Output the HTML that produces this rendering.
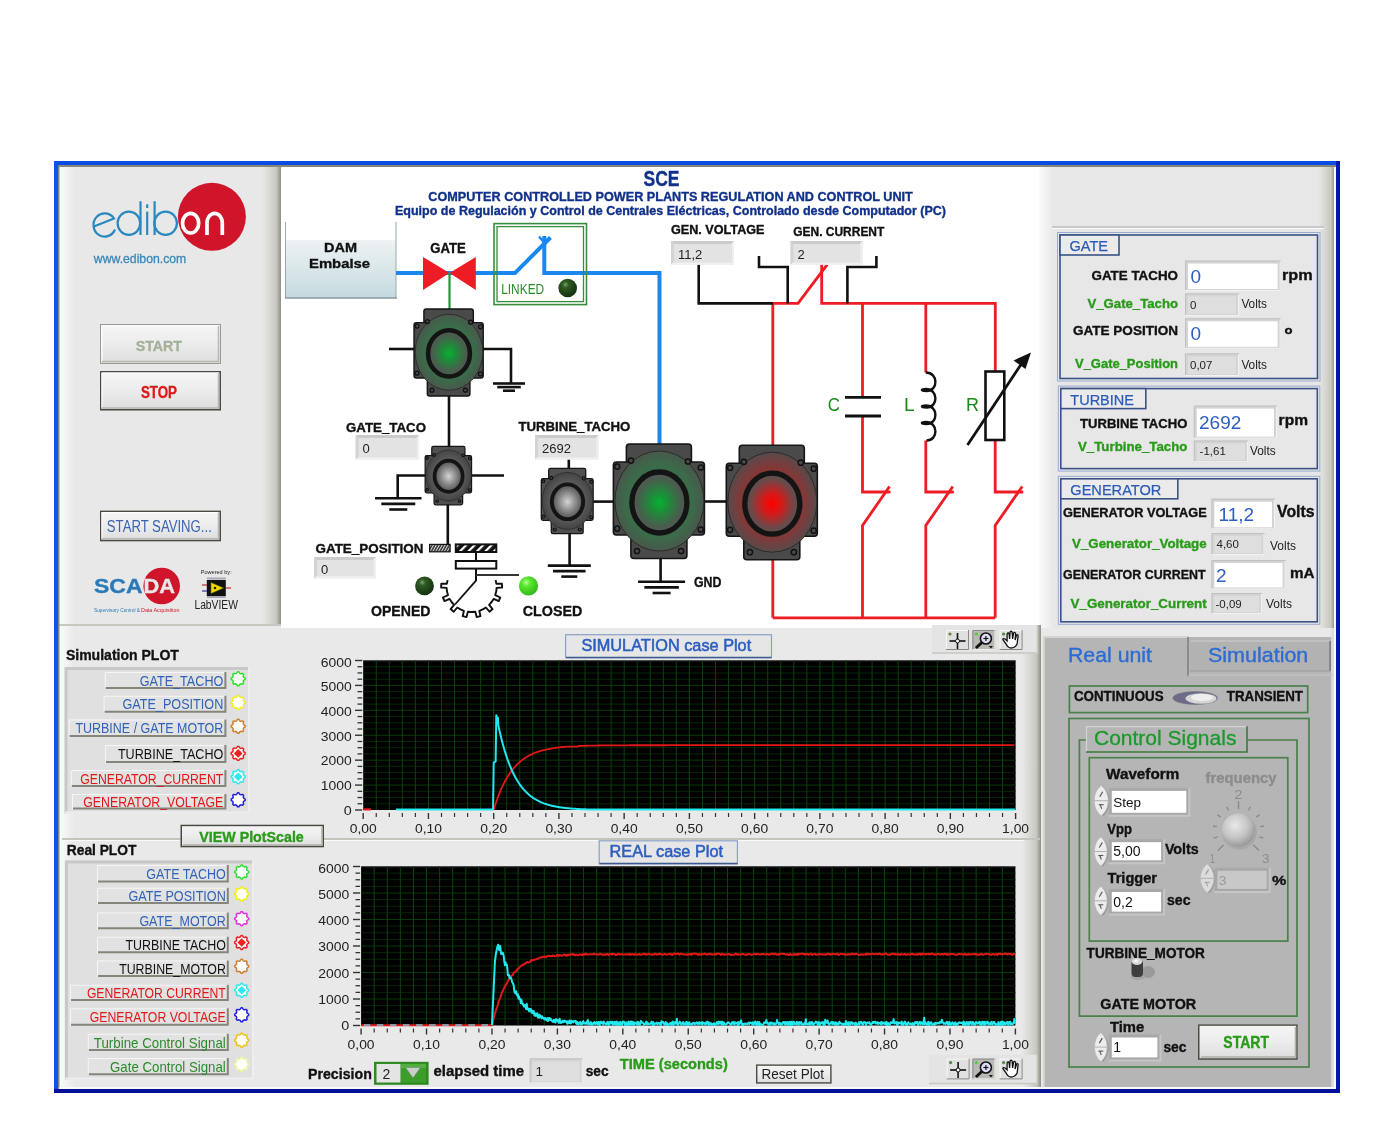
<!DOCTYPE html>
<html><head><meta charset="utf-8"><title>SCE</title>
<style>html,body{margin:0;padding:0;background:#fff;width:1393px;height:1125px;overflow:hidden}
svg{display:block;font-family:"Liberation Sans", sans-serif;will-change:transform}</style></head>
<body><svg width="1393" height="1125" viewBox="0 0 1393 1125">
<defs>
<linearGradient id="gLeftEdge" x1="0" x2="1" y1="0" y2="0"><stop offset="0" stop-color="#fbfbfb"/><stop offset="1" stop-color="#e8e8e8"/></linearGradient>
<linearGradient id="gRightEdge" x1="0" x2="1" y1="0" y2="0"><stop offset="0" stop-color="#e8e8e8"/><stop offset="0.75" stop-color="#c9c9c2"/><stop offset="1" stop-color="#8e8e84"/></linearGradient>
<linearGradient id="gBtn" x1="0" x2="0" y1="0" y2="1"><stop offset="0" stop-color="#f6f6f6"/><stop offset="0.5" stop-color="#ececec"/><stop offset="1" stop-color="#dcdcdc"/></linearGradient>
<linearGradient id="gWater" x1="0" x2="0" y1="0" y2="1"><stop offset="0" stop-color="#edf2f3"/><stop offset="0.45" stop-color="#dce8ea"/><stop offset="1" stop-color="#c4d9de"/></linearGradient>
<radialGradient id="gGreenCore" cx="0.5" cy="0.5" r="0.5"><stop offset="0" stop-color="#08b030"/><stop offset="0.35" stop-color="#1f8a3a"/><stop offset="0.8" stop-color="#4a5c4e"/><stop offset="1" stop-color="#555a55"/></radialGradient>
<radialGradient id="gGreenBody" cx="0.5" cy="0.5" r="0.5"><stop offset="0" stop-color="#2f7a45"/><stop offset="0.75" stop-color="#3c6a4a"/><stop offset="1" stop-color="#48584b"/></radialGradient>
<radialGradient id="gRedCore" cx="0.5" cy="0.5" r="0.5"><stop offset="0" stop-color="#ff0000"/><stop offset="0.35" stop-color="#d41a1a"/><stop offset="0.8" stop-color="#6a4a4a"/><stop offset="1" stop-color="#5a5050"/></radialGradient>
<radialGradient id="gRedBody" cx="0.5" cy="0.5" r="0.5"><stop offset="0" stop-color="#a82222"/><stop offset="0.75" stop-color="#7e3a3a"/><stop offset="1" stop-color="#584a4a"/></radialGradient>
<radialGradient id="gGrayCore" cx="0.5" cy="0.5" r="0.5"><stop offset="0" stop-color="#d4d4d4"/><stop offset="0.5" stop-color="#8e8e8e"/><stop offset="1" stop-color="#4e4e4e"/></radialGradient>
<radialGradient id="gGrayBody" cx="0.5" cy="0.5" r="0.5"><stop offset="0" stop-color="#7a7a7a"/><stop offset="0.65" stop-color="#5a5a5a"/><stop offset="1" stop-color="#444444"/></radialGradient>
<radialGradient id="gLedDark" cx="0.38" cy="0.32" r="0.7"><stop offset="0" stop-color="#7aa070"/><stop offset="0.25" stop-color="#2f5a22"/><stop offset="1" stop-color="#123010"/></radialGradient>
<radialGradient id="gLedBright" cx="0.38" cy="0.32" r="0.7"><stop offset="0" stop-color="#b8ff9a"/><stop offset="0.3" stop-color="#5ae830"/><stop offset="1" stop-color="#30b818"/></radialGradient>
<radialGradient id="gKnob" cx="0.4" cy="0.35" r="0.65"><stop offset="0" stop-color="#e8e8e8"/><stop offset="0.6" stop-color="#c4c4c4"/><stop offset="1" stop-color="#9a9a9a"/></radialGradient>
<pattern id="hatch" width="6" height="6" patternUnits="userSpaceOnUse" patternTransform="rotate(45)"><rect width="6" height="6" fill="#111"/><rect x="0" y="0" width="2.2" height="6" fill="#fff"/></pattern>
<pattern id="hatch2" width="2.5" height="4" patternUnits="userSpaceOnUse" patternTransform="rotate(30)"><rect width="2.5" height="4" fill="#333"/><rect x="0" y="0" width="1" height="4" fill="#ddd"/></pattern>
</defs>
<rect x="0" y="0" width="1393" height="1125" fill="#ffffff"/>
<rect x="58" y="165" width="1278" height="924" fill="#e9e9e9"/>
<rect x="59" y="167" width="222" height="459" fill="#e8e8e8"/>
<rect x="59" y="167" width="16" height="459" fill="url(#gLeftEdge)"/>
<rect x="262" y="167" width="19" height="459" fill="url(#gRightEdge)"/>
<rect x="59" y="624" width="222" height="2" fill="#c8c8c0"/>
<rect x="281" y="167" width="758" height="461" fill="#ffffff"/>
<rect x="1039" y="167" width="296" height="461" fill="#e7e7e7"/>
<rect x="1039" y="167" width="14" height="461" fill="url(#gLeftEdge)"/>
<rect x="1318" y="167" width="17" height="461" fill="url(#gRightEdge)"/>
<rect x="1052" y="226" width="272" height="2" fill="#c9c9c9"/>
<rect x="1052" y="228" width="272" height="1" fill="#fafafa"/>
<rect x="1022" y="625" width="19" height="464" fill="url(#gRightEdge)"/>
<rect x="59" y="626" width="16" height="463" fill="url(#gLeftEdge)"/>
<rect x="62" y="838" width="120" height="2" fill="#c4c4bc"/>
<rect x="62" y="840" width="120" height="1" fill="#fafafa"/>
<rect x="324" y="838" width="716" height="2" fill="#c4c4bc"/>
<rect x="324" y="840" width="700" height="1" fill="#fafafa"/>
<rect x="1041" y="628" width="294" height="461" fill="#e9e9e9"/>
<rect x="1043" y="637" width="288.5" height="450" fill="#b5b5b5"/>
<rect x="1331.5" y="628" width="2.5" height="461" fill="#dcdcdc"/>
<rect x="1043" y="637" width="2" height="450" fill="#d2d2d2"/>
<rect x="1043" y="636" width="146" height="2" fill="#d4d4d4"/>
<rect x="54" y="161" width="1286" height="4" fill="#0b4ce4"/>
<rect x="54" y="161" width="4" height="932" fill="#1050ee"/>
<rect x="1336" y="161" width="4" height="932" fill="#0616b0"/>
<rect x="54" y="1089" width="1286" height="4" fill="#020f9a"/>
<rect x="58" y="165" width="1278" height="2" fill="#85857a"/>
<rect x="58" y="165" width="1.5" height="924" fill="#85857a"/>
<rect x="1334" y="167" width="2" height="922" fill="#fafafa"/>
<rect x="59" y="1087" width="1277" height="2" fill="#fafafa"/>
<text x="643.5" y="185.6" font-size="22.5" fill="#10308a" font-weight="bold" text-anchor="start" textLength="36" lengthAdjust="spacingAndGlyphs" stroke="#10308a" stroke-width="0.35">SCE</text>
<text x="428.3" y="200.8" font-size="12.8" fill="#10308a" font-weight="bold" text-anchor="start" textLength="484.5" lengthAdjust="spacingAndGlyphs" stroke="#10308a" stroke-width="0.35">COMPUTER CONTROLLED POWER PLANTS REGULATION AND CONTROL UNIT</text>
<text x="395" y="214.8" font-size="12.6" fill="#10308a" font-weight="bold" text-anchor="start" textLength="551" lengthAdjust="spacingAndGlyphs" stroke="#10308a" stroke-width="0.35">Equipo de Regulación y Control de Centrales Eléctricas, Controlado desde Computador (PC)</text>
<rect x="286" y="240" width="110" height="58" fill="url(#gWater)"/>
<line x1="285.5" y1="222" x2="285.5" y2="298" stroke="#9aa" stroke-width="1"/>
<line x1="396" y1="222" x2="396" y2="298" stroke="#9aa" stroke-width="1"/>
<line x1="285" y1="298" x2="397" y2="298" stroke="#8a9aa0" stroke-width="1.5"/>
<text x="340.5" y="251.5" font-size="13.5" fill="#111" font-weight="bold" text-anchor="middle" textLength="33" lengthAdjust="spacingAndGlyphs" stroke="#111" stroke-width="0.35">DAM</text>
<text x="339.5" y="267.5" font-size="13.5" fill="#111" font-weight="bold" text-anchor="middle" textLength="61" lengthAdjust="spacingAndGlyphs" stroke="#111" stroke-width="0.35">Embalse</text>
<path d="M396 273.1 L514.9 273.1 L550.5 237.5" stroke="#1a88f0" stroke-width="4" fill="none" stroke-linejoin="round"/>
<path d="M544.3 236 L544.3 273.1 L659.5 273.1 L659.5 445" stroke="#1a88f0" stroke-width="4" fill="none"/>
<path d="M539 236.5 L545.5 244" stroke="#1a88f0" stroke-width="2.5" fill="none"/>
<path d="M423 257 L423 290 L449.5 273.1 Z" stroke="none" stroke-width="0" fill="#ee1c24"/>
<path d="M475.8 257 L475.8 290 L449.5 273.1 Z" stroke="none" stroke-width="0" fill="#ee1c24"/>
<line x1="449.5" y1="273" x2="449.5" y2="309" stroke="#1f9a3c" stroke-width="2.2"/>
<text x="448" y="252.6" font-size="13.8" fill="#111" font-weight="bold" text-anchor="middle" textLength="35.6" lengthAdjust="spacingAndGlyphs" stroke="#111" stroke-width="0.35">GATE</text>
<rect x="494" y="223.6" width="92.5" height="81" fill="none" stroke="#3a8c3a" stroke-width="1.6"/>
<rect x="497" y="226.6" width="86.5" height="75" fill="none" stroke="#3a8c3a" stroke-width="1.3"/>
<text x="501.2" y="294" font-size="14.5" fill="#2a8a2a" font-weight="normal" text-anchor="start" textLength="43" lengthAdjust="spacingAndGlyphs">LINKED</text>
<circle cx="567.7" cy="288" r="9.3" fill="url(#gLedDark)"/>
<line x1="389" y1="349" x2="415" y2="349" stroke="#111" stroke-width="2.6"/>
<path d="M482 349 L511 349 L511 384" stroke="#111" stroke-width="2.6" fill="none"/>
<line x1="493.0" y1="383.5" x2="525.0" y2="383.5" stroke="#111" stroke-width="2.6"/>
<line x1="497.25" y1="387.1" x2="520.75" y2="387.1" stroke="#111" stroke-width="2.6"/>
<line x1="503.0" y1="390.7" x2="515.0" y2="390.7" stroke="#111" stroke-width="2.6"/>
<line x1="449" y1="390" x2="449" y2="450" stroke="#111" stroke-width="2.6"/>
<g transform="translate(449,353) scale(0.76)"><rect x="-33" y="-58" width="65" height="45" rx="3" fill="#4a4a4a" stroke="#151515" stroke-width="1.8863914845565073"/><rect x="-46" y="-40" width="91" height="73" rx="3" fill="#4a4a4a" stroke="#151515" stroke-width="1.8863914845565073"/><rect x="-28.5" y="14" width="56" height="42.5" rx="3" fill="#4a4a4a" stroke="#151515" stroke-width="1.8863914845565073"/><ellipse cx="0" cy="-1" rx="44.5" ry="50" fill="url(#gGreenBody)" stroke="#262626" stroke-width="1.032370802417528"/><circle cx="-28.4" cy="-41.4" r="2.6" fill="#4a4a4a" stroke="#111" stroke-width="1.7206180040292134"/><circle cx="28.5" cy="-40.5" r="2.6" fill="#4a4a4a" stroke="#111" stroke-width="1.7206180040292134"/><circle cx="-42.2" cy="-35.4" r="2.6" fill="#4a4a4a" stroke="#111" stroke-width="1.7206180040292134"/><circle cx="41.4" cy="-34.5" r="2.6" fill="#4a4a4a" stroke="#111" stroke-width="1.7206180040292134"/><circle cx="-42.2" cy="26.6" r="2.6" fill="#4a4a4a" stroke="#111" stroke-width="1.7206180040292134"/><circle cx="41.4" cy="27.5" r="2.6" fill="#4a4a4a" stroke="#111" stroke-width="1.7206180040292134"/><circle cx="-22.4" cy="49" r="2.6" fill="#4a4a4a" stroke="#111" stroke-width="1.7206180040292134"/><circle cx="21.6" cy="49" r="2.6" fill="#4a4a4a" stroke="#111" stroke-width="1.7206180040292134"/><ellipse cx="0" cy="0.5" rx="27.5" ry="30.5" fill="url(#gGreenCore)" stroke="#141414" stroke-width="5.996664518838171"/></g>
<path d="M426 475.5 L397.7 475.5 L397.7 498" stroke="#111" stroke-width="2.6" fill="none"/>
<line x1="375.05" y1="498.3" x2="421.55" y2="498.3" stroke="#111" stroke-width="2.6"/>
<line x1="381.3" y1="503.90000000000003" x2="415.3" y2="503.90000000000003" stroke="#111" stroke-width="2.6"/>
<line x1="389.3" y1="509.5" x2="407.3" y2="509.5" stroke="#111" stroke-width="2.6"/>
<line x1="471" y1="475.5" x2="504" y2="475.5" stroke="#111" stroke-width="2.6"/>
<line x1="447.8" y1="500" x2="447.8" y2="545" stroke="#111" stroke-width="2.6"/>
<g transform="translate(448.6,476) scale(0.51)"><rect x="-33" y="-58" width="65" height="45" rx="3" fill="#505050" stroke="#151515" stroke-width="2.3965024482331683"/><rect x="-46" y="-40" width="91" height="73" rx="3" fill="#505050" stroke="#151515" stroke-width="2.3965024482331683"/><rect x="-28.5" y="14" width="56" height="42.5" rx="3" fill="#505050" stroke="#151515" stroke-width="2.3965024482331683"/><ellipse cx="0" cy="-1" rx="44.5" ry="50" fill="url(#gGrayBody)" stroke="#262626" stroke-width="1.260252075625209"/><circle cx="-28.4" cy="-41.4" r="2.6" fill="#4a4a4a" stroke="#111" stroke-width="2.100420126042015"/><circle cx="28.5" cy="-40.5" r="2.6" fill="#4a4a4a" stroke="#111" stroke-width="2.100420126042015"/><circle cx="-42.2" cy="-35.4" r="2.6" fill="#4a4a4a" stroke="#111" stroke-width="2.100420126042015"/><circle cx="41.4" cy="-34.5" r="2.6" fill="#4a4a4a" stroke="#111" stroke-width="2.100420126042015"/><circle cx="-42.2" cy="26.6" r="2.6" fill="#4a4a4a" stroke="#111" stroke-width="2.100420126042015"/><circle cx="41.4" cy="27.5" r="2.6" fill="#4a4a4a" stroke="#111" stroke-width="2.100420126042015"/><circle cx="-22.4" cy="49" r="2.6" fill="#4a4a4a" stroke="#111" stroke-width="2.100420126042015"/><circle cx="21.6" cy="49" r="2.6" fill="#4a4a4a" stroke="#111" stroke-width="2.100420126042015"/><ellipse cx="0" cy="0.5" rx="27.5" ry="30.5" fill="url(#gGrayCore)" stroke="#141414" stroke-width="7.175782891755845"/></g>
<line x1="568.8" y1="457" x2="568.8" y2="470" stroke="#111" stroke-width="2.6"/>
<line x1="593" y1="501.6" x2="615" y2="501.6" stroke="#111" stroke-width="2.6"/>
<line x1="569.6" y1="530" x2="569.6" y2="566" stroke="#111" stroke-width="2.6"/>
<line x1="547.8" y1="565.6" x2="590.8" y2="565.6" stroke="#111" stroke-width="2.6"/>
<line x1="553.05" y1="571.1" x2="585.55" y2="571.1" stroke="#111" stroke-width="2.6"/>
<line x1="561.3" y1="576.6" x2="577.3" y2="576.6" stroke="#111" stroke-width="2.6"/>
<g transform="translate(567.5,501.5) scale(0.57)"><rect x="-33" y="-58" width="65" height="45" rx="3" fill="#505050" stroke="#151515" stroke-width="2.2417907313710455"/><rect x="-46" y="-40" width="91" height="73" rx="3" fill="#505050" stroke="#151515" stroke-width="2.2417907313710455"/><rect x="-28.5" y="14" width="56" height="42.5" rx="3" fill="#505050" stroke="#151515" stroke-width="2.2417907313710455"/><ellipse cx="0" cy="-1" rx="44.5" ry="50" fill="url(#gGrayBody)" stroke="#262626" stroke-width="1.1920791213585396"/><circle cx="-28.4" cy="-41.4" r="2.6" fill="#4a4a4a" stroke="#111" stroke-width="1.986798535597566"/><circle cx="28.5" cy="-40.5" r="2.6" fill="#4a4a4a" stroke="#111" stroke-width="1.986798535597566"/><circle cx="-42.2" cy="-35.4" r="2.6" fill="#4a4a4a" stroke="#111" stroke-width="1.986798535597566"/><circle cx="41.4" cy="-34.5" r="2.6" fill="#4a4a4a" stroke="#111" stroke-width="1.986798535597566"/><circle cx="-42.2" cy="26.6" r="2.6" fill="#4a4a4a" stroke="#111" stroke-width="1.986798535597566"/><circle cx="41.4" cy="27.5" r="2.6" fill="#4a4a4a" stroke="#111" stroke-width="1.986798535597566"/><circle cx="-22.4" cy="49" r="2.6" fill="#4a4a4a" stroke="#111" stroke-width="1.986798535597566"/><circle cx="21.6" cy="49" r="2.6" fill="#4a4a4a" stroke="#111" stroke-width="1.986798535597566"/><ellipse cx="0" cy="0.5" rx="27.5" ry="30.5" fill="url(#gGrayCore)" stroke="#141414" stroke-width="6.825464065654548"/></g>
<line x1="703" y1="501.5" x2="729" y2="501.5" stroke="#111" stroke-width="2.6"/>
<line x1="660.6" y1="555" x2="660.6" y2="582" stroke="#111" stroke-width="2.6"/>
<line x1="638.1" y1="581.8" x2="685.1" y2="581.8" stroke="#111" stroke-width="2.6"/>
<line x1="644.35" y1="587.4" x2="678.85" y2="587.4" stroke="#111" stroke-width="2.6"/>
<line x1="652.6" y1="593.0" x2="670.6" y2="593.0" stroke="#111" stroke-width="2.6"/>
<g transform="translate(659.4,502) scale(1.0)"><rect x="-33" y="-58" width="65" height="45" rx="3" fill="#4a4a4a" stroke="#151515" stroke-width="1.6"/><rect x="-46" y="-40" width="91" height="73" rx="3" fill="#4a4a4a" stroke="#151515" stroke-width="1.6"/><rect x="-28.5" y="14" width="56" height="42.5" rx="3" fill="#4a4a4a" stroke="#151515" stroke-width="1.6"/><ellipse cx="0" cy="-1" rx="44.5" ry="50" fill="url(#gGreenBody)" stroke="#262626" stroke-width="0.9"/><circle cx="-28.4" cy="-41.4" r="2.6" fill="#4a4a4a" stroke="#111" stroke-width="1.5"/><circle cx="28.5" cy="-40.5" r="2.6" fill="#4a4a4a" stroke="#111" stroke-width="1.5"/><circle cx="-42.2" cy="-35.4" r="2.6" fill="#4a4a4a" stroke="#111" stroke-width="1.5"/><circle cx="41.4" cy="-34.5" r="2.6" fill="#4a4a4a" stroke="#111" stroke-width="1.5"/><circle cx="-42.2" cy="26.6" r="2.6" fill="#4a4a4a" stroke="#111" stroke-width="1.5"/><circle cx="41.4" cy="27.5" r="2.6" fill="#4a4a4a" stroke="#111" stroke-width="1.5"/><circle cx="-22.4" cy="49" r="2.6" fill="#4a4a4a" stroke="#111" stroke-width="1.5"/><circle cx="21.6" cy="49" r="2.6" fill="#4a4a4a" stroke="#111" stroke-width="1.5"/><ellipse cx="0" cy="0.5" rx="27.5" ry="30.5" fill="url(#gGreenCore)" stroke="#141414" stroke-width="5.3"/></g>
<text x="694" y="586.8" font-size="14" fill="#111" font-weight="bold" text-anchor="start" textLength="27.5" lengthAdjust="spacingAndGlyphs" stroke="#111" stroke-width="0.35">GND</text>
<path d="M772.8 617.8 L772.8 303.4 L798 303.4 L827.2 264.7" stroke="#ee1c24" stroke-width="2.8" fill="none"/>
<path d="M821.7 263.4 L821.7 303.4 L995.3 303.4 L995.3 372" stroke="#ee1c24" stroke-width="2.8" fill="none"/>
<line x1="862.5" y1="303.4" x2="862.5" y2="397.5" stroke="#ee1c24" stroke-width="2.8"/>
<line x1="925.8" y1="303.4" x2="925.8" y2="372.5" stroke="#ee1c24" stroke-width="2.8"/>
<g transform="translate(772.3,503.2) scale(1.0)"><rect x="-33" y="-58" width="65" height="45" rx="3" fill="#4a4a4a" stroke="#151515" stroke-width="1.6"/><rect x="-46" y="-40" width="91" height="73" rx="3" fill="#4a4a4a" stroke="#151515" stroke-width="1.6"/><rect x="-28.5" y="14" width="56" height="42.5" rx="3" fill="#4a4a4a" stroke="#151515" stroke-width="1.6"/><ellipse cx="0" cy="-1" rx="44.5" ry="50" fill="url(#gRedBody)" stroke="#262626" stroke-width="0.9"/><circle cx="-28.4" cy="-41.4" r="2.6" fill="#4a4a4a" stroke="#111" stroke-width="1.5"/><circle cx="28.5" cy="-40.5" r="2.6" fill="#4a4a4a" stroke="#111" stroke-width="1.5"/><circle cx="-42.2" cy="-35.4" r="2.6" fill="#4a4a4a" stroke="#111" stroke-width="1.5"/><circle cx="41.4" cy="-34.5" r="2.6" fill="#4a4a4a" stroke="#111" stroke-width="1.5"/><circle cx="-42.2" cy="26.6" r="2.6" fill="#4a4a4a" stroke="#111" stroke-width="1.5"/><circle cx="41.4" cy="27.5" r="2.6" fill="#4a4a4a" stroke="#111" stroke-width="1.5"/><circle cx="-22.4" cy="49" r="2.6" fill="#4a4a4a" stroke="#111" stroke-width="1.5"/><circle cx="21.6" cy="49" r="2.6" fill="#4a4a4a" stroke="#111" stroke-width="1.5"/><ellipse cx="0" cy="0.5" rx="27.5" ry="30.5" fill="url(#gRedCore)" stroke="#141414" stroke-width="5.3"/></g>
<path d="M698.7 263 L698.7 303.4 L773 303.4" stroke="#111" stroke-width="2.6" fill="none"/>
<path d="M759 256 L759 267 L787.7 267 L787.7 303.4" stroke="#111" stroke-width="2.6" fill="none"/>
<path d="M876.4 256 L876.4 267 L847.4 267 L847.4 303.4" stroke="#111" stroke-width="2.6" fill="none"/>
<path d="M862.5 417 L862.5 492 L890.5 492" stroke="#ee1c24" stroke-width="2.8" fill="none"/>
<path d="M889.5 486.5 L862.5 525.5 L862.5 617.8" stroke="#ee1c24" stroke-width="2.8" fill="none"/>
<path d="M925.8 440.5 L925.8 492 L953.8 492" stroke="#ee1c24" stroke-width="2.8" fill="none"/>
<path d="M952.8 486.5 L925.8 525.5 L925.8 617.8" stroke="#ee1c24" stroke-width="2.8" fill="none"/>
<path d="M995.2 440.5 L995.2 492 L1023.2 492" stroke="#ee1c24" stroke-width="2.8" fill="none"/>
<path d="M1022.2 486.5 L995.2 525.5 L995.2 617.8" stroke="#ee1c24" stroke-width="2.8" fill="none"/>
<line x1="772.8" y1="617.8" x2="995.2" y2="617.8" stroke="#ee1c24" stroke-width="2.8"/>
<line x1="845" y1="397.3" x2="881" y2="397.3" stroke="#111" stroke-width="2.8"/>
<line x1="845" y1="416" x2="881" y2="416" stroke="#111" stroke-width="2.8"/>
<text x="827.8" y="410.8" font-size="18.5" fill="#1a8a1a" font-weight="normal" text-anchor="start" textLength="12.2" lengthAdjust="spacingAndGlyphs">C</text>
<path d="M925.8 372.5 C938.5 372.5 938.5 391.0 926.5 391.0 C920.5 391.0 920.5 389.0 925.8 389.0 C938.5 389.0 938.5 407.5 926.5 407.5 C920.5 407.5 920.5 405.5 925.8 405.5 C938.5 405.5 938.5 424.0 926.5 424.0 C920.5 424.0 920.5 422.0 925.8 422.0 C938.5 422.0 938.5 440.5 926.5 440.5" stroke="#111" stroke-width="2.4" fill="none"/>
<text x="904" y="410.8" font-size="18.5" fill="#1a8a1a" font-weight="normal" text-anchor="start" textLength="10.6" lengthAdjust="spacingAndGlyphs">L</text>
<rect x="985.5" y="371.5" width="18.8" height="68.5" fill="#fff" stroke="#111" stroke-width="2.6"/>
<text x="966" y="410.8" font-size="18.5" fill="#1a8a1a" font-weight="normal" text-anchor="start" textLength="13" lengthAdjust="spacingAndGlyphs">R</text>
<line x1="967.5" y1="445" x2="1022" y2="363" stroke="#111" stroke-width="2.8"/>
<path d="M1031 352.5 L1013.5 360.5 L1025.5 369 Z" stroke="none" stroke-width="0" fill="#111"/>
<rect x="355.6" y="435" width="63.5" height="24.5" fill="#e3e3e3"/>
<path d="M355.6 435 L419.1 435 L416.1 438 L358.6 438 Z" fill="#cbcbcb"/>
<path d="M355.6 435 L358.6 438 L358.6 456.5 L355.6 459.5 Z" fill="#d4d4d4"/>
<path d="M419.1 435 L419.1 459.5 L417.1 457.5 L417.1 437 Z" fill="#f0f0f0"/>
<path d="M355.6 459.5 L419.1 459.5 L417.1 457.5 L357.6 457.5 Z" fill="#f2f2f2"/>
<text x="362.6" y="453.13" font-size="13" fill="#222" font-weight="normal" text-anchor="start">0</text>
<text x="346" y="431.5" font-size="13.2" fill="#111" font-weight="bold" text-anchor="start" textLength="80" lengthAdjust="spacingAndGlyphs" stroke="#111" stroke-width="0.35">GATE_TACO</text>
<rect x="535" y="435" width="63.5" height="24.5" fill="#e3e3e3"/>
<path d="M535 435 L598.5 435 L595.5 438 L538 438 Z" fill="#cbcbcb"/>
<path d="M535 435 L538 438 L538 456.5 L535 459.5 Z" fill="#d4d4d4"/>
<path d="M598.5 435 L598.5 459.5 L596.5 457.5 L596.5 437 Z" fill="#f0f0f0"/>
<path d="M535 459.5 L598.5 459.5 L596.5 457.5 L537 457.5 Z" fill="#f2f2f2"/>
<text x="542" y="453.13" font-size="13" fill="#222" font-weight="normal" text-anchor="start">2692</text>
<text x="518.4" y="431" font-size="13.2" fill="#111" font-weight="bold" text-anchor="start" textLength="112" lengthAdjust="spacingAndGlyphs" stroke="#111" stroke-width="0.35">TURBINE_TACHO</text>
<text x="671" y="234.3" font-size="12.8" fill="#111" font-weight="bold" text-anchor="start" textLength="93.5" lengthAdjust="spacingAndGlyphs" stroke="#111" stroke-width="0.35">GEN. VOLTAGE</text>
<rect x="671" y="241" width="63" height="23.7" fill="#e3e3e3"/>
<path d="M671 241 L734 241 L731 244 L674 244 Z" fill="#cbcbcb"/>
<path d="M671 241 L674 244 L674 261.7 L671 264.7 Z" fill="#d4d4d4"/>
<path d="M734 241 L734 264.7 L732 262.7 L732 243 Z" fill="#f0f0f0"/>
<path d="M671 264.7 L734 264.7 L732 262.7 L673 262.7 Z" fill="#f2f2f2"/>
<text x="678" y="258.72999999999996" font-size="13" fill="#222" font-weight="normal" text-anchor="start">11,2</text>
<text x="793.3" y="236" font-size="12.6" fill="#111" font-weight="bold" text-anchor="start" textLength="91" lengthAdjust="spacingAndGlyphs" stroke="#111" stroke-width="0.35">GEN. CURRENT</text>
<rect x="790.5" y="241" width="72" height="23.7" fill="#e3e3e3"/>
<path d="M790.5 241 L862.5 241 L859.5 244 L793.5 244 Z" fill="#cbcbcb"/>
<path d="M790.5 241 L793.5 244 L793.5 261.7 L790.5 264.7 Z" fill="#d4d4d4"/>
<path d="M862.5 241 L862.5 264.7 L860.5 262.7 L860.5 243 Z" fill="#f0f0f0"/>
<path d="M790.5 264.7 L862.5 264.7 L860.5 262.7 L792.5 262.7 Z" fill="#f2f2f2"/>
<text x="797.5" y="258.72999999999996" font-size="13" fill="#222" font-weight="normal" text-anchor="start">2</text>
<rect x="314" y="557" width="62" height="21.5" fill="#e3e3e3"/>
<path d="M314 557 L376 557 L373 560 L317 560 Z" fill="#cbcbcb"/>
<path d="M314 557 L317 560 L317 575.5 L314 578.5 Z" fill="#d4d4d4"/>
<path d="M376 557 L376 578.5 L374 576.5 L374 559 Z" fill="#f0f0f0"/>
<path d="M314 578.5 L376 578.5 L374 576.5 L316 576.5 Z" fill="#f2f2f2"/>
<text x="321" y="573.63" font-size="13" fill="#222" font-weight="normal" text-anchor="start">0</text>
<text x="315.5" y="553" font-size="13.2" fill="#111" font-weight="bold" text-anchor="start" textLength="108" lengthAdjust="spacingAndGlyphs" stroke="#111" stroke-width="0.35">GATE_POSITION</text>
<rect x="429.6" y="544.4" width="20.5" height="7.4" fill="url(#hatch2)" stroke="#111" stroke-width="1.2"/>
<rect x="455.8" y="544.4" width="40.5" height="7.6" fill="url(#hatch)" stroke="#111" stroke-width="2"/>
<line x1="476" y1="552" x2="476" y2="561" stroke="#111" stroke-width="2"/>
<rect x="455.8" y="561" width="40.5" height="7.6" fill="#fff" stroke="#111" stroke-width="2"/>
<line x1="476" y1="568.6" x2="476" y2="581" stroke="#111" stroke-width="2"/>
<line x1="476" y1="575" x2="519" y2="575" stroke="#333" stroke-width="2"/>
<line x1="476" y1="580.7" x2="455" y2="604.5" stroke="#111" stroke-width="1.8"/>
<path d="M447.6 580.1 L446.8 583.7 L441.3 583.6 L441.1 587.5 L446.6 587.9 L447.0 591.6 L447.0 591.6 L448.0 595.1 L442.9 597.5 L444.5 601.1 L449.6 598.9 L451.6 602.0 L451.6 602.0 L454.1 604.8 L450.6 609.1 L453.7 611.7 L457.3 607.5 L460.4 609.4 L460.4 609.4 L463.9 610.8 L462.7 616.2 L466.5 617.1 L467.9 611.7 L471.6 612.0 L471.6 612.0 L475.3 611.7 L476.7 617.1 L480.5 616.2 L479.3 610.8 L482.8 609.4 L482.8 609.4 L485.9 607.5 L489.5 611.7 L492.6 609.1 L489.1 604.8 L491.6 602.0 L491.6 602.0 L493.6 598.9 L498.7 601.1 L500.3 597.5 L495.2 595.1 L496.2 591.6 L496.2 591.6 L496.6 587.9 L502.1 587.5 L501.9 583.6 L496.4 583.7 L495.6 580.1" stroke="#111" stroke-width="1.9" fill="none" stroke-linejoin="round"/>
<circle cx="424.5" cy="585.9" r="9.4" fill="url(#gLedDark)"/>
<circle cx="528.5" cy="585.9" r="9.6" fill="url(#gLedBright)"/>
<text x="371" y="616.2" font-size="15.5" fill="#111" font-weight="bold" text-anchor="start" textLength="59.5" lengthAdjust="spacingAndGlyphs" stroke="#111" stroke-width="0.35">OPENED</text>
<text x="522.8" y="616.2" font-size="15.5" fill="#111" font-weight="bold" text-anchor="start" textLength="59.5" lengthAdjust="spacingAndGlyphs" stroke="#111" stroke-width="0.35">CLOSED</text>
<circle cx="211.9" cy="216.8" r="34" fill="#d0142a"/>
<path d="M93.8 226.5 L114 218.5 A11.2 11.6 0 1 0 115 229.5" stroke="#2a88c0" stroke-width="2.2" fill="none"/>
<ellipse cx="128.9" cy="223.2" rx="11.3" ry="11.6" fill="none" stroke="#2a88c0" stroke-width="2.2"/>
<line x1="140.5" y1="201.2" x2="140.5" y2="235" stroke="#2a88c0" stroke-width="2.2"/>
<line x1="147.2" y1="211.6" x2="147.2" y2="235" stroke="#2a88c0" stroke-width="2.2"/>
<line x1="147.2" y1="204.3" x2="147.2" y2="208" stroke="#2a88c0" stroke-width="2.2"/>
<line x1="154.6" y1="201.2" x2="154.6" y2="235" stroke="#2a88c0" stroke-width="2.2"/>
<ellipse cx="165.6" cy="223.2" rx="11.3" ry="11.6" fill="none" stroke="#2a88c0" stroke-width="2.2"/>
<ellipse cx="190.6" cy="223.2" rx="8.1" ry="9.8" fill="none" stroke="#fff" stroke-width="3.7"/>
<path d="M207 235 L207 223 A7.65 9.6 0 0 1 222.3 223 L222.3 235" stroke="#fff" stroke-width="3.7" fill="none"/>
<text x="93.8" y="262.9" font-size="12.6" fill="#3a88b8" font-weight="normal" text-anchor="start" textLength="92.5" lengthAdjust="spacingAndGlyphs" stroke="#3a88b8" stroke-width="0.3">www.edibon.com</text>
<rect x="100" y="324" width="121" height="40" fill="url(#gBtn)"/>
<rect x="100.5" y="324.5" width="120" height="39" fill="none" stroke="#9a9a92" stroke-width="1"/>
<path d="M102 362 L102 326 L219 326" stroke="#ffffff" stroke-width="1.2" fill="none"/>
<path d="M102 361.5 L218.5 361.5 L218.5 326" stroke="#b8b8b0" stroke-width="1.5" fill="none"/>
<text x="135.7" y="351" font-size="15.3" fill="#a3b09a" font-weight="bold" text-anchor="start" textLength="46.3" lengthAdjust="spacingAndGlyphs" stroke="#a3b09a" stroke-width="0.35">START</text>
<rect x="100" y="371" width="121" height="39.5" fill="url(#gBtn)"/>
<rect x="100.75" y="371.75" width="119.5" height="38.0" fill="none" stroke="#4a4a44" stroke-width="1.5"/>
<path d="M102 408.5 L102 373 L219 373" stroke="#ffffff" stroke-width="1.2" fill="none"/>
<path d="M102 408.0 L218.5 408.0 L218.5 373" stroke="#b8b8b0" stroke-width="1.5" fill="none"/>
<text x="140.9" y="397.8" font-size="15.6" fill="#e01818" font-weight="bold" text-anchor="start" textLength="36.1" lengthAdjust="spacingAndGlyphs" stroke="#e01818" stroke-width="0.35">STOP</text>
<rect x="100" y="510.6" width="121" height="30.7" fill="url(#gBtn)"/>
<rect x="100.75" y="511.35" width="119.5" height="29.2" fill="none" stroke="#4a4a44" stroke-width="1.5"/>
<path d="M102 539.3000000000001 L102 512.6 L219 512.6" stroke="#ffffff" stroke-width="1.2" fill="none"/>
<path d="M102 538.8000000000001 L218.5 538.8000000000001 L218.5 512.6" stroke="#b8b8b0" stroke-width="1.5" fill="none"/>
<text x="106.8" y="532.3" font-size="15.6" fill="#3a64b4" font-weight="normal" text-anchor="start" textLength="105" lengthAdjust="spacingAndGlyphs">START SAVING...</text>
<circle cx="161.7" cy="586" r="18.3" fill="#d0142a"/>
<text x="94" y="592.8" font-size="19.8" fill="#2a7ab8" font-weight="bold" text-anchor="start" textLength="48.5" lengthAdjust="spacingAndGlyphs" stroke="#2a7ab8" stroke-width="0.35">SCA</text>
<text x="143.4" y="592.8" font-size="19.8" fill="#e8e8e8" font-weight="bold" text-anchor="start" textLength="31.5" lengthAdjust="spacingAndGlyphs" stroke="#e8e8e8" stroke-width="0.35">DA</text>
<text x="94" y="611.5" font-size="5.3" fill="#2a7ab8" font-weight="normal" text-anchor="start" textLength="46" lengthAdjust="spacingAndGlyphs">Supervisory Control &amp; </text>
<text x="141" y="611.5" font-size="5.3" fill="#d0142a" font-weight="normal" text-anchor="start" textLength="38.5" lengthAdjust="spacingAndGlyphs">Data Acquisition</text>
<text x="200.7" y="573.6" font-size="6.2" fill="#222" font-weight="normal" text-anchor="start" textLength="31" lengthAdjust="spacingAndGlyphs">Powered by:</text>
<rect x="206.8" y="577.5" width="19" height="2" fill="#a8a8b8"/>
<rect x="206.8" y="596" width="19" height="2" fill="#a8a8b8"/>
<rect x="206.8" y="580" width="19" height="16" fill="#111"/>
<line x1="202" y1="585" x2="207" y2="585" stroke="#c22" stroke-width="1.2"/>
<line x1="226" y1="588" x2="231" y2="588" stroke="#c22" stroke-width="1.2"/>
<line x1="202" y1="591" x2="207" y2="591" stroke="#33a" stroke-width="1.2"/>
<path d="M211 582.5 L211 593.5 L223.5 588 Z" stroke="#6a6a10" stroke-width="0.6" fill="#f0dc00"/>
<circle cx="215" cy="588" r="1.3" fill="#222"/>
<text x="194.4" y="609" font-size="12.4" fill="#222" font-weight="normal" text-anchor="start" textLength="43.6" lengthAdjust="spacingAndGlyphs">LabVIEW</text>
<rect x="1057.5" y="232.5" width="262.5" height="148.5" fill="none" stroke="#98acd0" stroke-width="1"/>
<rect x="1060" y="235" width="257.5" height="143.5" fill="none" stroke="#3a5286" stroke-width="1.6"/>
<rect x="1060" y="235" width="59" height="20" fill="#ebebeb" stroke="#3a5286" stroke-width="1.6"/>
<text x="1069.5" y="251.2" font-size="15.2" fill="#2a5ab8" font-weight="normal" text-anchor="start" textLength="38.5" lengthAdjust="spacingAndGlyphs" stroke="#2a5ab8" stroke-width="0.25">GATE</text>
<text x="1178" y="280" font-size="13.4" fill="#111" font-weight="bold" text-anchor="end" textLength="86.5" lengthAdjust="spacingAndGlyphs" stroke="#111" stroke-width="0.35">GATE TACHO</text>
<rect x="1185" y="260.6" width="95.6" height="30.4" fill="#d4d4d4"/>
<rect x="1188" y="263.6" width="89.6" height="25.4" fill="#ffffff"/>
<path d="M1185.5 291.0 L1185.5 261.1 L1280.6 261.1" stroke="#c0c0c0" stroke-width="1" fill="none"/>
<path d="M1280.1 261.6 L1280.1 290.5 L1185 290.5" stroke="#f2f2f2" stroke-width="1" fill="none"/>
<text x="1190.5" y="282.64" font-size="19" fill="#2c5ec0" font-weight="normal" text-anchor="start">0</text>
<text x="1282" y="280.3" font-size="15" fill="#111" font-weight="bold" text-anchor="start" textLength="30.7" lengthAdjust="spacingAndGlyphs" stroke="#111" stroke-width="0.35">rpm</text>
<text x="1178" y="307.8" font-size="13" fill="#2a9a1a" font-weight="bold" text-anchor="end" textLength="90.5" lengthAdjust="spacingAndGlyphs" stroke="#2a9a1a" stroke-width="0.35">V_Gate_Tacho</text>
<rect x="1185" y="293.4" width="54" height="22.6" fill="#d4d4d4"/>
<rect x="1188" y="296.4" width="48" height="17.6" fill="#dedede"/>
<path d="M1185.5 316.0 L1185.5 293.9 L1239 293.9" stroke="#c0c0c0" stroke-width="1" fill="none"/>
<path d="M1238.5 294.4 L1238.5 315.5 L1185 315.5" stroke="#f2f2f2" stroke-width="1" fill="none"/>
<text x="1190" y="308.84" font-size="11.5" fill="#222" font-weight="normal" text-anchor="start">0</text>
<text x="1241.4" y="308.2" font-size="12.5" fill="#222" font-weight="normal" text-anchor="start" textLength="25.6" lengthAdjust="spacingAndGlyphs">Volts</text>
<text x="1178" y="334.6" font-size="13.4" fill="#111" font-weight="bold" text-anchor="end" textLength="105" lengthAdjust="spacingAndGlyphs" stroke="#111" stroke-width="0.35">GATE POSITION</text>
<rect x="1185" y="318.3" width="95.6" height="30.5" fill="#d4d4d4"/>
<rect x="1188" y="321.3" width="89.6" height="25.5" fill="#ffffff"/>
<path d="M1185.5 348.8 L1185.5 318.8 L1280.6 318.8" stroke="#c0c0c0" stroke-width="1" fill="none"/>
<path d="M1280.1 319.3 L1280.1 348.3 L1185 348.3" stroke="#f2f2f2" stroke-width="1" fill="none"/>
<text x="1190.5" y="340.39" font-size="19" fill="#2c5ec0" font-weight="normal" text-anchor="start">0</text>
<text x="1284.5" y="333.5" font-size="10" fill="#111" font-weight="bold" text-anchor="start" textLength="8" lengthAdjust="spacingAndGlyphs" stroke="#111" stroke-width="0.35">o</text>
<text x="1178" y="368" font-size="13" fill="#2a9a1a" font-weight="bold" text-anchor="end" textLength="103" lengthAdjust="spacingAndGlyphs" stroke="#2a9a1a" stroke-width="0.35">V_Gate_Position</text>
<rect x="1185" y="353.4" width="54" height="22.6" fill="#d4d4d4"/>
<rect x="1188" y="356.4" width="48" height="17.6" fill="#dedede"/>
<path d="M1185.5 376.0 L1185.5 353.9 L1239 353.9" stroke="#c0c0c0" stroke-width="1" fill="none"/>
<path d="M1238.5 354.4 L1238.5 375.5 L1185 375.5" stroke="#f2f2f2" stroke-width="1" fill="none"/>
<text x="1190" y="368.84" font-size="11.5" fill="#222" font-weight="normal" text-anchor="start">0,07</text>
<text x="1241.4" y="368.6" font-size="12.5" fill="#222" font-weight="normal" text-anchor="start" textLength="25.6" lengthAdjust="spacingAndGlyphs">Volts</text>
<rect x="1058.3" y="386.1" width="261.5" height="85" fill="none" stroke="#98acd0" stroke-width="1"/>
<rect x="1060.8" y="388.6" width="256.5" height="80" fill="none" stroke="#3a5286" stroke-width="1.6"/>
<rect x="1060.8" y="388.6" width="85" height="20" fill="#ebebeb" stroke="#3a5286" stroke-width="1.6"/>
<text x="1070.3" y="404.8" font-size="15.2" fill="#2a5ab8" font-weight="normal" text-anchor="start" textLength="63.7" lengthAdjust="spacingAndGlyphs" stroke="#2a5ab8" stroke-width="0.25">TURBINE</text>
<text x="1187.4" y="427.8" font-size="13.4" fill="#111" font-weight="bold" text-anchor="end" textLength="107.4" lengthAdjust="spacingAndGlyphs" stroke="#111" stroke-width="0.35">TURBINE TACHO</text>
<rect x="1193.8" y="405.6" width="83.2" height="33" fill="#d4d4d4"/>
<rect x="1196.8" y="408.6" width="77.2" height="28" fill="#ffffff"/>
<path d="M1194.3 438.6 L1194.3 406.1 L1277.0 406.1" stroke="#c0c0c0" stroke-width="1" fill="none"/>
<path d="M1276.5 406.6 L1276.5 438.1 L1193.8 438.1" stroke="#f2f2f2" stroke-width="1" fill="none"/>
<text x="1199" y="428.94" font-size="19" fill="#2c5ec0" font-weight="normal" text-anchor="start">2692</text>
<text x="1278.6" y="424.8" font-size="15" fill="#111" font-weight="bold" text-anchor="start" textLength="29.4" lengthAdjust="spacingAndGlyphs" stroke="#111" stroke-width="0.35">rpm</text>
<text x="1187.4" y="450.7" font-size="13" fill="#2a9a1a" font-weight="bold" text-anchor="end" textLength="109.4" lengthAdjust="spacingAndGlyphs" stroke="#2a9a1a" stroke-width="0.35">V_Turbine_Tacho</text>
<rect x="1193.8" y="440.5" width="54.2" height="21.7" fill="#d4d4d4"/>
<rect x="1196.8" y="443.5" width="48.2" height="16.7" fill="#dedede"/>
<path d="M1194.3 462.2 L1194.3 441.0 L1248.0 441.0" stroke="#c0c0c0" stroke-width="1" fill="none"/>
<path d="M1247.5 441.5 L1247.5 461.7 L1193.8 461.7" stroke="#f2f2f2" stroke-width="1" fill="none"/>
<text x="1199.6" y="455.49" font-size="11.5" fill="#222" font-weight="normal" text-anchor="start">-1,61</text>
<text x="1250" y="454.6" font-size="12.5" fill="#222" font-weight="normal" text-anchor="start" textLength="25.7" lengthAdjust="spacingAndGlyphs">Volts</text>
<rect x="1058.3" y="476.3" width="261.5" height="148" fill="none" stroke="#98acd0" stroke-width="1"/>
<rect x="1060.8" y="478.8" width="256.5" height="143" fill="none" stroke="#3a5286" stroke-width="1.6"/>
<rect x="1060.8" y="478.8" width="117" height="20" fill="#ebebeb" stroke="#3a5286" stroke-width="1.6"/>
<text x="1070.3" y="495.0" font-size="15.2" fill="#2a5ab8" font-weight="normal" text-anchor="start" textLength="91" lengthAdjust="spacingAndGlyphs" stroke="#2a5ab8" stroke-width="0.25">GENERATOR</text>
<text x="1206.7" y="517.4" font-size="13.4" fill="#111" font-weight="bold" text-anchor="end" textLength="143.7" lengthAdjust="spacingAndGlyphs" stroke="#111" stroke-width="0.35">GENERATOR VOLTAGE</text>
<rect x="1211.4" y="498.7" width="63.6" height="30.6" fill="#d4d4d4"/>
<rect x="1214.4" y="501.7" width="57.6" height="25.6" fill="#ffffff"/>
<path d="M1211.9 529.3 L1211.9 499.2 L1275.0 499.2" stroke="#c0c0c0" stroke-width="1" fill="none"/>
<path d="M1274.5 499.7 L1274.5 528.8 L1211.4 528.8" stroke="#f2f2f2" stroke-width="1" fill="none"/>
<text x="1218.5" y="520.84" font-size="19" fill="#2c5ec0" font-weight="normal" text-anchor="start">11,2</text>
<text x="1277" y="517.4" font-size="16.5" fill="#111" font-weight="bold" text-anchor="start" textLength="37.6" lengthAdjust="spacingAndGlyphs" stroke="#111" stroke-width="0.35">Volts</text>
<text x="1206.7" y="547.8" font-size="13" fill="#2a9a1a" font-weight="bold" text-anchor="end" textLength="134.7" lengthAdjust="spacingAndGlyphs" stroke="#2a9a1a" stroke-width="0.35">V_Generator_Voltage</text>
<rect x="1211.4" y="533" width="53.1" height="22" fill="#d4d4d4"/>
<rect x="1214.4" y="536" width="47.1" height="17" fill="#dedede"/>
<path d="M1211.9 555 L1211.9 533.5 L1264.5 533.5" stroke="#c0c0c0" stroke-width="1" fill="none"/>
<path d="M1264.0 534 L1264.0 554.5 L1211.4 554.5" stroke="#f2f2f2" stroke-width="1" fill="none"/>
<text x="1216.5" y="548.14" font-size="11.5" fill="#222" font-weight="normal" text-anchor="start">4,60</text>
<text x="1270" y="549.6" font-size="12.5" fill="#222" font-weight="normal" text-anchor="start" textLength="26" lengthAdjust="spacingAndGlyphs">Volts</text>
<text x="1205.5" y="578.6" font-size="13.4" fill="#111" font-weight="bold" text-anchor="end" textLength="142.5" lengthAdjust="spacingAndGlyphs" stroke="#111" stroke-width="0.35">GENERATOR CURRENT</text>
<rect x="1211.4" y="560" width="74.2" height="29.4" fill="#d4d4d4"/>
<rect x="1214.4" y="563" width="68.2" height="24.4" fill="#ffffff"/>
<path d="M1211.9 589.4 L1211.9 560.5 L1285.6000000000001 560.5" stroke="#c0c0c0" stroke-width="1" fill="none"/>
<path d="M1285.1000000000001 561 L1285.1000000000001 588.9 L1211.4 588.9" stroke="#f2f2f2" stroke-width="1" fill="none"/>
<text x="1216" y="581.5400000000001" font-size="19" fill="#2c5ec0" font-weight="normal" text-anchor="start">2</text>
<text x="1290" y="578.4" font-size="15.5" fill="#111" font-weight="bold" text-anchor="start" textLength="24.6" lengthAdjust="spacingAndGlyphs" stroke="#111" stroke-width="0.35">mA</text>
<text x="1206.7" y="608" font-size="13" fill="#2a9a1a" font-weight="bold" text-anchor="end" textLength="136.2" lengthAdjust="spacingAndGlyphs" stroke="#2a9a1a" stroke-width="0.35">V_Generator_Current</text>
<rect x="1211.4" y="593" width="50.6" height="21" fill="#d4d4d4"/>
<rect x="1214.4" y="596" width="44.6" height="16" fill="#dedede"/>
<path d="M1211.9 614 L1211.9 593.5 L1262.0 593.5" stroke="#c0c0c0" stroke-width="1" fill="none"/>
<path d="M1261.5 594 L1261.5 613.5 L1211.4 613.5" stroke="#f2f2f2" stroke-width="1" fill="none"/>
<text x="1215.5" y="607.64" font-size="11.5" fill="#222" font-weight="normal" text-anchor="start">-0,09</text>
<text x="1266" y="608.3" font-size="12.5" fill="#222" font-weight="normal" text-anchor="start" textLength="26" lengthAdjust="spacingAndGlyphs">Volts</text>
<text x="65.9" y="660.3" font-size="15.5" fill="#111" font-weight="bold" text-anchor="start" textLength="113" lengthAdjust="spacingAndGlyphs" stroke="#111" stroke-width="0.35">Simulation PLOT</text>
<rect x="65" y="667" width="185" height="146.39999999999998" fill="#e0e0e0"/>
<path d="M66 813.4 L66 668.5 L250 668.5" stroke="#c8c8c8" stroke-width="3" fill="none"/>
<path d="M65 812.4 L249 812.4 L249 667" stroke="#eeeeee" stroke-width="2" fill="none"/>
<rect x="104.7" y="672" width="121.7" height="17" fill="#e2e2e2"/>
<path d="M105.2 689 L105.2 672.5 L226.4 672.5" stroke="#f6f6f6" stroke-width="1" fill="none"/>
<path d="M105.7 688 L225.4 688 L225.4 672" stroke="#85857c" stroke-width="2" fill="none"/>
<text x="139.7" y="685.7" font-size="14.8" fill="#3062b8" font-weight="normal" text-anchor="start" textLength="83.60000000000002" lengthAdjust="spacingAndGlyphs">GATE_TACHO</text>
<polygon points="245.17,678.11 245.17,679.49 243.65,680.45 243.23,681.49 243.61,683.24 242.64,684.21 240.89,683.83 239.85,684.25 238.89,685.77 237.51,685.77 236.55,684.25 235.51,683.83 233.76,684.21 232.79,683.24 233.17,681.49 232.75,680.45 231.23,679.49 231.23,678.11 232.75,677.15 233.17,676.11 232.79,674.36 233.76,673.39 235.51,673.77 236.55,673.35 237.51,671.83 238.89,671.83 239.85,673.35 240.89,673.77 242.64,673.39 243.61,674.36 243.23,676.11 243.65,677.15" fill="#ffffff" stroke="#30e030" stroke-width="1.5" stroke-linejoin="round"/>
<rect x="103.6" y="695.8" width="122.80000000000001" height="16.90000000000009" fill="#e2e2e2"/>
<path d="M104.1 712.7 L104.1 696.3 L226.4 696.3" stroke="#f6f6f6" stroke-width="1" fill="none"/>
<path d="M104.6 711.7 L225.4 711.7 L225.4 695.8" stroke="#85857c" stroke-width="2" fill="none"/>
<text x="122.4" y="709.45" font-size="14.8" fill="#3062b8" font-weight="normal" text-anchor="start" textLength="100.9" lengthAdjust="spacingAndGlyphs">GATE_POSITION</text>
<polygon points="245.17,701.81 245.17,703.19 243.65,704.15 243.23,705.19 243.61,706.94 242.64,707.91 240.89,707.53 239.85,707.95 238.89,709.47 237.51,709.47 236.55,707.95 235.51,707.53 233.76,707.91 232.79,706.94 233.17,705.19 232.75,704.15 231.23,703.19 231.23,701.81 232.75,700.85 233.17,699.81 232.79,698.06 233.76,697.09 235.51,697.47 236.55,697.05 237.51,695.53 238.89,695.53 239.85,697.05 240.89,697.47 242.64,697.09 243.61,698.06 243.23,699.81 243.65,700.85" fill="#ffffff" stroke="#f0f020" stroke-width="1.5" stroke-linejoin="round"/>
<rect x="68.6" y="719.5" width="157.8" height="17.5" fill="#e2e2e2"/>
<path d="M69.1 737 L69.1 720.0 L226.4 720.0" stroke="#f6f6f6" stroke-width="1" fill="none"/>
<path d="M69.6 736 L225.4 736 L225.4 719.5" stroke="#85857c" stroke-width="2" fill="none"/>
<text x="75.4" y="733.45" font-size="14.8" fill="#3062b8" font-weight="normal" text-anchor="start" textLength="147.9" lengthAdjust="spacingAndGlyphs">TURBINE / GATE MOTOR</text>
<polygon points="245.17,725.61 245.17,726.99 243.65,727.95 243.23,728.99 243.61,730.74 242.64,731.71 240.89,731.33 239.85,731.75 238.89,733.27 237.51,733.27 236.55,731.75 235.51,731.33 233.76,731.71 232.79,730.74 233.17,728.99 232.75,727.95 231.23,726.99 231.23,725.61 232.75,724.65 233.17,723.61 232.79,721.86 233.76,720.89 235.51,721.27 236.55,720.85 237.51,719.33 238.89,719.33 239.85,720.85 240.89,721.27 242.64,720.89 243.61,721.86 243.23,723.61 243.65,724.65" fill="#ffffff" stroke="#d08030" stroke-width="1.5" stroke-linejoin="round"/>
<rect x="105" y="745" width="121.4" height="18" fill="#e2e2e2"/>
<path d="M105.5 763 L105.5 745.5 L226.4 745.5" stroke="#f6f6f6" stroke-width="1" fill="none"/>
<path d="M106 762 L225.4 762 L225.4 745" stroke="#85857c" stroke-width="2" fill="none"/>
<text x="117.9" y="759.2" font-size="14.8" fill="#111" font-weight="normal" text-anchor="start" textLength="105.4" lengthAdjust="spacingAndGlyphs">TURBINE_TACHO</text>
<polygon points="245.17,752.71 245.17,754.09 243.65,755.05 243.23,756.09 243.61,757.84 242.64,758.81 240.89,758.43 239.85,758.85 238.89,760.37 237.51,760.37 236.55,758.85 235.51,758.43 233.76,758.81 232.79,757.84 233.17,756.09 232.75,755.05 231.23,754.09 231.23,752.71 232.75,751.75 233.17,750.71 232.79,748.96 233.76,747.99 235.51,748.37 236.55,747.95 237.51,746.43 238.89,746.43 239.85,747.95 240.89,748.37 242.64,747.99 243.61,748.96 243.23,750.71 243.65,751.75" fill="#ffffff" stroke="#ee2020" stroke-width="1.5" stroke-linejoin="round"/>
<polygon points="233.89999999999998,753.4 238.2,749.1 242.5,753.4 238.2,757.6999999999999" fill="#ee2020"/>
<rect x="70.8" y="770" width="155.60000000000002" height="17" fill="#e2e2e2"/>
<path d="M71.3 787 L71.3 770.5 L226.4 770.5" stroke="#f6f6f6" stroke-width="1" fill="none"/>
<path d="M71.8 786 L225.4 786 L225.4 770" stroke="#85857c" stroke-width="2" fill="none"/>
<text x="80.3" y="783.7" font-size="14.8" fill="#e01818" font-weight="normal" text-anchor="start" textLength="143.0" lengthAdjust="spacingAndGlyphs">GENERATOR_CURRENT</text>
<polygon points="245.17,776.01 245.17,777.39 243.65,778.35 243.23,779.39 243.61,781.14 242.64,782.11 240.89,781.73 239.85,782.15 238.89,783.67 237.51,783.67 236.55,782.15 235.51,781.73 233.76,782.11 232.79,781.14 233.17,779.39 232.75,778.35 231.23,777.39 231.23,776.01 232.75,775.05 233.17,774.01 232.79,772.26 233.76,771.29 235.51,771.67 236.55,771.25 237.51,769.73 238.89,769.73 239.85,771.25 240.89,771.67 242.64,771.29 243.61,772.26 243.23,774.01 243.65,775.05" fill="#ffffff" stroke="#30e8f0" stroke-width="1.5" stroke-linejoin="round"/>
<polygon points="233.89999999999998,776.7 238.2,772.4000000000001 242.5,776.7 238.2,781.0" fill="#30e8f0"/>
<rect x="72" y="794" width="154.4" height="15.5" fill="#e2e2e2"/>
<path d="M72.5 809.5 L72.5 794.5 L226.4 794.5" stroke="#f6f6f6" stroke-width="1" fill="none"/>
<path d="M73 808.5 L225.4 808.5 L225.4 794" stroke="#85857c" stroke-width="2" fill="none"/>
<text x="83.3" y="806.95" font-size="14.8" fill="#e01818" font-weight="normal" text-anchor="start" textLength="140.0" lengthAdjust="spacingAndGlyphs">GENERATOR_VOLTAGE</text>
<polygon points="245.17,799.11 245.17,800.49 243.65,801.45 243.23,802.49 243.61,804.24 242.64,805.21 240.89,804.83 239.85,805.25 238.89,806.77 237.51,806.77 236.55,805.25 235.51,804.83 233.76,805.21 232.79,804.24 233.17,802.49 232.75,801.45 231.23,800.49 231.23,799.11 232.75,798.15 233.17,797.11 232.79,795.36 233.76,794.39 235.51,794.77 236.55,794.35 237.51,792.83 238.89,792.83 239.85,794.35 240.89,794.77 242.64,794.39 243.61,795.36 243.23,797.11 243.65,798.15" fill="#ffffff" stroke="#2020e0" stroke-width="1.5" stroke-linejoin="round"/>
<rect x="363.2" y="660.5" width="652.4000000000001" height="149.5" fill="#000"/>
<line x1="363.2" y1="666.7291666666666" x2="1015.6" y2="666.7291666666666" stroke="#082608" stroke-width="1"/>
<line x1="363.2" y1="672.9583333333334" x2="1015.6" y2="672.9583333333334" stroke="#082608" stroke-width="1"/>
<line x1="363.2" y1="679.1875" x2="1015.6" y2="679.1875" stroke="#082608" stroke-width="1"/>
<line x1="363.2" y1="685.4166666666666" x2="1015.6" y2="685.4166666666666" stroke="#0a3a0a" stroke-width="1"/>
<line x1="363.2" y1="691.6458333333334" x2="1015.6" y2="691.6458333333334" stroke="#082608" stroke-width="1"/>
<line x1="363.2" y1="697.875" x2="1015.6" y2="697.875" stroke="#082608" stroke-width="1"/>
<line x1="363.2" y1="704.1041666666666" x2="1015.6" y2="704.1041666666666" stroke="#082608" stroke-width="1"/>
<line x1="363.2" y1="710.3333333333334" x2="1015.6" y2="710.3333333333334" stroke="#0a3a0a" stroke-width="1"/>
<line x1="363.2" y1="716.5625" x2="1015.6" y2="716.5625" stroke="#082608" stroke-width="1"/>
<line x1="363.2" y1="722.7916666666666" x2="1015.6" y2="722.7916666666666" stroke="#082608" stroke-width="1"/>
<line x1="363.2" y1="729.0208333333334" x2="1015.6" y2="729.0208333333334" stroke="#082608" stroke-width="1"/>
<line x1="363.2" y1="735.25" x2="1015.6" y2="735.25" stroke="#0a3a0a" stroke-width="1"/>
<line x1="363.2" y1="741.4791666666666" x2="1015.6" y2="741.4791666666666" stroke="#082608" stroke-width="1"/>
<line x1="363.2" y1="747.7083333333334" x2="1015.6" y2="747.7083333333334" stroke="#082608" stroke-width="1"/>
<line x1="363.2" y1="753.9375" x2="1015.6" y2="753.9375" stroke="#082608" stroke-width="1"/>
<line x1="363.2" y1="760.1666666666666" x2="1015.6" y2="760.1666666666666" stroke="#0a3a0a" stroke-width="1"/>
<line x1="363.2" y1="766.3958333333334" x2="1015.6" y2="766.3958333333334" stroke="#082608" stroke-width="1"/>
<line x1="363.2" y1="772.625" x2="1015.6" y2="772.625" stroke="#082608" stroke-width="1"/>
<line x1="363.2" y1="778.8541666666666" x2="1015.6" y2="778.8541666666666" stroke="#082608" stroke-width="1"/>
<line x1="363.2" y1="785.0833333333334" x2="1015.6" y2="785.0833333333334" stroke="#0a3a0a" stroke-width="1"/>
<line x1="363.2" y1="791.3125" x2="1015.6" y2="791.3125" stroke="#082608" stroke-width="1"/>
<line x1="363.2" y1="797.5416666666666" x2="1015.6" y2="797.5416666666666" stroke="#082608" stroke-width="1"/>
<line x1="363.2" y1="803.7708333333334" x2="1015.6" y2="803.7708333333334" stroke="#082608" stroke-width="1"/>
<line x1="376.248" y1="660.5" x2="376.248" y2="810" stroke="#0b420b" stroke-width="1"/>
<line x1="389.296" y1="660.5" x2="389.296" y2="810" stroke="#0b420b" stroke-width="1"/>
<line x1="402.344" y1="660.5" x2="402.344" y2="810" stroke="#0b420b" stroke-width="1"/>
<line x1="415.392" y1="660.5" x2="415.392" y2="810" stroke="#0b420b" stroke-width="1"/>
<line x1="428.44" y1="660.5" x2="428.44" y2="810" stroke="#0b420b" stroke-width="1"/>
<line x1="441.488" y1="660.5" x2="441.488" y2="810" stroke="#0b420b" stroke-width="1"/>
<line x1="454.536" y1="660.5" x2="454.536" y2="810" stroke="#0b420b" stroke-width="1"/>
<line x1="467.584" y1="660.5" x2="467.584" y2="810" stroke="#0b420b" stroke-width="1"/>
<line x1="480.632" y1="660.5" x2="480.632" y2="810" stroke="#0b420b" stroke-width="1"/>
<line x1="493.68" y1="660.5" x2="493.68" y2="810" stroke="#0b420b" stroke-width="1"/>
<line x1="506.728" y1="660.5" x2="506.728" y2="810" stroke="#0b420b" stroke-width="1"/>
<line x1="519.7760000000001" y1="660.5" x2="519.7760000000001" y2="810" stroke="#0b420b" stroke-width="1"/>
<line x1="532.8240000000001" y1="660.5" x2="532.8240000000001" y2="810" stroke="#0b420b" stroke-width="1"/>
<line x1="545.8720000000001" y1="660.5" x2="545.8720000000001" y2="810" stroke="#0b420b" stroke-width="1"/>
<line x1="558.9200000000001" y1="660.5" x2="558.9200000000001" y2="810" stroke="#0b420b" stroke-width="1"/>
<line x1="571.9680000000001" y1="660.5" x2="571.9680000000001" y2="810" stroke="#0b420b" stroke-width="1"/>
<line x1="585.0160000000001" y1="660.5" x2="585.0160000000001" y2="810" stroke="#0b420b" stroke-width="1"/>
<line x1="598.064" y1="660.5" x2="598.064" y2="810" stroke="#0b420b" stroke-width="1"/>
<line x1="611.1120000000001" y1="660.5" x2="611.1120000000001" y2="810" stroke="#0b420b" stroke-width="1"/>
<line x1="624.1600000000001" y1="660.5" x2="624.1600000000001" y2="810" stroke="#0b420b" stroke-width="1"/>
<line x1="637.2080000000001" y1="660.5" x2="637.2080000000001" y2="810" stroke="#0b420b" stroke-width="1"/>
<line x1="650.2560000000001" y1="660.5" x2="650.2560000000001" y2="810" stroke="#0b420b" stroke-width="1"/>
<line x1="663.3040000000001" y1="660.5" x2="663.3040000000001" y2="810" stroke="#0b420b" stroke-width="1"/>
<line x1="676.3520000000001" y1="660.5" x2="676.3520000000001" y2="810" stroke="#0b420b" stroke-width="1"/>
<line x1="689.4000000000001" y1="660.5" x2="689.4000000000001" y2="810" stroke="#0b420b" stroke-width="1"/>
<line x1="702.4480000000001" y1="660.5" x2="702.4480000000001" y2="810" stroke="#0b420b" stroke-width="1"/>
<line x1="715.4960000000001" y1="660.5" x2="715.4960000000001" y2="810" stroke="#0b420b" stroke-width="1"/>
<line x1="728.5440000000001" y1="660.5" x2="728.5440000000001" y2="810" stroke="#0b420b" stroke-width="1"/>
<line x1="741.5920000000001" y1="660.5" x2="741.5920000000001" y2="810" stroke="#0b420b" stroke-width="1"/>
<line x1="754.6400000000001" y1="660.5" x2="754.6400000000001" y2="810" stroke="#0b420b" stroke-width="1"/>
<line x1="767.6880000000001" y1="660.5" x2="767.6880000000001" y2="810" stroke="#0b420b" stroke-width="1"/>
<line x1="780.7360000000001" y1="660.5" x2="780.7360000000001" y2="810" stroke="#0b420b" stroke-width="1"/>
<line x1="793.7840000000001" y1="660.5" x2="793.7840000000001" y2="810" stroke="#0b420b" stroke-width="1"/>
<line x1="806.8320000000001" y1="660.5" x2="806.8320000000001" y2="810" stroke="#0b420b" stroke-width="1"/>
<line x1="819.8800000000001" y1="660.5" x2="819.8800000000001" y2="810" stroke="#0b420b" stroke-width="1"/>
<line x1="832.928" y1="660.5" x2="832.928" y2="810" stroke="#0b420b" stroke-width="1"/>
<line x1="845.9760000000001" y1="660.5" x2="845.9760000000001" y2="810" stroke="#0b420b" stroke-width="1"/>
<line x1="859.0240000000001" y1="660.5" x2="859.0240000000001" y2="810" stroke="#0b420b" stroke-width="1"/>
<line x1="872.0720000000001" y1="660.5" x2="872.0720000000001" y2="810" stroke="#0b420b" stroke-width="1"/>
<line x1="885.1200000000001" y1="660.5" x2="885.1200000000001" y2="810" stroke="#0b420b" stroke-width="1"/>
<line x1="898.1680000000001" y1="660.5" x2="898.1680000000001" y2="810" stroke="#0b420b" stroke-width="1"/>
<line x1="911.2160000000001" y1="660.5" x2="911.2160000000001" y2="810" stroke="#0b420b" stroke-width="1"/>
<line x1="924.2640000000001" y1="660.5" x2="924.2640000000001" y2="810" stroke="#0b420b" stroke-width="1"/>
<line x1="937.3120000000001" y1="660.5" x2="937.3120000000001" y2="810" stroke="#0b420b" stroke-width="1"/>
<line x1="950.3600000000001" y1="660.5" x2="950.3600000000001" y2="810" stroke="#0b420b" stroke-width="1"/>
<line x1="963.4080000000001" y1="660.5" x2="963.4080000000001" y2="810" stroke="#0b420b" stroke-width="1"/>
<line x1="976.4560000000001" y1="660.5" x2="976.4560000000001" y2="810" stroke="#0b420b" stroke-width="1"/>
<line x1="989.5040000000001" y1="660.5" x2="989.5040000000001" y2="810" stroke="#0b420b" stroke-width="1"/>
<line x1="1002.5520000000001" y1="660.5" x2="1002.5520000000001" y2="810" stroke="#0b420b" stroke-width="1"/>
<text x="351.7" y="666.5" font-size="13.2" fill="#222" font-weight="normal" text-anchor="end" textLength="31" lengthAdjust="spacingAndGlyphs">6000</text>
<line x1="355" y1="660.5" x2="362.2" y2="660.5" stroke="#333" stroke-width="1.4"/>
<text x="351.7" y="691.2166666666666" font-size="13.2" fill="#222" font-weight="normal" text-anchor="end" textLength="31" lengthAdjust="spacingAndGlyphs">5000</text>
<line x1="355" y1="685.4166666666666" x2="362.2" y2="685.4166666666666" stroke="#333" stroke-width="1.4"/>
<text x="351.7" y="715.9333333333333" font-size="13.2" fill="#222" font-weight="normal" text-anchor="end" textLength="31" lengthAdjust="spacingAndGlyphs">4000</text>
<line x1="355" y1="710.3333333333334" x2="362.2" y2="710.3333333333334" stroke="#333" stroke-width="1.4"/>
<text x="351.7" y="740.65" font-size="13.2" fill="#222" font-weight="normal" text-anchor="end" textLength="31" lengthAdjust="spacingAndGlyphs">3000</text>
<line x1="355" y1="735.25" x2="362.2" y2="735.25" stroke="#333" stroke-width="1.4"/>
<text x="351.7" y="765.3666666666666" font-size="13.2" fill="#222" font-weight="normal" text-anchor="end" textLength="31" lengthAdjust="spacingAndGlyphs">2000</text>
<line x1="355" y1="760.1666666666666" x2="362.2" y2="760.1666666666666" stroke="#333" stroke-width="1.4"/>
<text x="351.7" y="790.0833333333334" font-size="13.2" fill="#222" font-weight="normal" text-anchor="end" textLength="31" lengthAdjust="spacingAndGlyphs">1000</text>
<line x1="355" y1="785.0833333333334" x2="362.2" y2="785.0833333333334" stroke="#333" stroke-width="1.4"/>
<text x="351.7" y="814.8" font-size="13.2" fill="#222" font-weight="normal" text-anchor="end" textLength="8" lengthAdjust="spacingAndGlyphs">0</text>
<line x1="355" y1="810.0" x2="362.2" y2="810.0" stroke="#333" stroke-width="1.4"/>
<line x1="357.5" y1="666.7291666666666" x2="362.2" y2="666.7291666666666" stroke="#333" stroke-width="1.3"/>
<line x1="357.5" y1="672.9583333333334" x2="362.2" y2="672.9583333333334" stroke="#333" stroke-width="1.3"/>
<line x1="357.5" y1="679.1875" x2="362.2" y2="679.1875" stroke="#333" stroke-width="1.3"/>
<line x1="357.5" y1="691.6458333333334" x2="362.2" y2="691.6458333333334" stroke="#333" stroke-width="1.3"/>
<line x1="357.5" y1="697.875" x2="362.2" y2="697.875" stroke="#333" stroke-width="1.3"/>
<line x1="357.5" y1="704.1041666666666" x2="362.2" y2="704.1041666666666" stroke="#333" stroke-width="1.3"/>
<line x1="357.5" y1="716.5625" x2="362.2" y2="716.5625" stroke="#333" stroke-width="1.3"/>
<line x1="357.5" y1="722.7916666666666" x2="362.2" y2="722.7916666666666" stroke="#333" stroke-width="1.3"/>
<line x1="357.5" y1="729.0208333333334" x2="362.2" y2="729.0208333333334" stroke="#333" stroke-width="1.3"/>
<line x1="357.5" y1="741.4791666666666" x2="362.2" y2="741.4791666666666" stroke="#333" stroke-width="1.3"/>
<line x1="357.5" y1="747.7083333333334" x2="362.2" y2="747.7083333333334" stroke="#333" stroke-width="1.3"/>
<line x1="357.5" y1="753.9375" x2="362.2" y2="753.9375" stroke="#333" stroke-width="1.3"/>
<line x1="357.5" y1="766.3958333333334" x2="362.2" y2="766.3958333333334" stroke="#333" stroke-width="1.3"/>
<line x1="357.5" y1="772.625" x2="362.2" y2="772.625" stroke="#333" stroke-width="1.3"/>
<line x1="357.5" y1="778.8541666666666" x2="362.2" y2="778.8541666666666" stroke="#333" stroke-width="1.3"/>
<line x1="357.5" y1="791.3125" x2="362.2" y2="791.3125" stroke="#333" stroke-width="1.3"/>
<line x1="357.5" y1="797.5416666666666" x2="362.2" y2="797.5416666666666" stroke="#333" stroke-width="1.3"/>
<line x1="357.5" y1="803.7708333333334" x2="362.2" y2="803.7708333333334" stroke="#333" stroke-width="1.3"/>
<line x1="363.2" y1="813" x2="363.2" y2="819" stroke="#333" stroke-width="1.4"/>
<text x="363.2" y="833.2" font-size="13.2" fill="#222" font-weight="normal" text-anchor="middle" textLength="27" lengthAdjust="spacingAndGlyphs">0,00</text>
<line x1="376.248" y1="813" x2="376.248" y2="817" stroke="#333" stroke-width="1.2"/>
<line x1="389.296" y1="813" x2="389.296" y2="817" stroke="#333" stroke-width="1.2"/>
<line x1="402.344" y1="813" x2="402.344" y2="817" stroke="#333" stroke-width="1.2"/>
<line x1="415.392" y1="813" x2="415.392" y2="817" stroke="#333" stroke-width="1.2"/>
<line x1="428.44" y1="813" x2="428.44" y2="819" stroke="#333" stroke-width="1.4"/>
<text x="428.44" y="833.2" font-size="13.2" fill="#222" font-weight="normal" text-anchor="middle" textLength="27" lengthAdjust="spacingAndGlyphs">0,10</text>
<line x1="441.488" y1="813" x2="441.488" y2="817" stroke="#333" stroke-width="1.2"/>
<line x1="454.536" y1="813" x2="454.536" y2="817" stroke="#333" stroke-width="1.2"/>
<line x1="467.584" y1="813" x2="467.584" y2="817" stroke="#333" stroke-width="1.2"/>
<line x1="480.632" y1="813" x2="480.632" y2="817" stroke="#333" stroke-width="1.2"/>
<line x1="493.68" y1="813" x2="493.68" y2="819" stroke="#333" stroke-width="1.4"/>
<text x="493.68" y="833.2" font-size="13.2" fill="#222" font-weight="normal" text-anchor="middle" textLength="27" lengthAdjust="spacingAndGlyphs">0,20</text>
<line x1="506.728" y1="813" x2="506.728" y2="817" stroke="#333" stroke-width="1.2"/>
<line x1="519.7760000000001" y1="813" x2="519.7760000000001" y2="817" stroke="#333" stroke-width="1.2"/>
<line x1="532.8240000000001" y1="813" x2="532.8240000000001" y2="817" stroke="#333" stroke-width="1.2"/>
<line x1="545.8720000000001" y1="813" x2="545.8720000000001" y2="817" stroke="#333" stroke-width="1.2"/>
<line x1="558.9200000000001" y1="813" x2="558.9200000000001" y2="819" stroke="#333" stroke-width="1.4"/>
<text x="558.9200000000001" y="833.2" font-size="13.2" fill="#222" font-weight="normal" text-anchor="middle" textLength="27" lengthAdjust="spacingAndGlyphs">0,30</text>
<line x1="571.9680000000001" y1="813" x2="571.9680000000001" y2="817" stroke="#333" stroke-width="1.2"/>
<line x1="585.0160000000001" y1="813" x2="585.0160000000001" y2="817" stroke="#333" stroke-width="1.2"/>
<line x1="598.064" y1="813" x2="598.064" y2="817" stroke="#333" stroke-width="1.2"/>
<line x1="611.1120000000001" y1="813" x2="611.1120000000001" y2="817" stroke="#333" stroke-width="1.2"/>
<line x1="624.1600000000001" y1="813" x2="624.1600000000001" y2="819" stroke="#333" stroke-width="1.4"/>
<text x="624.1600000000001" y="833.2" font-size="13.2" fill="#222" font-weight="normal" text-anchor="middle" textLength="27" lengthAdjust="spacingAndGlyphs">0,40</text>
<line x1="637.2080000000001" y1="813" x2="637.2080000000001" y2="817" stroke="#333" stroke-width="1.2"/>
<line x1="650.2560000000001" y1="813" x2="650.2560000000001" y2="817" stroke="#333" stroke-width="1.2"/>
<line x1="663.3040000000001" y1="813" x2="663.3040000000001" y2="817" stroke="#333" stroke-width="1.2"/>
<line x1="676.3520000000001" y1="813" x2="676.3520000000001" y2="817" stroke="#333" stroke-width="1.2"/>
<line x1="689.4000000000001" y1="813" x2="689.4000000000001" y2="819" stroke="#333" stroke-width="1.4"/>
<text x="689.4000000000001" y="833.2" font-size="13.2" fill="#222" font-weight="normal" text-anchor="middle" textLength="27" lengthAdjust="spacingAndGlyphs">0,50</text>
<line x1="702.4480000000001" y1="813" x2="702.4480000000001" y2="817" stroke="#333" stroke-width="1.2"/>
<line x1="715.4960000000001" y1="813" x2="715.4960000000001" y2="817" stroke="#333" stroke-width="1.2"/>
<line x1="728.5440000000001" y1="813" x2="728.5440000000001" y2="817" stroke="#333" stroke-width="1.2"/>
<line x1="741.5920000000001" y1="813" x2="741.5920000000001" y2="817" stroke="#333" stroke-width="1.2"/>
<line x1="754.6400000000001" y1="813" x2="754.6400000000001" y2="819" stroke="#333" stroke-width="1.4"/>
<text x="754.6400000000001" y="833.2" font-size="13.2" fill="#222" font-weight="normal" text-anchor="middle" textLength="27" lengthAdjust="spacingAndGlyphs">0,60</text>
<line x1="767.6880000000001" y1="813" x2="767.6880000000001" y2="817" stroke="#333" stroke-width="1.2"/>
<line x1="780.7360000000001" y1="813" x2="780.7360000000001" y2="817" stroke="#333" stroke-width="1.2"/>
<line x1="793.7840000000001" y1="813" x2="793.7840000000001" y2="817" stroke="#333" stroke-width="1.2"/>
<line x1="806.8320000000001" y1="813" x2="806.8320000000001" y2="817" stroke="#333" stroke-width="1.2"/>
<line x1="819.8800000000001" y1="813" x2="819.8800000000001" y2="819" stroke="#333" stroke-width="1.4"/>
<text x="819.8800000000001" y="833.2" font-size="13.2" fill="#222" font-weight="normal" text-anchor="middle" textLength="27" lengthAdjust="spacingAndGlyphs">0,70</text>
<line x1="832.928" y1="813" x2="832.928" y2="817" stroke="#333" stroke-width="1.2"/>
<line x1="845.9760000000001" y1="813" x2="845.9760000000001" y2="817" stroke="#333" stroke-width="1.2"/>
<line x1="859.0240000000001" y1="813" x2="859.0240000000001" y2="817" stroke="#333" stroke-width="1.2"/>
<line x1="872.0720000000001" y1="813" x2="872.0720000000001" y2="817" stroke="#333" stroke-width="1.2"/>
<line x1="885.1200000000001" y1="813" x2="885.1200000000001" y2="819" stroke="#333" stroke-width="1.4"/>
<text x="885.1200000000001" y="833.2" font-size="13.2" fill="#222" font-weight="normal" text-anchor="middle" textLength="27" lengthAdjust="spacingAndGlyphs">0,80</text>
<line x1="898.1680000000001" y1="813" x2="898.1680000000001" y2="817" stroke="#333" stroke-width="1.2"/>
<line x1="911.2160000000001" y1="813" x2="911.2160000000001" y2="817" stroke="#333" stroke-width="1.2"/>
<line x1="924.2640000000001" y1="813" x2="924.2640000000001" y2="817" stroke="#333" stroke-width="1.2"/>
<line x1="937.3120000000001" y1="813" x2="937.3120000000001" y2="817" stroke="#333" stroke-width="1.2"/>
<line x1="950.3600000000001" y1="813" x2="950.3600000000001" y2="819" stroke="#333" stroke-width="1.4"/>
<text x="950.3600000000001" y="833.2" font-size="13.2" fill="#222" font-weight="normal" text-anchor="middle" textLength="27" lengthAdjust="spacingAndGlyphs">0,90</text>
<line x1="963.4080000000001" y1="813" x2="963.4080000000001" y2="817" stroke="#333" stroke-width="1.2"/>
<line x1="976.4560000000001" y1="813" x2="976.4560000000001" y2="817" stroke="#333" stroke-width="1.2"/>
<line x1="989.5040000000001" y1="813" x2="989.5040000000001" y2="817" stroke="#333" stroke-width="1.2"/>
<line x1="1002.5520000000001" y1="813" x2="1002.5520000000001" y2="817" stroke="#333" stroke-width="1.2"/>
<line x1="1015.6000000000001" y1="813" x2="1015.6000000000001" y2="819" stroke="#333" stroke-width="1.4"/>
<text x="1015.6000000000001" y="833.2" font-size="13.2" fill="#222" font-weight="normal" text-anchor="middle" textLength="27" lengthAdjust="spacingAndGlyphs">1,00</text>
<path d="M363.20 809.38 L371.03 809.38" fill="none" stroke="#e01818" stroke-width="2.2" stroke-linejoin="round"/>
<path d="M493.68 810.00 L493.68 810.00 L494.98 805.77 L496.29 801.81 L497.59 798.11 L498.90 794.66 L500.20 791.43 L501.51 788.41 L502.81 785.59 L504.12 782.95 L505.42 780.48 L506.73 778.18 L508.03 776.03 L509.34 774.01 L510.64 772.13 L511.95 770.37 L513.25 768.73 L514.56 767.19 L515.86 765.76 L517.17 764.42 L518.47 763.16 L519.78 761.99 L521.08 760.89 L522.39 759.87 L523.69 758.91 L525.00 758.02 L526.30 757.18 L527.60 756.40 L528.91 755.67 L530.21 754.99 L531.52 754.35 L532.82 753.75 L534.13 753.19 L535.43 752.67 L536.74 752.18 L538.04 751.73 L539.35 751.30 L540.65 750.91 L541.96 750.53 L543.26 750.19 L544.57 749.86 L545.87 749.56 L547.18 749.28 L548.48 749.01 L549.79 748.76 L551.09 748.53 L552.40 748.31 L553.70 748.11 L555.01 747.92 L556.31 747.75 L557.62 747.58 L558.92 747.43 L560.22 747.28 L561.53 747.15 L562.83 747.02 L564.14 746.90 L565.44 746.79 L566.75 746.71 L568.05 746.71 L569.36 746.71 L570.66 746.71 L571.97 746.71 L573.27 746.71 L574.58 746.71 L575.88 746.71 L577.19 746.71 L578.49 746.02 L579.80 745.97 L581.10 745.92 L582.41 745.87 L583.71 745.83 L585.02 745.79 L586.32 745.75 L587.63 745.72 L588.93 745.68 L590.24 745.65 L591.54 745.62 L592.84 745.60 L594.15 745.57 L595.45 745.55 L596.76 745.53 L598.06 745.51 L599.37 745.49 L600.67 745.47 L601.98 745.45 L603.28 745.44 L604.59 745.42 L605.89 745.41 L607.20 745.40 L608.50 745.39 L609.81 745.38 L611.11 745.36 L612.42 745.36 L613.72 745.35 L615.03 745.34 L616.33 745.33 L617.64 745.32 L618.94 745.32 L620.25 745.31 L621.55 745.30 L622.86 745.30 L624.16 745.29 L625.46 745.29 L626.77 745.28 L628.07 745.28 L629.38 745.27 L630.68 745.27 L631.99 745.27 L633.29 745.26 L634.60 745.26 L635.90 745.26 L637.21 745.26 L638.51 745.25 L639.82 745.25 L641.12 745.25 L642.43 745.25 L643.73 745.24 L645.04 745.24 L646.34 745.24 L647.65 745.24 L648.95 745.24 L650.26 745.24 L651.56 745.23 L652.87 745.23 L654.17 745.23 L655.48 745.23 L656.78 745.23 L658.08 745.23 L659.39 745.23 L660.69 745.23 L662.00 745.23 L663.30 745.23 L664.61 745.23 L665.91 745.23 L667.22 745.22 L668.52 745.22 L669.83 745.22 L671.13 745.22 L672.44 745.22 L673.74 745.22 L675.05 745.22 L676.35 745.22 L677.66 745.22 L678.96 745.22 L680.27 745.22 L681.57 745.22 L682.88 745.22 L684.18 745.22 L685.49 745.22 L686.79 745.22 L688.10 745.22 L689.40 745.22 L690.70 745.22 L692.01 745.22 L693.31 745.22 L694.62 745.22 L695.92 745.22 L697.23 745.22 L698.53 745.22 L699.84 745.22 L701.14 745.22 L702.45 745.22 L703.75 745.22 L705.06 745.22 L706.36 745.22 L707.67 745.22 L708.97 745.22 L710.28 745.22 L711.58 745.22 L712.89 745.22 L714.19 745.22 L715.50 745.22 L716.80 745.22 L718.11 745.22 L719.41 745.22 L720.72 745.22 L722.02 745.22 L723.32 745.22 L724.63 745.22 L725.93 745.22 L727.24 745.22 L728.54 745.22 L729.85 745.22 L731.15 745.22 L732.46 745.22 L733.76 745.22 L735.07 745.22 L736.37 745.22 L737.68 745.22 L738.98 745.22 L740.29 745.22 L741.59 745.22 L742.90 745.22 L744.20 745.22 L745.51 745.22 L746.81 745.22 L748.12 745.22 L749.42 745.22 L750.73 745.22 L752.03 745.22 L753.34 745.22 L754.64 745.22 L755.94 745.22 L757.25 745.22 L758.55 745.22 L759.86 745.22 L761.16 745.22 L762.47 745.22 L763.77 745.22 L765.08 745.22 L766.38 745.22 L767.69 745.22 L768.99 745.22 L770.30 745.22 L771.60 745.22 L772.91 745.22 L774.21 745.22 L775.52 745.22 L776.82 745.22 L778.13 745.22 L779.43 745.22 L780.74 745.22 L782.04 745.22 L783.35 745.22 L784.65 745.22 L785.96 745.22 L787.26 745.22 L788.56 745.22 L789.87 745.22 L791.17 745.22 L792.48 745.22 L793.78 745.22 L795.09 745.22 L796.39 745.22 L797.70 745.22 L799.00 745.22 L800.31 745.22 L801.61 745.22 L802.92 745.22 L804.22 745.22 L805.53 745.22 L806.83 745.22 L808.14 745.22 L809.44 745.22 L810.75 745.22 L812.05 745.22 L813.36 745.22 L814.66 745.22 L815.97 745.22 L817.27 745.22 L818.58 745.22 L819.88 745.22 L821.18 745.22 L822.49 745.22 L823.79 745.22 L825.10 745.22 L826.40 745.22 L827.71 745.22 L829.01 745.22 L830.32 745.22 L831.62 745.22 L832.93 745.22 L834.23 745.22 L835.54 745.22 L836.84 745.22 L838.15 745.22 L839.45 745.22 L840.76 745.22 L842.06 745.22 L843.37 745.22 L844.67 745.22 L845.98 745.22 L847.28 745.22 L848.59 745.22 L849.89 745.22 L851.20 745.22 L852.50 745.22 L853.80 745.22 L855.11 745.22 L856.41 745.22 L857.72 745.22 L859.02 745.22 L860.33 745.22 L861.63 745.22 L862.94 745.22 L864.24 745.22 L865.55 745.22 L866.85 745.22 L868.16 745.22 L869.46 745.22 L870.77 745.22 L872.07 745.22 L873.38 745.22 L874.68 745.22 L875.99 745.22 L877.29 745.22 L878.60 745.22 L879.90 745.22 L881.21 745.22 L882.51 745.22 L883.82 745.22 L885.12 745.22 L886.42 745.22 L887.73 745.22 L889.03 745.22 L890.34 745.22 L891.64 745.22 L892.95 745.22 L894.25 745.22 L895.56 745.22 L896.86 745.22 L898.17 745.22 L899.47 745.22 L900.78 745.22 L902.08 745.22 L903.39 745.22 L904.69 745.22 L906.00 745.22 L907.30 745.22 L908.61 745.22 L909.91 745.22 L911.22 745.22 L912.52 745.22 L913.83 745.22 L915.13 745.22 L916.44 745.22 L917.74 745.22 L919.04 745.22 L920.35 745.22 L921.65 745.22 L922.96 745.22 L924.26 745.22 L925.57 745.22 L926.87 745.22 L928.18 745.22 L929.48 745.22 L930.79 745.22 L932.09 745.22 L933.40 745.22 L934.70 745.22 L936.01 745.22 L937.31 745.22 L938.62 745.22 L939.92 745.22 L941.23 745.22 L942.53 745.22 L943.84 745.22 L945.14 745.22 L946.45 745.22 L947.75 745.22 L949.06 745.22 L950.36 745.22 L951.66 745.22 L952.97 745.22 L954.27 745.22 L955.58 745.22 L956.88 745.22 L958.19 745.22 L959.49 745.22 L960.80 745.22 L962.10 745.22 L963.41 745.22 L964.71 745.22 L966.02 745.22 L967.32 745.22 L968.63 745.22 L969.93 745.22 L971.24 745.22 L972.54 745.22 L973.85 745.22 L975.15 745.22 L976.46 745.22 L977.76 745.22 L979.07 745.22 L980.37 745.22 L981.68 745.22 L982.98 745.22 L984.28 745.22 L985.59 745.22 L986.89 745.22 L988.20 745.22 L989.50 745.22 L990.81 745.22 L992.11 745.22 L993.42 745.22 L994.72 745.22 L996.03 745.22 L997.33 745.22 L998.64 745.22 L999.94 745.22 L1001.25 745.22 L1002.55 745.22 L1003.86 745.22 L1005.16 745.22 L1006.47 745.22 L1007.77 745.22 L1009.08 745.22 L1010.38 745.22 L1011.69 745.22 L1012.99 745.22 L1014.30 745.22" fill="none" stroke="#e01818" stroke-width="1.8" stroke-linejoin="round"/>
<path d="M395.82 809.50 L493.03 809.50 L493.68 762.66 L495.64 761.41 L496.29 715.32 L497.59 720.30 L497.92 717.81 L498.25 725.10 L499.55 731.06 L500.86 736.59 L502.16 741.74 L503.47 746.53 L504.77 750.98 L506.08 755.12 L507.38 758.97 L508.69 762.55 L509.99 765.88 L511.29 768.98 L512.60 771.85 L513.90 774.53 L515.21 777.02 L516.51 779.33 L517.82 781.48 L519.12 783.48 L520.43 785.34 L521.73 787.07 L523.04 788.68 L524.34 790.18 L525.65 791.57 L526.95 792.86 L528.26 794.06 L529.56 795.18 L530.87 796.22 L532.17 797.19 L533.48 798.08 L534.78 798.92 L536.09 799.70 L537.39 800.42 L538.70 801.09 L540.00 801.72 L541.31 802.30 L542.61 802.84 L543.91 803.34 L545.22 803.81 L546.52 804.24 L547.83 804.65 L549.13 805.02 L550.44 805.37 L551.74 805.70 L553.05 806.00 L554.35 806.28 L555.66 806.54 L556.96 806.78 L558.27 807.01 L559.57 807.22 L560.88 807.41 L562.18 807.59 L563.49 807.76 L564.79 807.92 L566.10 808.07 L567.40 808.20 L568.71 808.33 L570.01 808.45 L571.32 808.55 L572.62 808.66 L573.93 808.75 L575.23 808.84 L576.53 808.92 L577.84 808.99 L579.14 809.07 L580.45 809.13 L581.75 809.19 L583.06 809.25 L584.36 809.30 L585.67 809.35 L586.97 809.40 L588.28 809.44 L589.58 809.48 L590.89 809.50 L592.19 809.50 L593.50 809.50 L594.80 809.50 L596.11 809.50 L597.41 809.50 L598.72 809.50 L600.02 809.50 L601.33 809.50 L602.63 809.50 L603.94 809.50 L605.24 809.50 L606.55 809.50 L607.85 809.50 L609.15 809.50 L610.46 809.50 L611.76 809.50 L613.07 809.50 L614.37 809.50 L615.68 809.50 L616.98 809.50 L618.29 809.50 L619.59 809.50 L620.90 809.50 L622.20 809.50 L623.51 809.50 L624.81 809.50 L626.12 809.50 L627.42 809.50 L628.73 809.50 L630.03 809.50 L631.34 809.50 L632.64 809.50 L633.95 809.50 L635.25 809.50 L636.56 809.50 L637.86 809.50 L639.17 809.50 L640.47 809.50 L641.77 809.50 L643.08 809.50 L644.38 809.50 L645.69 809.50 L646.99 809.50 L648.30 809.50 L649.60 809.50 L650.91 809.50 L652.21 809.50 L653.52 809.50 L654.82 809.50 L656.13 809.50 L657.43 809.50 L658.74 809.50 L660.04 809.50 L661.35 809.50 L662.65 809.50 L663.96 809.50 L665.26 809.50 L666.57 809.50 L667.87 809.50 L669.18 809.50 L670.48 809.50 L671.79 809.50 L673.09 809.50 L674.39 809.50 L675.70 809.50 L677.00 809.50 L678.31 809.50 L679.61 809.50 L680.92 809.50 L682.22 809.50 L683.53 809.50 L684.83 809.50 L686.14 809.50 L687.44 809.50 L688.75 809.50 L690.05 809.50 L691.36 809.50 L692.66 809.50 L693.97 809.50 L695.27 809.50 L696.58 809.50 L697.88 809.50 L699.19 809.50 L700.49 809.50 L701.80 809.50 L703.10 809.50 L704.41 809.50 L705.71 809.50 L707.01 809.50 L708.32 809.50 L709.62 809.50 L710.93 809.50 L712.23 809.50 L713.54 809.50 L714.84 809.50 L716.15 809.50 L717.45 809.50 L718.76 809.50 L720.06 809.50 L721.37 809.50 L722.67 809.50 L723.98 809.50 L725.28 809.50 L726.59 809.50 L727.89 809.50 L729.20 809.50 L730.50 809.50 L731.81 809.50 L733.11 809.50 L734.42 809.50 L735.72 809.50 L737.03 809.50 L738.33 809.50 L739.63 809.50 L740.94 809.50 L742.24 809.50 L743.55 809.50 L744.85 809.50 L746.16 809.50 L747.46 809.50 L748.77 809.50 L750.07 809.50 L751.38 809.50 L752.68 809.50 L753.99 809.50 L755.29 809.50 L756.60 809.50 L757.90 809.50 L759.21 809.50 L760.51 809.50 L761.82 809.50 L763.12 809.50 L764.43 809.50 L765.73 809.50 L767.04 809.50 L768.34 809.50 L769.65 809.50 L770.95 809.50 L772.25 809.50 L773.56 809.50 L774.86 809.50 L776.17 809.50 L777.47 809.50 L778.78 809.50 L780.08 809.50 L781.39 809.50 L782.69 809.50 L784.00 809.50 L785.30 809.50 L786.61 809.50 L787.91 809.50 L789.22 809.50 L790.52 809.50 L791.83 809.50 L793.13 809.50 L794.44 809.50 L795.74 809.50 L797.05 809.50 L798.35 809.50 L799.66 809.50 L800.96 809.50 L802.27 809.50 L803.57 809.50 L804.87 809.50 L806.18 809.50 L807.48 809.50 L808.79 809.50 L810.09 809.50 L811.40 809.50 L812.70 809.50 L814.01 809.50 L815.31 809.50 L816.62 809.50 L817.92 809.50 L819.23 809.50 L820.53 809.50 L821.84 809.50 L823.14 809.50 L824.45 809.50 L825.75 809.50 L827.06 809.50 L828.36 809.50 L829.67 809.50 L830.97 809.50 L832.28 809.50 L833.58 809.50 L834.89 809.50 L836.19 809.50 L837.49 809.50 L838.80 809.50 L840.10 809.50 L841.41 809.50 L842.71 809.50 L844.02 809.50 L845.32 809.50 L846.63 809.50 L847.93 809.50 L849.24 809.50 L850.54 809.50 L851.85 809.50 L853.15 809.50 L854.46 809.50 L855.76 809.50 L857.07 809.50 L858.37 809.50 L859.68 809.50 L860.98 809.50 L862.29 809.50 L863.59 809.50 L864.90 809.50 L866.20 809.50 L867.51 809.50 L868.81 809.50 L870.11 809.50 L871.42 809.50 L872.72 809.50 L874.03 809.50 L875.33 809.50 L876.64 809.50 L877.94 809.50 L879.25 809.50 L880.55 809.50 L881.86 809.50 L883.16 809.50 L884.47 809.50 L885.77 809.50 L887.08 809.50 L888.38 809.50 L889.69 809.50 L890.99 809.50 L892.30 809.50 L893.60 809.50 L894.91 809.50 L896.21 809.50 L897.52 809.50 L898.82 809.50 L900.13 809.50 L901.43 809.50 L902.73 809.50 L904.04 809.50 L905.34 809.50 L906.65 809.50 L907.95 809.50 L909.26 809.50 L910.56 809.50 L911.87 809.50 L913.17 809.50 L914.48 809.50 L915.78 809.50 L917.09 809.50 L918.39 809.50 L919.70 809.50 L921.00 809.50 L922.31 809.50 L923.61 809.50 L924.92 809.50 L926.22 809.50 L927.53 809.50 L928.83 809.50 L930.14 809.50 L931.44 809.50 L932.75 809.50 L934.05 809.50 L935.35 809.50 L936.66 809.50 L937.96 809.50 L939.27 809.50 L940.57 809.50 L941.88 809.50 L943.18 809.50 L944.49 809.50 L945.79 809.50 L947.10 809.50 L948.40 809.50 L949.71 809.50 L951.01 809.50 L952.32 809.50 L953.62 809.50 L954.93 809.50 L956.23 809.50 L957.54 809.50 L958.84 809.50 L960.15 809.50 L961.45 809.50 L962.76 809.50 L964.06 809.50 L965.37 809.50 L966.67 809.50 L967.97 809.50 L969.28 809.50 L970.58 809.50 L971.89 809.50 L973.19 809.50 L974.50 809.50 L975.80 809.50 L977.11 809.50 L978.41 809.50 L979.72 809.50 L981.02 809.50 L982.33 809.50 L983.63 809.50 L984.94 809.50 L986.24 809.50 L987.55 809.50 L988.85 809.50 L990.16 809.50 L991.46 809.50 L992.77 809.50 L994.07 809.50 L995.38 809.50 L996.68 809.50 L997.99 809.50 L999.29 809.50 L1000.59 809.50 L1001.90 809.50 L1003.20 809.50 L1004.51 809.50 L1005.81 809.50 L1007.12 809.50 L1008.42 809.50 L1009.73 809.50 L1011.03 809.50 L1012.34 809.50 L1013.64 809.50 L1014.95 809.50" fill="none" stroke="#20e8f0" stroke-width="2.0" stroke-linejoin="round"/>
<line x1="363.2" y1="661.0" x2="1015.6" y2="661.0" stroke="#222" stroke-width="1"/>
<rect x="565.6" y="634.7" width="205.9" height="22.9" fill="#e6e6e6" stroke="#8aa0c8" stroke-width="1.2"/>
<line x1="566" y1="657.5" x2="771.5" y2="657.5" stroke="#3a5a90" stroke-width="1.5"/>
<text x="581.4" y="651.4" font-size="16.4" fill="#2c5ec0" font-weight="normal" text-anchor="start" textLength="169.8" lengthAdjust="spacingAndGlyphs" stroke="#2c5ec0" stroke-width="0.55">SIMULATION case Plot</text>
<rect x="932" y="625" width="106" height="28.5" fill="#e4e4e4"/>
<path d="M932 653.0 L1037.5 653.0 L1037.5 625" stroke="#c8c8c0" stroke-width="1.5" fill="none"/>
<rect x="946" y="630" width="23" height="20" fill="#e0e0e0"/>
<path d="M946.5 650 L946.5 630.5 L969 630.5" stroke="#f8f8f8" stroke-width="1" fill="none"/>
<path d="M946 649.5 L968.5 649.5 L968.5 630" stroke="#8a8a84" stroke-width="1" fill="none"/>
<line x1="949.5" y1="641.0" x2="965.5" y2="641.0" stroke="#111" stroke-width="1.6"/>
<line x1="957.5" y1="633.0" x2="957.5" y2="649.0" stroke="#111" stroke-width="1.6"/>
<circle cx="957.5" cy="641.0" r="2" fill="#fff" stroke="#111" stroke-width="1"/>
<circle cx="950" cy="634" r="1.6" fill="#5a8a3a"/>
<rect x="972.4" y="630" width="23" height="20" fill="#b8b8b4"/>
<path d="M972.9 650 L972.9 630.5 L995.4 630.5" stroke="#888" stroke-width="1" fill="none"/>
<path d="M972.4 649.5 L994.9 649.5 L994.9 630" stroke="#eee" stroke-width="1" fill="none"/>
<circle cx="985.9" cy="638.5" r="5.5" fill="#dcdcf4" stroke="#111" stroke-width="1.6"/>
<line x1="981.9" y1="642.5" x2="975.9" y2="648.0" stroke="#111" stroke-width="3"/>
<line x1="985.9" y1="636.0" x2="985.9" y2="641.0" stroke="#111" stroke-width="1.2"/>
<line x1="983.4" y1="638.5" x2="988.4" y2="638.5" stroke="#111" stroke-width="1.2"/>
<circle cx="976.4" cy="634" r="1.6" fill="#5ac83a"/>
<path d="M988.9 646.0 L992.9 646.0 L990.9 648.5 Z" stroke="none" stroke-width="0" fill="#111"/>
<rect x="999.6" y="630" width="23" height="20" fill="#e0e0e0"/>
<path d="M1000.1 650 L1000.1 630.5 L1022.6 630.5" stroke="#f8f8f8" stroke-width="1" fill="none"/>
<path d="M999.6 649.5 L1022.1 649.5 L1022.1 630" stroke="#8a8a84" stroke-width="1" fill="none"/>
<path d="M1006.1 644.0 L1003.1 640.0 Q1002.1 638.0 1005.1 639.0 L1007.1 641.0 L1007.1 634.0 Q1008.1 632.0 1009.1 634.0 L1009.6 639.0 L1010.1 632.0 Q1011.1 630.5 1012.1 632.0 L1012.6 639.0 L1013.6 633.0 Q1014.6 631.5 1015.6 633.5 L1015.1 640.0 L1016.6 635.0 Q1018.1 634.0 1018.1 636.0 L1017.1 644.0 Q1015.1 648.0 1011.1 648.0 Q1008.1 648.0 1006.1 644.0 Z" stroke="#111" stroke-width="1.3" fill="#fff"/>
<circle cx="1003.6" cy="634" r="1.6" fill="#5a8a3a"/>
<rect x="180.5" y="824.7" width="143.5" height="22.6" fill="url(#gBtn)"/>
<rect x="181.25" y="825.45" width="142" height="21.1" fill="none" stroke="#4a4a44" stroke-width="1.5"/>
<path d="M183 845 L322 845 L322 827" stroke="#b0b0a8" stroke-width="1.5" fill="none"/>
<text x="199.3" y="841.6" font-size="14.8" fill="#2a9a1a" font-weight="bold" text-anchor="start" textLength="104.5" lengthAdjust="spacingAndGlyphs" stroke="#2a9a1a" stroke-width="0.35">VIEW PlotScale</text>
<text x="66.8" y="854.6" font-size="15" fill="#111" font-weight="bold" text-anchor="start" textLength="69.6" lengthAdjust="spacingAndGlyphs" stroke="#111" stroke-width="0.35">Real PLOT</text>
<rect x="65.4" y="860.4" width="188.6" height="219.10000000000002" fill="#e0e0e0"/>
<path d="M66.4 1079.5 L66.4 861.9 L254 861.9" stroke="#c8c8c8" stroke-width="3" fill="none"/>
<path d="M65.4 1078.5 L253 1078.5 L253 860.4" stroke="#eeeeee" stroke-width="2" fill="none"/>
<rect x="97" y="865" width="131.8" height="17.399999999999977" fill="#e2e2e2"/>
<path d="M97.5 882.4 L97.5 865.5 L228.8 865.5" stroke="#f6f6f6" stroke-width="1" fill="none"/>
<path d="M98 881.4 L227.8 881.4 L227.8 865" stroke="#85857c" stroke-width="2" fill="none"/>
<text x="146.3" y="878.9000000000001" font-size="14.8" fill="#3062b8" font-weight="normal" text-anchor="start" textLength="79.5" lengthAdjust="spacingAndGlyphs">GATE TACHO</text>
<polygon points="248.67,871.31 248.67,872.69 247.15,873.65 246.73,874.69 247.11,876.44 246.14,877.41 244.39,877.03 243.35,877.45 242.39,878.97 241.01,878.97 240.05,877.45 239.01,877.03 237.26,877.41 236.29,876.44 236.67,874.69 236.25,873.65 234.73,872.69 234.73,871.31 236.25,870.35 236.67,869.31 236.29,867.56 237.26,866.59 239.01,866.97 240.05,866.55 241.01,865.03 242.39,865.03 243.35,866.55 244.39,866.97 246.14,866.59 247.11,867.56 246.73,869.31 247.15,870.35" fill="#ffffff" stroke="#30e030" stroke-width="1.5" stroke-linejoin="round"/>
<rect x="97" y="887.7" width="131.8" height="16.299999999999955" fill="#e2e2e2"/>
<path d="M97.5 904 L97.5 888.2 L228.8 888.2" stroke="#f6f6f6" stroke-width="1" fill="none"/>
<path d="M98 903 L227.8 903 L227.8 887.7" stroke="#85857c" stroke-width="2" fill="none"/>
<text x="128.5" y="901.0500000000001" font-size="14.8" fill="#3062b8" font-weight="normal" text-anchor="start" textLength="97.30000000000001" lengthAdjust="spacingAndGlyphs">GATE POSITION</text>
<polygon points="248.67,893.31 248.67,894.69 247.15,895.65 246.73,896.69 247.11,898.44 246.14,899.41 244.39,899.03 243.35,899.45 242.39,900.97 241.01,900.97 240.05,899.45 239.01,899.03 237.26,899.41 236.29,898.44 236.67,896.69 236.25,895.65 234.73,894.69 234.73,893.31 236.25,892.35 236.67,891.31 236.29,889.56 237.26,888.59 239.01,888.97 240.05,888.55 241.01,887.03 242.39,887.03 243.35,888.55 244.39,888.97 246.14,888.59 247.11,889.56 246.73,891.31 247.15,892.35" fill="#ffffff" stroke="#f0f020" stroke-width="1.5" stroke-linejoin="round"/>
<rect x="97" y="912.4" width="131.8" height="16.899999999999977" fill="#e2e2e2"/>
<path d="M97.5 929.3 L97.5 912.9 L228.8 912.9" stroke="#f6f6f6" stroke-width="1" fill="none"/>
<path d="M98 928.3 L227.8 928.3 L227.8 912.4" stroke="#85857c" stroke-width="2" fill="none"/>
<text x="139.4" y="926.05" font-size="14.8" fill="#3062b8" font-weight="normal" text-anchor="start" textLength="86.4" lengthAdjust="spacingAndGlyphs">GATE_MOTOR</text>
<polygon points="248.67,918.01 248.67,919.39 247.15,920.35 246.73,921.39 247.11,923.14 246.14,924.11 244.39,923.73 243.35,924.15 242.39,925.67 241.01,925.67 240.05,924.15 239.01,923.73 237.26,924.11 236.29,923.14 236.67,921.39 236.25,920.35 234.73,919.39 234.73,918.01 236.25,917.05 236.67,916.01 236.29,914.26 237.26,913.29 239.01,913.67 240.05,913.25 241.01,911.73 242.39,911.73 243.35,913.25 244.39,913.67 246.14,913.29 247.11,914.26 246.73,916.01 247.15,917.05" fill="#ffffff" stroke="#e030e0" stroke-width="1.5" stroke-linejoin="round"/>
<rect x="97" y="936.7" width="131.8" height="16.59999999999991" fill="#e2e2e2"/>
<path d="M97.5 953.3 L97.5 937.2 L228.8 937.2" stroke="#f6f6f6" stroke-width="1" fill="none"/>
<path d="M98 952.3 L227.8 952.3 L227.8 936.7" stroke="#85857c" stroke-width="2" fill="none"/>
<text x="125.5" y="950.2" font-size="14.8" fill="#111" font-weight="normal" text-anchor="start" textLength="100.30000000000001" lengthAdjust="spacingAndGlyphs">TURBINE TACHO</text>
<polygon points="248.67,941.81 248.67,943.19 247.15,944.15 246.73,945.19 247.11,946.94 246.14,947.91 244.39,947.53 243.35,947.95 242.39,949.47 241.01,949.47 240.05,947.95 239.01,947.53 237.26,947.91 236.29,946.94 236.67,945.19 236.25,944.15 234.73,943.19 234.73,941.81 236.25,940.85 236.67,939.81 236.29,938.06 237.26,937.09 239.01,937.47 240.05,937.05 241.01,935.53 242.39,935.53 243.35,937.05 244.39,937.47 246.14,937.09 247.11,938.06 246.73,939.81 247.15,940.85" fill="#ffffff" stroke="#ee2020" stroke-width="1.5" stroke-linejoin="round"/>
<polygon points="237.39999999999998,942.5 241.7,938.2 246.0,942.5 241.7,946.8" fill="#ee2020"/>
<rect x="97" y="960.5" width="131.8" height="16.5" fill="#e2e2e2"/>
<path d="M97.5 977 L97.5 961.0 L228.8 961.0" stroke="#f6f6f6" stroke-width="1" fill="none"/>
<path d="M98 976 L227.8 976 L227.8 960.5" stroke="#85857c" stroke-width="2" fill="none"/>
<text x="119.2" y="973.95" font-size="14.8" fill="#111" font-weight="normal" text-anchor="start" textLength="106.60000000000001" lengthAdjust="spacingAndGlyphs">TURBINE_MOTOR</text>
<polygon points="248.67,965.61 248.67,966.99 247.15,967.95 246.73,968.99 247.11,970.74 246.14,971.71 244.39,971.33 243.35,971.75 242.39,973.27 241.01,973.27 240.05,971.75 239.01,971.33 237.26,971.71 236.29,970.74 236.67,968.99 236.25,967.95 234.73,966.99 234.73,965.61 236.25,964.65 236.67,963.61 236.29,961.86 237.26,960.89 239.01,961.27 240.05,960.85 241.01,959.33 242.39,959.33 243.35,960.85 244.39,961.27 246.14,960.89 247.11,961.86 246.73,963.61 247.15,964.65" fill="#ffffff" stroke="#d08030" stroke-width="1.5" stroke-linejoin="round"/>
<rect x="70" y="984.8" width="158.8" height="16.200000000000045" fill="#e2e2e2"/>
<path d="M70.5 1001 L70.5 985.3 L228.8 985.3" stroke="#f6f6f6" stroke-width="1" fill="none"/>
<path d="M71 1000 L227.8 1000 L227.8 984.8" stroke="#85857c" stroke-width="2" fill="none"/>
<text x="86.9" y="998.1" font-size="14.8" fill="#e01818" font-weight="normal" text-anchor="start" textLength="138.9" lengthAdjust="spacingAndGlyphs">GENERATOR CURRENT</text>
<polygon points="248.67,989.61 248.67,990.99 247.15,991.95 246.73,992.99 247.11,994.74 246.14,995.71 244.39,995.33 243.35,995.75 242.39,997.27 241.01,997.27 240.05,995.75 239.01,995.33 237.26,995.71 236.29,994.74 236.67,992.99 236.25,991.95 234.73,990.99 234.73,989.61 236.25,988.65 236.67,987.61 236.29,985.86 237.26,984.89 239.01,985.27 240.05,984.85 241.01,983.33 242.39,983.33 243.35,984.85 244.39,985.27 246.14,984.89 247.11,985.86 246.73,987.61 247.15,988.65" fill="#ffffff" stroke="#30e8f0" stroke-width="1.5" stroke-linejoin="round"/>
<polygon points="237.39999999999998,990.3 241.7,986.0 246.0,990.3 241.7,994.5999999999999" fill="#30e8f0"/>
<rect x="70" y="1008.3" width="158.8" height="17.40000000000009" fill="#e2e2e2"/>
<path d="M70.5 1025.7 L70.5 1008.8 L228.8 1008.8" stroke="#f6f6f6" stroke-width="1" fill="none"/>
<path d="M71 1024.7 L227.8 1024.7 L227.8 1008.3" stroke="#85857c" stroke-width="2" fill="none"/>
<text x="89.7" y="1022.2" font-size="14.8" fill="#e01818" font-weight="normal" text-anchor="start" textLength="136.10000000000002" lengthAdjust="spacingAndGlyphs">GENERATOR VOLTAGE</text>
<polygon points="248.67,1014.11 248.67,1015.49 247.15,1016.45 246.73,1017.49 247.11,1019.24 246.14,1020.21 244.39,1019.83 243.35,1020.25 242.39,1021.77 241.01,1021.77 240.05,1020.25 239.01,1019.83 237.26,1020.21 236.29,1019.24 236.67,1017.49 236.25,1016.45 234.73,1015.49 234.73,1014.11 236.25,1013.15 236.67,1012.11 236.29,1010.36 237.26,1009.39 239.01,1009.77 240.05,1009.35 241.01,1007.83 242.39,1007.83 243.35,1009.35 244.39,1009.77 246.14,1009.39 247.11,1010.36 246.73,1012.11 247.15,1013.15" fill="#ffffff" stroke="#2020e0" stroke-width="1.5" stroke-linejoin="round"/>
<rect x="87.8" y="1033.7" width="141.0" height="17.299999999999955" fill="#e2e2e2"/>
<path d="M88.3 1051 L88.3 1034.2 L228.8 1034.2" stroke="#f6f6f6" stroke-width="1" fill="none"/>
<path d="M88.8 1050 L227.8 1050 L227.8 1033.7" stroke="#85857c" stroke-width="2" fill="none"/>
<text x="93.8" y="1047.55" font-size="14.8" fill="#2a8a2a" font-weight="normal" text-anchor="start" textLength="132.0" lengthAdjust="spacingAndGlyphs">Turbine Control Signal</text>
<polygon points="248.67,1039.51 248.67,1040.89 247.15,1041.85 246.73,1042.89 247.11,1044.64 246.14,1045.61 244.39,1045.23 243.35,1045.65 242.39,1047.17 241.01,1047.17 240.05,1045.65 239.01,1045.23 237.26,1045.61 236.29,1044.64 236.67,1042.89 236.25,1041.85 234.73,1040.89 234.73,1039.51 236.25,1038.55 236.67,1037.51 236.29,1035.76 237.26,1034.79 239.01,1035.17 240.05,1034.75 241.01,1033.23 242.39,1033.23 243.35,1034.75 244.39,1035.17 246.14,1034.79 247.11,1035.76 246.73,1037.51 247.15,1038.55" fill="#ffffff" stroke="#f0c020" stroke-width="1.5" stroke-linejoin="round"/>
<rect x="87.8" y="1058" width="141.0" height="17.299999999999955" fill="#e2e2e2"/>
<path d="M88.3 1075.3 L88.3 1058.5 L228.8 1058.5" stroke="#f6f6f6" stroke-width="1" fill="none"/>
<path d="M88.8 1074.3 L227.8 1074.3 L227.8 1058" stroke="#85857c" stroke-width="2" fill="none"/>
<text x="110" y="1071.8500000000001" font-size="14.8" fill="#2a8a2a" font-weight="normal" text-anchor="start" textLength="115.80000000000001" lengthAdjust="spacingAndGlyphs">Gate Control Signal</text>
<polygon points="248.67,1063.61 248.67,1064.99 247.15,1065.95 246.73,1066.99 247.11,1068.74 246.14,1069.71 244.39,1069.33 243.35,1069.75 242.39,1071.27 241.01,1071.27 240.05,1069.75 239.01,1069.33 237.26,1069.71 236.29,1068.74 236.67,1066.99 236.25,1065.95 234.73,1064.99 234.73,1063.61 236.25,1062.65 236.67,1061.61 236.29,1059.86 237.26,1058.89 239.01,1059.27 240.05,1058.85 241.01,1057.33 242.39,1057.33 243.35,1058.85 244.39,1059.27 246.14,1058.89 247.11,1059.86 246.73,1061.61 247.15,1062.65" fill="#ffffff" stroke="#e8f8a0" stroke-width="1.5" stroke-linejoin="round"/>
<rect x="361.1" y="866.5" width="654.3" height="159.0" fill="#000"/>
<line x1="361.1" y1="873.125" x2="1015.4" y2="873.125" stroke="#082608" stroke-width="1"/>
<line x1="361.1" y1="879.75" x2="1015.4" y2="879.75" stroke="#082608" stroke-width="1"/>
<line x1="361.1" y1="886.375" x2="1015.4" y2="886.375" stroke="#082608" stroke-width="1"/>
<line x1="361.1" y1="893.0" x2="1015.4" y2="893.0" stroke="#0a3a0a" stroke-width="1"/>
<line x1="361.1" y1="899.625" x2="1015.4" y2="899.625" stroke="#082608" stroke-width="1"/>
<line x1="361.1" y1="906.25" x2="1015.4" y2="906.25" stroke="#082608" stroke-width="1"/>
<line x1="361.1" y1="912.875" x2="1015.4" y2="912.875" stroke="#082608" stroke-width="1"/>
<line x1="361.1" y1="919.5" x2="1015.4" y2="919.5" stroke="#0a3a0a" stroke-width="1"/>
<line x1="361.1" y1="926.125" x2="1015.4" y2="926.125" stroke="#082608" stroke-width="1"/>
<line x1="361.1" y1="932.75" x2="1015.4" y2="932.75" stroke="#082608" stroke-width="1"/>
<line x1="361.1" y1="939.375" x2="1015.4" y2="939.375" stroke="#082608" stroke-width="1"/>
<line x1="361.1" y1="946.0" x2="1015.4" y2="946.0" stroke="#0a3a0a" stroke-width="1"/>
<line x1="361.1" y1="952.625" x2="1015.4" y2="952.625" stroke="#082608" stroke-width="1"/>
<line x1="361.1" y1="959.25" x2="1015.4" y2="959.25" stroke="#082608" stroke-width="1"/>
<line x1="361.1" y1="965.875" x2="1015.4" y2="965.875" stroke="#082608" stroke-width="1"/>
<line x1="361.1" y1="972.5" x2="1015.4" y2="972.5" stroke="#0a3a0a" stroke-width="1"/>
<line x1="361.1" y1="979.125" x2="1015.4" y2="979.125" stroke="#082608" stroke-width="1"/>
<line x1="361.1" y1="985.75" x2="1015.4" y2="985.75" stroke="#082608" stroke-width="1"/>
<line x1="361.1" y1="992.375" x2="1015.4" y2="992.375" stroke="#082608" stroke-width="1"/>
<line x1="361.1" y1="999.0" x2="1015.4" y2="999.0" stroke="#0a3a0a" stroke-width="1"/>
<line x1="361.1" y1="1005.625" x2="1015.4" y2="1005.625" stroke="#082608" stroke-width="1"/>
<line x1="361.1" y1="1012.25" x2="1015.4" y2="1012.25" stroke="#082608" stroke-width="1"/>
<line x1="361.1" y1="1018.875" x2="1015.4" y2="1018.875" stroke="#082608" stroke-width="1"/>
<line x1="374.18600000000004" y1="866.5" x2="374.18600000000004" y2="1025.5" stroke="#0b420b" stroke-width="1"/>
<line x1="387.27200000000005" y1="866.5" x2="387.27200000000005" y2="1025.5" stroke="#0b420b" stroke-width="1"/>
<line x1="400.358" y1="866.5" x2="400.358" y2="1025.5" stroke="#0b420b" stroke-width="1"/>
<line x1="413.444" y1="866.5" x2="413.444" y2="1025.5" stroke="#0b420b" stroke-width="1"/>
<line x1="426.53000000000003" y1="866.5" x2="426.53000000000003" y2="1025.5" stroke="#0b420b" stroke-width="1"/>
<line x1="439.616" y1="866.5" x2="439.616" y2="1025.5" stroke="#0b420b" stroke-width="1"/>
<line x1="452.702" y1="866.5" x2="452.702" y2="1025.5" stroke="#0b420b" stroke-width="1"/>
<line x1="465.788" y1="866.5" x2="465.788" y2="1025.5" stroke="#0b420b" stroke-width="1"/>
<line x1="478.874" y1="866.5" x2="478.874" y2="1025.5" stroke="#0b420b" stroke-width="1"/>
<line x1="491.96000000000004" y1="866.5" x2="491.96000000000004" y2="1025.5" stroke="#0b420b" stroke-width="1"/>
<line x1="505.04600000000005" y1="866.5" x2="505.04600000000005" y2="1025.5" stroke="#0b420b" stroke-width="1"/>
<line x1="518.1320000000001" y1="866.5" x2="518.1320000000001" y2="1025.5" stroke="#0b420b" stroke-width="1"/>
<line x1="531.2180000000001" y1="866.5" x2="531.2180000000001" y2="1025.5" stroke="#0b420b" stroke-width="1"/>
<line x1="544.304" y1="866.5" x2="544.304" y2="1025.5" stroke="#0b420b" stroke-width="1"/>
<line x1="557.39" y1="866.5" x2="557.39" y2="1025.5" stroke="#0b420b" stroke-width="1"/>
<line x1="570.476" y1="866.5" x2="570.476" y2="1025.5" stroke="#0b420b" stroke-width="1"/>
<line x1="583.562" y1="866.5" x2="583.562" y2="1025.5" stroke="#0b420b" stroke-width="1"/>
<line x1="596.648" y1="866.5" x2="596.648" y2="1025.5" stroke="#0b420b" stroke-width="1"/>
<line x1="609.734" y1="866.5" x2="609.734" y2="1025.5" stroke="#0b420b" stroke-width="1"/>
<line x1="622.82" y1="866.5" x2="622.82" y2="1025.5" stroke="#0b420b" stroke-width="1"/>
<line x1="635.906" y1="866.5" x2="635.906" y2="1025.5" stroke="#0b420b" stroke-width="1"/>
<line x1="648.992" y1="866.5" x2="648.992" y2="1025.5" stroke="#0b420b" stroke-width="1"/>
<line x1="662.078" y1="866.5" x2="662.078" y2="1025.5" stroke="#0b420b" stroke-width="1"/>
<line x1="675.164" y1="866.5" x2="675.164" y2="1025.5" stroke="#0b420b" stroke-width="1"/>
<line x1="688.25" y1="866.5" x2="688.25" y2="1025.5" stroke="#0b420b" stroke-width="1"/>
<line x1="701.336" y1="866.5" x2="701.336" y2="1025.5" stroke="#0b420b" stroke-width="1"/>
<line x1="714.422" y1="866.5" x2="714.422" y2="1025.5" stroke="#0b420b" stroke-width="1"/>
<line x1="727.508" y1="866.5" x2="727.508" y2="1025.5" stroke="#0b420b" stroke-width="1"/>
<line x1="740.5939999999999" y1="866.5" x2="740.5939999999999" y2="1025.5" stroke="#0b420b" stroke-width="1"/>
<line x1="753.6800000000001" y1="866.5" x2="753.6800000000001" y2="1025.5" stroke="#0b420b" stroke-width="1"/>
<line x1="766.7660000000001" y1="866.5" x2="766.7660000000001" y2="1025.5" stroke="#0b420b" stroke-width="1"/>
<line x1="779.852" y1="866.5" x2="779.852" y2="1025.5" stroke="#0b420b" stroke-width="1"/>
<line x1="792.938" y1="866.5" x2="792.938" y2="1025.5" stroke="#0b420b" stroke-width="1"/>
<line x1="806.0239999999999" y1="866.5" x2="806.0239999999999" y2="1025.5" stroke="#0b420b" stroke-width="1"/>
<line x1="819.11" y1="866.5" x2="819.11" y2="1025.5" stroke="#0b420b" stroke-width="1"/>
<line x1="832.196" y1="866.5" x2="832.196" y2="1025.5" stroke="#0b420b" stroke-width="1"/>
<line x1="845.2819999999999" y1="866.5" x2="845.2819999999999" y2="1025.5" stroke="#0b420b" stroke-width="1"/>
<line x1="858.3679999999999" y1="866.5" x2="858.3679999999999" y2="1025.5" stroke="#0b420b" stroke-width="1"/>
<line x1="871.454" y1="866.5" x2="871.454" y2="1025.5" stroke="#0b420b" stroke-width="1"/>
<line x1="884.5400000000001" y1="866.5" x2="884.5400000000001" y2="1025.5" stroke="#0b420b" stroke-width="1"/>
<line x1="897.626" y1="866.5" x2="897.626" y2="1025.5" stroke="#0b420b" stroke-width="1"/>
<line x1="910.712" y1="866.5" x2="910.712" y2="1025.5" stroke="#0b420b" stroke-width="1"/>
<line x1="923.798" y1="866.5" x2="923.798" y2="1025.5" stroke="#0b420b" stroke-width="1"/>
<line x1="936.884" y1="866.5" x2="936.884" y2="1025.5" stroke="#0b420b" stroke-width="1"/>
<line x1="949.9699999999999" y1="866.5" x2="949.9699999999999" y2="1025.5" stroke="#0b420b" stroke-width="1"/>
<line x1="963.056" y1="866.5" x2="963.056" y2="1025.5" stroke="#0b420b" stroke-width="1"/>
<line x1="976.1419999999999" y1="866.5" x2="976.1419999999999" y2="1025.5" stroke="#0b420b" stroke-width="1"/>
<line x1="989.228" y1="866.5" x2="989.228" y2="1025.5" stroke="#0b420b" stroke-width="1"/>
<line x1="1002.314" y1="866.5" x2="1002.314" y2="1025.5" stroke="#0b420b" stroke-width="1"/>
<text x="349.2" y="872.5" font-size="13.2" fill="#222" font-weight="normal" text-anchor="end" textLength="31" lengthAdjust="spacingAndGlyphs">6000</text>
<line x1="353" y1="866.5" x2="360.1" y2="866.5" stroke="#333" stroke-width="1.4"/>
<text x="349.2" y="898.8" font-size="13.2" fill="#222" font-weight="normal" text-anchor="end" textLength="31" lengthAdjust="spacingAndGlyphs">5000</text>
<line x1="353" y1="893.0" x2="360.1" y2="893.0" stroke="#333" stroke-width="1.4"/>
<text x="349.2" y="925.0999999999999" font-size="13.2" fill="#222" font-weight="normal" text-anchor="end" textLength="31" lengthAdjust="spacingAndGlyphs">4000</text>
<line x1="353" y1="919.5" x2="360.1" y2="919.5" stroke="#333" stroke-width="1.4"/>
<text x="349.2" y="951.4" font-size="13.2" fill="#222" font-weight="normal" text-anchor="end" textLength="31" lengthAdjust="spacingAndGlyphs">3000</text>
<line x1="353" y1="946.0" x2="360.1" y2="946.0" stroke="#333" stroke-width="1.4"/>
<text x="349.2" y="977.6999999999999" font-size="13.2" fill="#222" font-weight="normal" text-anchor="end" textLength="31" lengthAdjust="spacingAndGlyphs">2000</text>
<line x1="353" y1="972.5" x2="360.1" y2="972.5" stroke="#333" stroke-width="1.4"/>
<text x="349.2" y="1004.0" font-size="13.2" fill="#222" font-weight="normal" text-anchor="end" textLength="31" lengthAdjust="spacingAndGlyphs">1000</text>
<line x1="353" y1="999.0" x2="360.1" y2="999.0" stroke="#333" stroke-width="1.4"/>
<text x="349.2" y="1030.3" font-size="13.2" fill="#222" font-weight="normal" text-anchor="end" textLength="8" lengthAdjust="spacingAndGlyphs">0</text>
<line x1="353" y1="1025.5" x2="360.1" y2="1025.5" stroke="#333" stroke-width="1.4"/>
<line x1="355.5" y1="873.125" x2="360.1" y2="873.125" stroke="#333" stroke-width="1.3"/>
<line x1="355.5" y1="879.75" x2="360.1" y2="879.75" stroke="#333" stroke-width="1.3"/>
<line x1="355.5" y1="886.375" x2="360.1" y2="886.375" stroke="#333" stroke-width="1.3"/>
<line x1="355.5" y1="899.625" x2="360.1" y2="899.625" stroke="#333" stroke-width="1.3"/>
<line x1="355.5" y1="906.25" x2="360.1" y2="906.25" stroke="#333" stroke-width="1.3"/>
<line x1="355.5" y1="912.875" x2="360.1" y2="912.875" stroke="#333" stroke-width="1.3"/>
<line x1="355.5" y1="926.125" x2="360.1" y2="926.125" stroke="#333" stroke-width="1.3"/>
<line x1="355.5" y1="932.75" x2="360.1" y2="932.75" stroke="#333" stroke-width="1.3"/>
<line x1="355.5" y1="939.375" x2="360.1" y2="939.375" stroke="#333" stroke-width="1.3"/>
<line x1="355.5" y1="952.625" x2="360.1" y2="952.625" stroke="#333" stroke-width="1.3"/>
<line x1="355.5" y1="959.25" x2="360.1" y2="959.25" stroke="#333" stroke-width="1.3"/>
<line x1="355.5" y1="965.875" x2="360.1" y2="965.875" stroke="#333" stroke-width="1.3"/>
<line x1="355.5" y1="979.125" x2="360.1" y2="979.125" stroke="#333" stroke-width="1.3"/>
<line x1="355.5" y1="985.75" x2="360.1" y2="985.75" stroke="#333" stroke-width="1.3"/>
<line x1="355.5" y1="992.375" x2="360.1" y2="992.375" stroke="#333" stroke-width="1.3"/>
<line x1="355.5" y1="1005.625" x2="360.1" y2="1005.625" stroke="#333" stroke-width="1.3"/>
<line x1="355.5" y1="1012.25" x2="360.1" y2="1012.25" stroke="#333" stroke-width="1.3"/>
<line x1="355.5" y1="1018.875" x2="360.1" y2="1018.875" stroke="#333" stroke-width="1.3"/>
<line x1="361.1" y1="1028.5" x2="361.1" y2="1034.5" stroke="#333" stroke-width="1.4"/>
<text x="361.1" y="1048.7" font-size="13.2" fill="#222" font-weight="normal" text-anchor="middle" textLength="27" lengthAdjust="spacingAndGlyphs">0,00</text>
<line x1="374.18600000000004" y1="1028.5" x2="374.18600000000004" y2="1032.5" stroke="#333" stroke-width="1.2"/>
<line x1="387.27200000000005" y1="1028.5" x2="387.27200000000005" y2="1032.5" stroke="#333" stroke-width="1.2"/>
<line x1="400.358" y1="1028.5" x2="400.358" y2="1032.5" stroke="#333" stroke-width="1.2"/>
<line x1="413.444" y1="1028.5" x2="413.444" y2="1032.5" stroke="#333" stroke-width="1.2"/>
<line x1="426.53000000000003" y1="1028.5" x2="426.53000000000003" y2="1034.5" stroke="#333" stroke-width="1.4"/>
<text x="426.53000000000003" y="1048.7" font-size="13.2" fill="#222" font-weight="normal" text-anchor="middle" textLength="27" lengthAdjust="spacingAndGlyphs">0,10</text>
<line x1="439.616" y1="1028.5" x2="439.616" y2="1032.5" stroke="#333" stroke-width="1.2"/>
<line x1="452.702" y1="1028.5" x2="452.702" y2="1032.5" stroke="#333" stroke-width="1.2"/>
<line x1="465.788" y1="1028.5" x2="465.788" y2="1032.5" stroke="#333" stroke-width="1.2"/>
<line x1="478.874" y1="1028.5" x2="478.874" y2="1032.5" stroke="#333" stroke-width="1.2"/>
<line x1="491.96000000000004" y1="1028.5" x2="491.96000000000004" y2="1034.5" stroke="#333" stroke-width="1.4"/>
<text x="491.96000000000004" y="1048.7" font-size="13.2" fill="#222" font-weight="normal" text-anchor="middle" textLength="27" lengthAdjust="spacingAndGlyphs">0,20</text>
<line x1="505.04600000000005" y1="1028.5" x2="505.04600000000005" y2="1032.5" stroke="#333" stroke-width="1.2"/>
<line x1="518.1320000000001" y1="1028.5" x2="518.1320000000001" y2="1032.5" stroke="#333" stroke-width="1.2"/>
<line x1="531.2180000000001" y1="1028.5" x2="531.2180000000001" y2="1032.5" stroke="#333" stroke-width="1.2"/>
<line x1="544.304" y1="1028.5" x2="544.304" y2="1032.5" stroke="#333" stroke-width="1.2"/>
<line x1="557.39" y1="1028.5" x2="557.39" y2="1034.5" stroke="#333" stroke-width="1.4"/>
<text x="557.39" y="1048.7" font-size="13.2" fill="#222" font-weight="normal" text-anchor="middle" textLength="27" lengthAdjust="spacingAndGlyphs">0,30</text>
<line x1="570.476" y1="1028.5" x2="570.476" y2="1032.5" stroke="#333" stroke-width="1.2"/>
<line x1="583.562" y1="1028.5" x2="583.562" y2="1032.5" stroke="#333" stroke-width="1.2"/>
<line x1="596.648" y1="1028.5" x2="596.648" y2="1032.5" stroke="#333" stroke-width="1.2"/>
<line x1="609.734" y1="1028.5" x2="609.734" y2="1032.5" stroke="#333" stroke-width="1.2"/>
<line x1="622.82" y1="1028.5" x2="622.82" y2="1034.5" stroke="#333" stroke-width="1.4"/>
<text x="622.82" y="1048.7" font-size="13.2" fill="#222" font-weight="normal" text-anchor="middle" textLength="27" lengthAdjust="spacingAndGlyphs">0,40</text>
<line x1="635.906" y1="1028.5" x2="635.906" y2="1032.5" stroke="#333" stroke-width="1.2"/>
<line x1="648.992" y1="1028.5" x2="648.992" y2="1032.5" stroke="#333" stroke-width="1.2"/>
<line x1="662.078" y1="1028.5" x2="662.078" y2="1032.5" stroke="#333" stroke-width="1.2"/>
<line x1="675.164" y1="1028.5" x2="675.164" y2="1032.5" stroke="#333" stroke-width="1.2"/>
<line x1="688.25" y1="1028.5" x2="688.25" y2="1034.5" stroke="#333" stroke-width="1.4"/>
<text x="688.25" y="1048.7" font-size="13.2" fill="#222" font-weight="normal" text-anchor="middle" textLength="27" lengthAdjust="spacingAndGlyphs">0,50</text>
<line x1="701.336" y1="1028.5" x2="701.336" y2="1032.5" stroke="#333" stroke-width="1.2"/>
<line x1="714.422" y1="1028.5" x2="714.422" y2="1032.5" stroke="#333" stroke-width="1.2"/>
<line x1="727.508" y1="1028.5" x2="727.508" y2="1032.5" stroke="#333" stroke-width="1.2"/>
<line x1="740.5939999999999" y1="1028.5" x2="740.5939999999999" y2="1032.5" stroke="#333" stroke-width="1.2"/>
<line x1="753.6800000000001" y1="1028.5" x2="753.6800000000001" y2="1034.5" stroke="#333" stroke-width="1.4"/>
<text x="753.6800000000001" y="1048.7" font-size="13.2" fill="#222" font-weight="normal" text-anchor="middle" textLength="27" lengthAdjust="spacingAndGlyphs">0,60</text>
<line x1="766.7660000000001" y1="1028.5" x2="766.7660000000001" y2="1032.5" stroke="#333" stroke-width="1.2"/>
<line x1="779.852" y1="1028.5" x2="779.852" y2="1032.5" stroke="#333" stroke-width="1.2"/>
<line x1="792.938" y1="1028.5" x2="792.938" y2="1032.5" stroke="#333" stroke-width="1.2"/>
<line x1="806.0239999999999" y1="1028.5" x2="806.0239999999999" y2="1032.5" stroke="#333" stroke-width="1.2"/>
<line x1="819.11" y1="1028.5" x2="819.11" y2="1034.5" stroke="#333" stroke-width="1.4"/>
<text x="819.11" y="1048.7" font-size="13.2" fill="#222" font-weight="normal" text-anchor="middle" textLength="27" lengthAdjust="spacingAndGlyphs">0,70</text>
<line x1="832.196" y1="1028.5" x2="832.196" y2="1032.5" stroke="#333" stroke-width="1.2"/>
<line x1="845.2819999999999" y1="1028.5" x2="845.2819999999999" y2="1032.5" stroke="#333" stroke-width="1.2"/>
<line x1="858.3679999999999" y1="1028.5" x2="858.3679999999999" y2="1032.5" stroke="#333" stroke-width="1.2"/>
<line x1="871.454" y1="1028.5" x2="871.454" y2="1032.5" stroke="#333" stroke-width="1.2"/>
<line x1="884.5400000000001" y1="1028.5" x2="884.5400000000001" y2="1034.5" stroke="#333" stroke-width="1.4"/>
<text x="884.5400000000001" y="1048.7" font-size="13.2" fill="#222" font-weight="normal" text-anchor="middle" textLength="27" lengthAdjust="spacingAndGlyphs">0,80</text>
<line x1="897.626" y1="1028.5" x2="897.626" y2="1032.5" stroke="#333" stroke-width="1.2"/>
<line x1="910.712" y1="1028.5" x2="910.712" y2="1032.5" stroke="#333" stroke-width="1.2"/>
<line x1="923.798" y1="1028.5" x2="923.798" y2="1032.5" stroke="#333" stroke-width="1.2"/>
<line x1="936.884" y1="1028.5" x2="936.884" y2="1032.5" stroke="#333" stroke-width="1.2"/>
<line x1="949.9699999999999" y1="1028.5" x2="949.9699999999999" y2="1034.5" stroke="#333" stroke-width="1.4"/>
<text x="949.9699999999999" y="1048.7" font-size="13.2" fill="#222" font-weight="normal" text-anchor="middle" textLength="27" lengthAdjust="spacingAndGlyphs">0,90</text>
<line x1="963.056" y1="1028.5" x2="963.056" y2="1032.5" stroke="#333" stroke-width="1.2"/>
<line x1="976.1419999999999" y1="1028.5" x2="976.1419999999999" y2="1032.5" stroke="#333" stroke-width="1.2"/>
<line x1="989.228" y1="1028.5" x2="989.228" y2="1032.5" stroke="#333" stroke-width="1.2"/>
<line x1="1002.314" y1="1028.5" x2="1002.314" y2="1032.5" stroke="#333" stroke-width="1.2"/>
<line x1="1015.4" y1="1028.5" x2="1015.4" y2="1034.5" stroke="#333" stroke-width="1.4"/>
<text x="1015.4" y="1048.7" font-size="13.2" fill="#222" font-weight="normal" text-anchor="middle" textLength="27" lengthAdjust="spacingAndGlyphs">1,00</text>
<path d="M361.10 1025.29 L491.96 1025.29 L491.96 1025.29 L492.94 1021.32 L493.92 1017.69 L494.90 1013.69 L495.89 1010.21 L496.87 1007.79 L497.85 1004.81 L498.83 1000.71 L499.81 998.85 L500.79 996.33 L501.77 992.79 L502.76 991.30 L503.74 988.61 L504.72 987.13 L505.70 984.99 L506.68 983.92 L507.66 981.52 L508.64 979.58 L509.63 978.60 L510.61 976.86 L511.59 975.64 L512.57 975.29 L513.55 973.08 L514.53 972.21 L515.51 971.59 L516.50 971.01 L517.48 968.84 L518.46 968.55 L519.44 967.35 L520.42 966.34 L521.40 965.85 L522.38 964.85 L523.37 964.98 L524.35 963.77 L525.33 963.72 L526.31 962.44 L527.29 962.02 L528.27 962.69 L529.26 962.18 L530.24 961.63 L531.22 960.12 L532.20 960.52 L533.18 959.88 L534.16 960.02 L535.14 959.40 L536.13 959.28 L537.11 959.05 L538.09 958.43 L539.07 958.18 L540.05 957.47 L541.03 957.58 L542.01 957.00 L543.00 956.91 L543.98 956.53 L544.96 956.83 L545.94 957.41 L546.92 956.22 L547.90 955.92 L548.88 955.87 L549.87 956.24 L550.85 955.90 L551.83 956.53 L552.81 955.50 L553.79 955.78 L554.77 956.11 L555.75 956.35 L556.74 955.09 L557.72 954.81 L558.70 956.07 L559.68 954.94 L560.66 955.45 L561.64 955.77 L562.62 955.50 L563.61 954.74 L564.59 954.53 L565.57 955.71 L566.55 954.82 L567.53 955.62 L568.51 954.58 L569.49 955.11 L570.48 954.26 L571.46 954.08 L572.44 954.75 L573.42 953.98 L574.40 954.98 L575.38 955.30 L576.36 954.49 L577.35 955.31 L578.33 955.04 L579.31 954.71 L580.29 954.39 L581.27 955.04 L582.25 955.19 L583.23 953.95 L584.22 954.76 L585.20 953.78 L586.18 953.86 L587.16 954.62 L588.14 954.48 L589.12 954.38 L590.11 954.19 L591.09 954.25 L592.07 954.29 L593.05 954.19 L594.03 953.71 L595.01 954.34 L595.99 954.45 L596.98 954.01 L597.96 954.72 L598.94 954.62 L599.92 953.61 L600.90 954.28 L601.88 954.23 L602.86 955.03 L603.85 954.42 L604.83 954.17 L605.81 955.00 L606.79 954.11 L607.77 954.08 L608.75 954.93 L609.73 954.08 L610.72 954.32 L611.70 954.00 L612.68 954.48 L613.66 953.95 L614.64 953.90 L615.62 954.96 L616.60 954.90 L617.59 953.99 L618.57 953.56 L619.55 954.62 L620.53 954.31 L621.51 954.11 L622.49 954.51 L623.47 954.44 L624.46 954.52 L625.44 954.43 L626.42 954.09 L627.40 954.53 L628.38 954.42 L629.36 953.83 L630.34 954.93 L631.33 954.13 L632.31 953.88 L633.29 954.51 L634.27 954.64 L635.25 953.78 L636.23 954.61 L637.21 954.69 L638.20 954.32 L639.18 953.93 L640.16 954.81 L641.14 954.49 L642.12 954.47 L643.10 953.73 L644.08 954.31 L645.07 953.69 L646.05 954.71 L647.03 954.46 L648.01 954.00 L648.99 953.65 L649.97 954.29 L650.95 954.63 L651.94 954.78 L652.92 954.18 L653.90 954.68 L654.88 953.76 L655.86 953.72 L656.84 954.69 L657.83 954.55 L658.81 953.76 L659.79 954.01 L660.77 953.76 L661.75 954.45 L662.73 954.77 L663.71 954.53 L664.70 953.78 L665.68 954.56 L666.66 954.44 L667.64 954.34 L668.62 954.34 L669.60 954.35 L670.58 953.59 L671.57 954.73 L672.55 954.95 L673.53 953.56 L674.51 953.65 L675.49 953.49 L676.47 954.31 L677.45 953.55 L678.44 953.58 L679.42 954.63 L680.40 953.85 L681.38 953.72 L682.36 953.97 L683.34 954.19 L684.32 954.53 L685.31 954.45 L686.29 954.62 L687.27 954.86 L688.25 954.08 L689.23 954.53 L690.21 953.76 L691.19 954.89 L692.18 953.62 L693.16 953.93 L694.14 953.59 L695.12 953.63 L696.10 953.62 L697.08 954.10 L698.06 954.94 L699.05 953.85 L700.03 954.70 L701.01 954.51 L701.99 953.97 L702.97 954.18 L703.95 954.34 L704.93 953.56 L705.92 954.05 L706.90 954.45 L707.88 954.58 L708.86 953.68 L709.84 954.25 L710.82 953.80 L711.80 954.43 L712.79 954.66 L713.77 954.16 L714.75 953.74 L715.73 954.70 L716.71 953.78 L717.69 953.59 L718.67 953.76 L719.66 953.73 L720.64 954.95 L721.62 954.02 L722.60 953.68 L723.58 954.88 L724.56 954.55 L725.55 954.56 L726.53 954.17 L727.51 954.33 L728.49 954.26 L729.47 953.80 L730.45 954.95 L731.43 954.88 L732.42 954.77 L733.40 954.77 L734.38 954.86 L735.36 953.51 L736.34 953.69 L737.32 954.83 L738.30 954.21 L739.29 954.49 L740.27 954.49 L741.25 954.44 L742.23 954.00 L743.21 954.09 L744.19 954.42 L745.17 954.67 L746.16 954.47 L747.14 954.77 L748.12 954.13 L749.10 953.89 L750.08 954.39 L751.06 954.84 L752.04 954.69 L753.03 954.40 L754.01 954.06 L754.99 953.80 L755.97 954.39 L756.95 953.77 L757.93 954.03 L758.91 954.32 L759.90 954.40 L760.88 954.22 L761.86 953.91 L762.84 954.33 L763.82 953.93 L764.80 954.27 L765.78 954.59 L766.77 954.16 L767.75 953.93 L768.73 954.85 L769.71 954.33 L770.69 954.33 L771.67 953.65 L772.65 953.57 L773.64 954.40 L774.62 953.62 L775.60 953.78 L776.58 954.57 L777.56 954.27 L778.54 954.77 L779.52 953.75 L780.51 953.97 L781.49 953.64 L782.47 953.78 L783.45 953.97 L784.43 953.87 L785.41 954.12 L786.39 954.80 L787.38 954.08 L788.36 954.95 L789.34 954.74 L790.32 953.81 L791.30 954.89 L792.28 954.82 L793.27 954.81 L794.25 953.65 L795.23 954.69 L796.21 954.92 L797.19 953.71 L798.17 954.78 L799.15 953.70 L800.14 953.96 L801.12 953.72 L802.10 953.54 L803.08 954.10 L804.06 953.77 L805.04 954.90 L806.02 953.82 L807.01 954.20 L807.99 953.90 L808.97 954.80 L809.95 953.85 L810.93 953.57 L811.91 954.87 L812.89 954.48 L813.88 954.12 L814.86 953.73 L815.84 954.60 L816.82 954.69 L817.80 954.59 L818.78 954.04 L819.76 953.84 L820.75 954.37 L821.73 954.41 L822.71 954.37 L823.69 954.44 L824.67 954.34 L825.65 954.83 L826.63 954.21 L827.62 953.51 L828.60 954.34 L829.58 953.85 L830.56 954.72 L831.54 953.93 L832.52 953.83 L833.50 953.96 L834.49 954.19 L835.47 954.24 L836.45 954.00 L837.43 953.63 L838.41 954.74 L839.39 954.81 L840.37 953.85 L841.36 953.60 L842.34 954.19 L843.32 954.30 L844.30 953.89 L845.28 954.68 L846.26 954.56 L847.24 954.66 L848.23 954.09 L849.21 954.49 L850.19 954.61 L851.17 953.93 L852.15 953.54 L853.13 954.52 L854.12 953.91 L855.10 954.34 L856.08 953.69 L857.06 954.09 L858.04 954.56 L859.02 954.63 L860.00 954.92 L860.99 954.25 L861.97 954.39 L862.95 954.70 L863.93 954.42 L864.91 954.48 L865.89 953.81 L866.87 954.74 L867.86 953.49 L868.84 954.25 L869.82 954.07 L870.80 954.26 L871.78 953.72 L872.76 953.74 L873.74 954.13 L874.73 954.24 L875.71 953.89 L876.69 953.69 L877.67 954.36 L878.65 953.87 L879.63 953.53 L880.61 954.26 L881.60 954.62 L882.58 954.61 L883.56 953.89 L884.54 953.95 L885.52 953.53 L886.50 953.69 L887.48 954.60 L888.47 954.68 L889.45 954.57 L890.43 954.68 L891.41 953.91 L892.39 953.68 L893.37 953.62 L894.35 954.58 L895.34 953.67 L896.32 954.49 L897.30 954.33 L898.28 953.88 L899.26 954.83 L900.24 954.82 L901.22 953.72 L902.21 954.52 L903.19 954.43 L904.17 954.10 L905.15 953.95 L906.13 954.95 L907.11 954.46 L908.09 954.31 L909.08 954.24 L910.06 954.65 L911.04 954.09 L912.02 953.54 L913.00 954.38 L913.98 954.15 L914.96 954.78 L915.95 954.55 L916.93 953.97 L917.91 954.79 L918.89 953.64 L919.87 953.61 L920.85 954.81 L921.84 953.56 L922.82 954.40 L923.80 953.81 L924.78 953.83 L925.76 954.52 L926.74 953.95 L927.72 953.99 L928.71 953.76 L929.69 954.56 L930.67 953.84 L931.65 953.53 L932.63 953.96 L933.61 954.16 L934.59 954.79 L935.58 954.22 L936.56 954.43 L937.54 953.89 L938.52 953.95 L939.50 954.12 L940.48 954.69 L941.46 954.00 L942.45 954.02 L943.43 954.69 L944.41 953.64 L945.39 953.98 L946.37 954.77 L947.35 953.57 L948.33 954.75 L949.32 954.47 L950.30 953.89 L951.28 954.07 L952.26 954.13 L953.24 954.00 L954.22 954.28 L955.20 954.49 L956.19 954.70 L957.17 954.86 L958.15 953.89 L959.13 953.84 L960.11 954.15 L961.09 953.86 L962.07 954.42 L963.06 954.56 L964.04 954.39 L965.02 953.66 L966.00 954.89 L966.98 954.21 L967.96 954.59 L968.94 953.82 L969.93 954.43 L970.91 954.46 L971.89 954.36 L972.87 954.15 L973.85 953.81 L974.83 954.43 L975.81 953.70 L976.80 954.79 L977.78 954.56 L978.76 954.81 L979.74 954.79 L980.72 953.80 L981.70 953.88 L982.68 954.68 L983.67 954.68 L984.65 954.34 L985.63 953.85 L986.61 953.75 L987.59 953.85 L988.57 954.08 L989.56 954.74 L990.54 954.37 L991.52 954.67 L992.50 954.17 L993.48 954.11 L994.46 954.66 L995.44 954.59 L996.43 953.80 L997.41 954.91 L998.39 953.77 L999.37 953.63 L1000.35 953.55 L1001.33 954.39 L1002.31 954.14 L1003.30 954.09 L1004.28 954.02 L1005.26 953.51 L1006.24 953.94 L1007.22 954.51 L1008.20 953.68 L1009.18 954.24 L1010.17 954.06 L1011.15 953.88 L1012.13 954.95 L1013.11 953.81 L1014.09 953.97 L1015.07 954.23" fill="none" stroke="#e01818" stroke-width="2.0" stroke-linejoin="round"/>
<path d="M363.72 1025.02 L370.26 1025.02" fill="none" stroke="#7fb8c8" stroke-width="1.6" stroke-linejoin="round"/>
<path d="M376.80 1025.02 L383.35 1025.02" fill="none" stroke="#7fb8c8" stroke-width="1.6" stroke-linejoin="round"/>
<path d="M389.89 1025.02 L396.43 1025.02" fill="none" stroke="#7fb8c8" stroke-width="1.6" stroke-linejoin="round"/>
<path d="M402.98 1025.02 L409.52 1025.02" fill="none" stroke="#7fb8c8" stroke-width="1.6" stroke-linejoin="round"/>
<path d="M416.06 1025.02 L422.60 1025.02" fill="none" stroke="#7fb8c8" stroke-width="1.6" stroke-linejoin="round"/>
<path d="M429.15 1025.02 L435.69 1025.02" fill="none" stroke="#7fb8c8" stroke-width="1.6" stroke-linejoin="round"/>
<path d="M442.23 1025.02 L448.78 1025.02" fill="none" stroke="#7fb8c8" stroke-width="1.6" stroke-linejoin="round"/>
<path d="M455.32 1025.02 L461.86 1025.02" fill="none" stroke="#7fb8c8" stroke-width="1.6" stroke-linejoin="round"/>
<path d="M468.41 1025.02 L474.95 1025.02" fill="none" stroke="#7fb8c8" stroke-width="1.6" stroke-linejoin="round"/>
<path d="M481.49 1025.02 L488.03 1025.02" fill="none" stroke="#7fb8c8" stroke-width="1.6" stroke-linejoin="round"/>
<path d="M491.96 1025.10 L494.90 961.90 L495.89 953.95 L497.19 947.33 L498.18 944.67 L499.16 949.98 L500.14 946.00 L501.12 953.95 L502.76 952.62 L503.74 956.26 L504.33 961.58 L504.92 965.19 L505.50 962.23 L506.09 965.07 L506.68 964.54 L507.27 967.40 L507.86 975.13 L508.45 975.54 L509.04 975.02 L509.63 978.34 L510.21 977.31 L510.80 977.80 L511.39 978.92 L511.98 981.74 L512.57 982.76 L513.16 983.83 L513.75 985.88 L514.34 991.33 L514.93 992.74 L515.51 993.38 L516.10 991.23 L516.69 994.03 L517.28 995.79 L517.87 994.17 L518.46 998.51 L519.05 996.39 L519.64 999.29 L520.23 998.93 L520.81 1003.04 L521.40 999.63 L521.99 1002.17 L522.58 1004.26 L523.17 1003.97 L523.76 1006.62 L524.35 1006.57 L524.94 1004.99 L525.53 1006.65 L526.11 1009.03 L526.70 1003.77 L527.29 1009.35 L527.88 1008.66 L528.47 1008.49 L529.06 1011.37 L529.65 1009.03 L530.24 1009.23 L530.83 1009.04 L531.41 1012.62 L532.00 1010.48 L532.59 1013.02 L533.18 1011.90 L533.77 1011.02 L534.36 1015.28 L534.95 1015.86 L535.54 1013.50 L536.13 1015.80 L536.71 1014.93 L537.30 1013.35 L537.89 1017.41 L538.48 1015.27 L539.07 1017.73 L539.66 1014.80 L540.25 1016.98 L540.84 1016.02 L541.43 1018.35 L542.01 1016.27 L542.60 1017.24 L543.19 1018.23 L543.78 1018.97 L544.37 1018.15 L544.96 1019.60 L545.55 1018.03 L546.14 1019.08 L546.72 1020.18 L547.31 1020.86 L547.90 1018.10 L548.49 1020.87 L549.08 1018.08 L549.67 1018.08 L550.26 1019.90 L550.85 1018.93 L551.44 1020.47 L552.02 1020.48 L552.61 1021.74 L553.20 1021.83 L553.79 1019.86 L554.38 1022.27 L554.97 1020.09 L555.56 1022.61 L556.15 1019.05 L556.74 1020.69 L557.32 1019.95 L557.91 1020.01 L558.50 1022.37 L559.09 1022.86 L559.68 1018.65 L560.27 1022.55 L560.86 1023.04 L561.45 1022.59 L562.04 1021.18 L562.62 1020.70 L563.21 1022.32 L563.80 1022.01 L564.39 1020.61 L564.98 1020.74 L565.57 1021.82 L566.16 1021.17 L566.75 1022.64 L567.34 1023.71 L567.92 1021.29 L568.51 1021.65 L569.10 1023.31 L569.69 1020.45 L570.28 1022.58 L570.87 1023.41 L571.46 1020.81 L572.05 1021.05 L572.64 1022.06 L573.22 1022.37 L573.81 1020.88 L574.40 1020.91 L574.99 1021.59 L575.58 1020.80 L576.17 1023.41 L576.76 1023.83 L577.35 1021.89 L577.94 1022.66 L578.52 1024.43 L579.11 1023.59 L579.70 1023.36 L580.29 1021.91 L580.88 1024.29 L581.47 1023.18 L582.06 1024.14 L582.65 1022.16 L583.23 1021.16 L583.82 1023.39 L584.41 1023.63 L585.00 1022.86 L585.59 1023.49 L586.18 1023.77 L586.77 1021.59 L587.36 1023.76 L587.95 1019.97 L588.53 1022.93 L589.12 1024.27 L589.71 1024.14 L590.30 1023.20 L590.89 1022.05 L591.48 1024.79 L592.07 1024.88 L592.66 1023.71 L593.25 1022.96 L593.83 1023.82 L594.42 1022.05 L595.01 1024.03 L595.60 1023.42 L596.19 1022.53 L596.78 1022.06 L597.37 1024.51 L597.96 1022.14 L598.55 1022.00 L599.13 1024.01 L599.72 1024.96 L600.31 1021.78 L600.90 1023.34 L601.49 1021.68 L602.08 1022.86 L602.67 1023.17 L603.26 1024.39 L603.85 1021.47 L604.43 1023.59 L605.02 1023.42 L605.61 1023.44 L606.20 1024.52 L606.79 1023.19 L607.38 1022.00 L607.97 1021.72 L608.56 1024.98 L609.15 1023.11 L609.73 1024.09 L610.32 1021.80 L610.91 1022.69 L611.50 1023.25 L612.09 1021.64 L612.68 1024.41 L613.27 1024.46 L613.86 1022.12 L614.44 1024.14 L615.03 1021.71 L615.62 1023.71 L616.21 1024.65 L616.80 1021.58 L617.39 1024.30 L617.98 1024.85 L618.57 1022.45 L619.16 1022.86 L619.74 1025.12 L620.33 1021.66 L620.92 1024.18 L621.51 1024.18 L622.10 1024.98 L622.69 1021.68 L623.28 1021.87 L623.87 1021.56 L624.46 1022.81 L625.04 1024.96 L625.63 1024.52 L626.22 1022.18 L626.81 1024.98 L627.40 1023.22 L627.99 1024.77 L628.58 1021.59 L629.17 1024.69 L629.76 1024.70 L630.34 1021.85 L630.93 1024.47 L631.52 1021.56 L632.11 1024.28 L632.70 1021.73 L633.29 1022.62 L633.88 1025.09 L634.47 1022.46 L635.06 1023.11 L635.64 1023.22 L636.23 1023.24 L636.82 1024.45 L637.41 1021.80 L638.00 1024.52 L638.59 1022.14 L639.18 1024.21 L639.77 1024.98 L640.36 1023.69 L640.94 1020.87 L641.53 1022.30 L642.12 1022.70 L642.71 1022.41 L643.30 1023.22 L643.89 1024.65 L644.48 1024.01 L645.07 1023.83 L645.66 1023.88 L646.24 1021.63 L646.83 1022.06 L647.42 1024.14 L648.01 1024.20 L648.60 1023.37 L649.19 1023.95 L649.78 1024.16 L650.37 1023.54 L650.95 1023.26 L651.54 1021.61 L652.13 1023.58 L652.72 1024.93 L653.31 1022.12 L653.90 1024.97 L654.49 1023.79 L655.08 1023.86 L655.67 1023.20 L656.25 1023.62 L656.84 1022.61 L657.43 1024.10 L658.02 1023.74 L658.61 1022.83 L659.20 1023.07 L659.79 1024.39 L660.38 1022.96 L660.97 1024.89 L661.55 1021.14 L662.14 1021.85 L662.73 1022.52 L663.32 1022.16 L663.91 1023.59 L664.50 1024.75 L665.09 1023.82 L665.68 1021.97 L666.27 1024.50 L666.85 1023.02 L667.44 1025.08 L668.03 1025.16 L668.62 1024.52 L669.21 1023.78 L669.80 1023.62 L670.39 1022.80 L670.98 1024.83 L671.57 1022.69 L672.15 1023.59 L672.74 1021.60 L673.33 1025.15 L673.92 1023.66 L674.51 1022.20 L675.10 1023.67 L675.69 1021.99 L676.28 1023.77 L676.87 1018.80 L677.45 1023.29 L678.04 1024.88 L678.63 1023.49 L679.22 1023.24 L679.81 1021.64 L680.40 1023.28 L680.99 1024.11 L681.58 1024.71 L682.17 1022.95 L682.75 1022.41 L683.34 1022.09 L683.93 1024.45 L684.52 1023.62 L685.11 1024.49 L685.70 1024.41 L686.29 1021.80 L686.88 1021.88 L687.46 1024.42 L688.05 1025.05 L688.64 1023.80 L689.23 1022.18 L689.82 1023.74 L690.41 1024.54 L691.00 1024.23 L691.59 1023.96 L692.18 1024.39 L692.76 1023.15 L693.35 1022.66 L693.94 1022.76 L694.53 1024.55 L695.12 1023.76 L695.71 1023.03 L696.30 1023.59 L696.89 1022.34 L697.48 1023.42 L698.06 1024.22 L698.65 1022.71 L699.24 1022.23 L699.83 1023.94 L700.42 1023.44 L701.01 1022.60 L701.60 1022.54 L702.19 1024.80 L702.78 1022.11 L703.36 1023.24 L703.95 1023.57 L704.54 1023.08 L705.13 1024.45 L705.72 1022.44 L706.31 1024.09 L706.90 1021.99 L707.49 1021.61 L708.08 1022.48 L708.66 1025.15 L709.25 1022.53 L709.84 1023.46 L710.43 1024.28 L711.02 1023.15 L711.61 1024.79 L712.20 1024.03 L712.79 1024.56 L713.38 1024.48 L713.96 1023.10 L714.55 1024.99 L715.14 1024.46 L715.73 1024.58 L716.32 1023.24 L716.91 1022.05 L717.50 1023.75 L718.09 1024.19 L718.67 1021.78 L719.26 1021.76 L719.85 1023.62 L720.44 1021.71 L721.03 1023.12 L721.62 1024.47 L722.21 1021.63 L722.80 1022.54 L723.39 1024.83 L723.97 1022.47 L724.56 1023.54 L725.15 1024.01 L725.74 1024.59 L726.33 1024.21 L726.92 1023.84 L727.51 1022.49 L728.10 1022.70 L728.69 1022.28 L729.27 1023.22 L729.86 1023.78 L730.45 1024.57 L731.04 1024.42 L731.63 1023.36 L732.22 1022.12 L732.81 1023.84 L733.40 1023.18 L733.99 1021.86 L734.57 1024.61 L735.16 1022.51 L735.75 1022.52 L736.34 1023.22 L736.93 1023.00 L737.52 1024.69 L738.11 1021.99 L738.70 1025.16 L739.29 1022.35 L739.87 1023.54 L740.46 1022.98 L741.05 1020.32 L741.64 1022.66 L742.23 1025.07 L742.82 1024.00 L743.41 1024.82 L744.00 1023.78 L744.59 1023.58 L745.17 1024.01 L745.76 1023.55 L746.35 1023.94 L746.94 1023.68 L747.53 1024.05 L748.12 1023.22 L748.71 1022.48 L749.30 1023.96 L749.89 1023.13 L750.47 1022.43 L751.06 1022.79 L751.65 1023.30 L752.24 1024.07 L752.83 1022.32 L753.42 1024.83 L754.01 1023.08 L754.60 1023.60 L755.18 1021.57 L755.77 1023.86 L756.36 1024.75 L756.95 1023.45 L757.54 1021.85 L758.13 1025.15 L758.72 1025.17 L759.31 1022.05 L759.90 1025.01 L760.48 1024.09 L761.07 1024.10 L761.66 1024.71 L762.25 1024.87 L762.84 1025.03 L763.43 1024.49 L764.02 1022.50 L764.61 1022.41 L765.20 1022.91 L765.78 1022.75 L766.37 1019.94 L766.96 1022.74 L767.55 1023.66 L768.14 1023.16 L768.73 1023.51 L769.32 1025.08 L769.91 1022.52 L770.50 1023.48 L771.08 1023.89 L771.67 1022.50 L772.26 1023.46 L772.85 1023.97 L773.44 1024.32 L774.03 1022.98 L774.62 1024.53 L775.21 1024.54 L775.80 1024.26 L776.38 1023.15 L776.97 1020.10 L777.56 1022.47 L778.15 1022.56 L778.74 1024.39 L779.33 1024.48 L779.92 1022.87 L780.51 1024.81 L781.10 1023.46 L781.68 1023.37 L782.27 1024.46 L782.86 1022.85 L783.45 1021.88 L784.04 1021.97 L784.63 1022.61 L785.22 1024.69 L785.81 1021.94 L786.40 1023.04 L786.98 1024.13 L787.57 1021.91 L788.16 1024.66 L788.75 1022.19 L789.34 1024.05 L789.93 1021.83 L790.52 1025.12 L791.11 1024.04 L791.69 1021.66 L792.28 1024.88 L792.87 1024.31 L793.46 1021.80 L794.05 1021.93 L794.64 1024.09 L795.23 1023.23 L795.82 1023.75 L796.41 1024.11 L796.99 1021.81 L797.58 1022.22 L798.17 1024.28 L798.76 1024.63 L799.35 1021.92 L799.94 1023.17 L800.53 1023.64 L801.12 1021.92 L801.71 1024.15 L802.29 1024.46 L802.88 1024.06 L803.47 1024.80 L804.06 1023.75 L804.65 1022.82 L805.24 1024.28 L805.83 1019.21 L806.42 1023.94 L807.01 1024.00 L807.59 1024.04 L808.18 1023.72 L808.77 1024.14 L809.36 1022.37 L809.95 1022.41 L810.54 1024.75 L811.13 1022.12 L811.72 1023.80 L812.31 1022.13 L812.89 1023.88 L813.48 1025.15 L814.07 1023.46 L814.66 1023.55 L815.25 1022.60 L815.84 1021.64 L816.43 1022.06 L817.02 1022.31 L817.61 1024.90 L818.19 1022.15 L818.78 1022.02 L819.37 1025.00 L819.96 1024.80 L820.55 1023.56 L821.14 1022.31 L821.73 1022.74 L822.32 1023.20 L822.90 1021.97 L823.49 1024.88 L824.08 1024.17 L824.67 1025.08 L825.26 1019.66 L825.85 1021.80 L826.44 1022.64 L827.03 1022.95 L827.62 1020.57 L828.20 1023.25 L828.79 1024.40 L829.38 1024.72 L829.97 1023.58 L830.56 1022.77 L831.15 1022.55 L831.74 1022.08 L832.33 1024.34 L832.92 1021.94 L833.50 1023.78 L834.09 1022.66 L834.68 1023.97 L835.27 1022.38 L835.86 1024.92 L836.45 1022.55 L837.04 1023.72 L837.63 1023.63 L838.22 1024.82 L838.80 1023.02 L839.39 1021.76 L839.98 1023.53 L840.57 1023.01 L841.16 1023.40 L841.75 1023.41 L842.34 1024.49 L842.93 1024.11 L843.52 1024.92 L844.10 1023.59 L844.69 1024.46 L845.28 1024.71 L845.87 1021.04 L846.46 1024.47 L847.05 1023.54 L847.64 1024.14 L848.23 1022.25 L848.82 1025.18 L849.40 1023.42 L849.99 1022.33 L850.58 1024.13 L851.17 1023.07 L851.76 1022.08 L852.35 1023.95 L852.94 1023.19 L853.53 1023.25 L854.12 1023.15 L854.70 1024.85 L855.29 1023.09 L855.88 1022.62 L856.47 1024.96 L857.06 1024.36 L857.65 1024.67 L858.24 1024.29 L858.83 1022.23 L859.41 1024.65 L860.00 1022.65 L860.59 1021.86 L861.18 1021.82 L861.77 1022.95 L862.36 1024.22 L862.95 1024.74 L863.54 1022.30 L864.13 1022.50 L864.71 1022.02 L865.30 1022.70 L865.89 1025.03 L866.48 1023.85 L867.07 1022.76 L867.66 1022.51 L868.25 1022.67 L868.84 1023.35 L869.43 1022.24 L870.01 1023.90 L870.60 1024.36 L871.19 1025.18 L871.78 1023.43 L872.37 1023.13 L872.96 1021.71 L873.55 1023.07 L874.14 1021.99 L874.73 1022.20 L875.31 1021.61 L875.90 1023.77 L876.49 1022.83 L877.08 1022.45 L877.67 1022.20 L878.26 1024.09 L878.85 1022.79 L879.44 1023.16 L880.03 1022.86 L880.61 1024.16 L881.20 1021.99 L881.79 1024.18 L882.38 1022.54 L882.97 1022.83 L883.56 1022.58 L884.15 1023.84 L884.74 1023.57 L885.33 1022.47 L885.91 1024.79 L886.50 1021.77 L887.09 1023.09 L887.68 1025.07 L888.27 1022.93 L888.86 1024.06 L889.45 1024.73 L890.04 1024.26 L890.62 1022.28 L891.21 1022.46 L891.80 1023.29 L892.39 1022.09 L892.98 1022.44 L893.57 1019.14 L894.16 1023.42 L894.75 1023.66 L895.34 1022.93 L895.92 1022.24 L896.51 1021.94 L897.10 1024.91 L897.69 1024.93 L898.28 1022.40 L898.87 1023.22 L899.46 1023.05 L900.05 1022.45 L900.64 1023.09 L901.22 1024.02 L901.81 1021.60 L902.40 1025.18 L902.99 1024.37 L903.58 1024.46 L904.17 1022.42 L904.76 1021.65 L905.35 1021.94 L905.94 1024.44 L906.52 1023.69 L907.11 1025.02 L907.70 1023.16 L908.29 1022.18 L908.88 1023.58 L909.47 1023.92 L910.06 1023.38 L910.65 1024.33 L911.24 1024.18 L911.82 1024.97 L912.41 1022.94 L913.00 1023.91 L913.59 1024.57 L914.18 1025.09 L914.77 1022.36 L915.36 1022.09 L915.95 1023.18 L916.54 1022.67 L917.12 1021.82 L917.71 1024.28 L918.30 1024.75 L918.89 1023.10 L919.48 1021.96 L920.07 1021.98 L920.66 1024.22 L921.25 1022.30 L921.84 1022.30 L922.42 1023.01 L923.01 1024.34 L923.60 1022.50 L924.19 1017.67 L924.78 1024.33 L925.37 1022.23 L925.96 1023.49 L926.55 1024.13 L927.13 1024.79 L927.72 1023.05 L928.31 1021.78 L928.90 1024.94 L929.49 1025.09 L930.08 1022.62 L930.67 1022.91 L931.26 1022.22 L931.85 1023.80 L932.43 1024.62 L933.02 1024.45 L933.61 1024.03 L934.20 1023.21 L934.79 1024.63 L935.38 1022.70 L935.97 1022.76 L936.56 1023.78 L937.15 1022.97 L937.73 1023.29 L938.32 1022.72 L938.91 1023.32 L939.50 1023.51 L940.09 1021.90 L940.68 1022.25 L941.27 1022.65 L941.86 1019.75 L942.45 1021.66 L943.03 1022.64 L943.62 1023.75 L944.21 1023.16 L944.80 1023.26 L945.39 1024.09 L945.98 1023.00 L946.57 1022.01 L947.16 1021.69 L947.75 1024.25 L948.33 1024.84 L948.92 1022.16 L949.51 1022.06 L950.10 1024.80 L950.69 1023.40 L951.28 1024.11 L951.87 1023.08 L952.46 1022.34 L953.05 1023.05 L953.63 1025.03 L954.22 1023.31 L954.81 1023.83 L955.40 1022.35 L955.99 1025.17 L956.58 1023.70 L957.17 1024.54 L957.76 1024.55 L958.35 1022.74 L958.93 1022.83 L959.52 1022.32 L960.11 1022.93 L960.70 1022.87 L961.29 1023.07 L961.88 1022.47 L962.47 1022.61 L963.06 1025.06 L963.64 1021.62 L964.23 1022.23 L964.82 1024.94 L965.41 1025.16 L966.00 1024.09 L966.59 1021.94 L967.18 1023.73 L967.77 1022.45 L968.36 1024.92 L968.94 1022.08 L969.53 1024.02 L970.12 1023.19 L970.71 1021.76 L971.30 1023.47 L971.89 1024.31 L972.48 1022.16 L973.07 1021.96 L973.66 1023.84 L974.24 1024.82 L974.83 1023.59 L975.42 1024.55 L976.01 1022.03 L976.60 1023.18 L977.19 1023.31 L977.78 1023.75 L978.37 1022.22 L978.96 1023.15 L979.54 1021.89 L980.13 1024.57 L980.72 1022.18 L981.31 1024.79 L981.90 1024.62 L982.49 1021.62 L983.08 1022.46 L983.67 1022.11 L984.26 1025.15 L984.84 1021.82 L985.43 1023.55 L986.02 1023.99 L986.61 1022.37 L987.20 1021.58 L987.79 1022.08 L988.38 1024.48 L988.97 1023.10 L989.56 1023.14 L990.14 1024.47 L990.73 1023.86 L991.32 1021.66 L991.91 1022.74 L992.50 1024.65 L993.09 1022.17 L993.68 1021.89 L994.27 1021.95 L994.85 1023.58 L995.44 1024.65 L996.03 1023.87 L996.62 1024.41 L997.21 1024.02 L997.80 1024.89 L998.39 1022.10 L998.98 1024.26 L999.57 1024.80 L1000.15 1025.13 L1000.74 1022.08 L1001.33 1024.16 L1001.92 1021.56 L1002.51 1024.87 L1003.10 1024.66 L1003.69 1022.11 L1004.28 1024.20 L1004.87 1022.66 L1005.45 1024.32 L1006.04 1023.36 L1006.63 1022.81 L1007.22 1021.92 L1007.81 1024.39 L1008.40 1024.73 L1008.99 1022.00 L1009.58 1023.59 L1010.17 1021.69 L1010.75 1024.32 L1011.34 1023.36 L1011.93 1023.93 L1012.52 1024.32 L1013.11 1023.01 L1013.70 1023.48 L1014.29 1018.89 L1014.88 1023.52" fill="none" stroke="#22e8f0" stroke-width="2.0" stroke-linejoin="round"/>
<line x1="361.1" y1="867.0" x2="1015.4" y2="867.0" stroke="#222" stroke-width="1"/>
<rect x="599.2" y="840.8" width="138.2" height="23" fill="#e6e6e6" stroke="#8aa0c8" stroke-width="1.2"/>
<line x1="599.5" y1="863.6" x2="737.4" y2="863.6" stroke="#3a5a90" stroke-width="1.5"/>
<text x="609.6" y="857.4" font-size="16.4" fill="#2c5ec0" font-weight="normal" text-anchor="start" textLength="113.4" lengthAdjust="spacingAndGlyphs" stroke="#2c5ec0" stroke-width="0.55">REAL case Plot</text>
<rect x="929" y="1054.8" width="108.70000000000005" height="29.200000000000045" fill="#e4e4e4"/>
<path d="M929 1083.5 L1037.2 1083.5 L1037.2 1054.8" stroke="#c8c8c0" stroke-width="1.5" fill="none"/>
<rect x="946.6" y="1058.6" width="23" height="20.800000000000182" fill="#e0e0e0"/>
<path d="M947.1 1079.4 L947.1 1059.1 L969.6 1059.1" stroke="#f8f8f8" stroke-width="1" fill="none"/>
<path d="M946.6 1078.9 L969.1 1078.9 L969.1 1058.6" stroke="#8a8a84" stroke-width="1" fill="none"/>
<line x1="950.1" y1="1070.0" x2="966.1" y2="1070.0" stroke="#111" stroke-width="1.6"/>
<line x1="958.1" y1="1062.0" x2="958.1" y2="1078.0" stroke="#111" stroke-width="1.6"/>
<circle cx="958.1" cy="1070.0" r="2" fill="#fff" stroke="#111" stroke-width="1"/>
<circle cx="950.6" cy="1062.6" r="1.6" fill="#5a8a3a"/>
<rect x="972.4" y="1058.6" width="23" height="20.800000000000182" fill="#b8b8b4"/>
<path d="M972.9 1079.4 L972.9 1059.1 L995.4 1059.1" stroke="#888" stroke-width="1" fill="none"/>
<path d="M972.4 1078.9 L994.9 1078.9 L994.9 1058.6" stroke="#eee" stroke-width="1" fill="none"/>
<circle cx="985.9" cy="1067.5" r="5.5" fill="#dcdcf4" stroke="#111" stroke-width="1.6"/>
<line x1="981.9" y1="1071.5" x2="975.9" y2="1077.0" stroke="#111" stroke-width="3"/>
<line x1="985.9" y1="1065.0" x2="985.9" y2="1070.0" stroke="#111" stroke-width="1.2"/>
<line x1="983.4" y1="1067.5" x2="988.4" y2="1067.5" stroke="#111" stroke-width="1.2"/>
<circle cx="976.4" cy="1062.6" r="1.6" fill="#5ac83a"/>
<path d="M988.9 1075.0 L992.9 1075.0 L990.9 1077.5 Z" stroke="none" stroke-width="0" fill="#111"/>
<rect x="999.6" y="1058.6" width="23" height="20.800000000000182" fill="#e0e0e0"/>
<path d="M1000.1 1079.4 L1000.1 1059.1 L1022.6 1059.1" stroke="#f8f8f8" stroke-width="1" fill="none"/>
<path d="M999.6 1078.9 L1022.1 1078.9 L1022.1 1058.6" stroke="#8a8a84" stroke-width="1" fill="none"/>
<path d="M1006.1 1073.0 L1003.1 1069.0 Q1002.1 1067.0 1005.1 1068.0 L1007.1 1070.0 L1007.1 1063.0 Q1008.1 1061.0 1009.1 1063.0 L1009.6 1068.0 L1010.1 1061.0 Q1011.1 1059.5 1012.1 1061.0 L1012.6 1068.0 L1013.6 1062.0 Q1014.6 1060.5 1015.6 1062.5 L1015.1 1069.0 L1016.6 1064.0 Q1018.1 1063.0 1018.1 1065.0 L1017.1 1073.0 Q1015.1 1077.0 1011.1 1077.0 Q1008.1 1077.0 1006.1 1073.0 Z" stroke="#111" stroke-width="1.3" fill="#fff"/>
<circle cx="1003.6" cy="1062.6" r="1.6" fill="#5a8a3a"/>
<text x="308" y="1078.8" font-size="14.6" fill="#111" font-weight="bold" text-anchor="start" textLength="63.8" lengthAdjust="spacingAndGlyphs" stroke="#111" stroke-width="0.35">Precision</text>
<rect x="374" y="1061.8" width="54.6" height="23" fill="#2f8a22"/>
<rect x="376.5" y="1064" width="24" height="18.5" fill="#e4e4e4"/>
<rect x="401" y="1064" width="25" height="18.5" fill="#3c9c2c"/>
<rect x="401" y="1064" width="25" height="4" fill="#52b040"/>
<path d="M405.5 1067.5 L420.5 1067.5 L413 1078 Z" stroke="#6a8a6a" stroke-width="0.6" fill="#c8d0c8"/>
<text x="382.5" y="1078.5" font-size="14" fill="#222" font-weight="normal" text-anchor="start">2</text>
<text x="433.5" y="1075.6" font-size="14.6" fill="#111" font-weight="bold" text-anchor="start" textLength="90.5" lengthAdjust="spacingAndGlyphs" stroke="#111" stroke-width="0.35">elapsed time</text>
<rect x="529.7" y="1058.4" width="53.1" height="25" fill="#d4d4d4"/>
<rect x="532.7" y="1061.4" width="47.1" height="20" fill="#dedede"/>
<path d="M530.2 1083.4 L530.2 1058.9 L582.8000000000001 1058.9" stroke="#c0c0c0" stroke-width="1" fill="none"/>
<path d="M582.3000000000001 1059.4 L582.3000000000001 1082.9 L529.7 1082.9" stroke="#f2f2f2" stroke-width="1" fill="none"/>
<text x="535.5" y="1075.76" font-size="13.5" fill="#222" font-weight="normal" text-anchor="start">1</text>
<text x="585.7" y="1075.6" font-size="14.6" fill="#111" font-weight="bold" text-anchor="start" textLength="23" lengthAdjust="spacingAndGlyphs" stroke="#111" stroke-width="0.35">sec</text>
<text x="619.8" y="1069" font-size="14.6" fill="#2a9a1a" font-weight="bold" text-anchor="start" textLength="108" lengthAdjust="spacingAndGlyphs" stroke="#2a9a1a" stroke-width="0.35">TIME (seconds)</text>
<rect x="756" y="1064.4" width="75.6" height="19.2" fill="url(#gBtn)"/>
<rect x="756.7" y="1065.1" width="74.2" height="17.8" fill="none" stroke="#4a4a44" stroke-width="1.4"/>
<text x="761.5" y="1079.2" font-size="14" fill="#222" font-weight="normal" text-anchor="start" textLength="62.5" lengthAdjust="spacingAndGlyphs">Reset Plot</text>
<rect x="1045" y="638" width="143.5" height="39" fill="#b5b5b5"/>
<line x1="1188" y1="637" x2="1188" y2="676" stroke="#808080" stroke-width="1.6"/>
<rect x="1190.8" y="640.6" width="140.2" height="30" fill="#b2b2b2"/>
<line x1="1191" y1="641" x2="1330" y2="641" stroke="#d0d0d0" stroke-width="1.2"/>
<line x1="1330" y1="641" x2="1330" y2="671" stroke="#7a7a7a" stroke-width="1.6"/>
<line x1="1190" y1="671" x2="1331" y2="671" stroke="#9a9a9a" stroke-width="1.2"/>
<line x1="1188.5" y1="675" x2="1334" y2="675" stroke="#c8c8c8" stroke-width="1.2"/>
<text x="1068" y="661.7" font-size="19.3" fill="#2c6cd4" font-weight="normal" text-anchor="start" textLength="84" lengthAdjust="spacingAndGlyphs" stroke="#2c6cd4" stroke-width="0.35">Real unit</text>
<text x="1208" y="661.7" font-size="19.3" fill="#2c6cd4" font-weight="normal" text-anchor="start" textLength="100.3" lengthAdjust="spacingAndGlyphs" stroke="#2c6cd4" stroke-width="0.35">Simulation</text>
<rect x="1069.4" y="686" width="238.3" height="26.6" fill="none" stroke="#4a804a" stroke-width="1.7"/>
<text x="1074" y="701.4" font-size="14" fill="#111" font-weight="bold" text-anchor="start" textLength="89.6" lengthAdjust="spacingAndGlyphs" stroke="#111" stroke-width="0.35">CONTINUOUS</text>
<ellipse cx="1195.2" cy="698" rx="22.3" ry="6.4" fill="#d8d8d8" stroke="#8a8a8a" stroke-width="1"/>
<ellipse cx="1195.2" cy="698" rx="22.3" ry="6.4" fill="#6c6c88"/>
<ellipse cx="1201" cy="698.5" rx="15.5" ry="5.2" fill="#d6d6d6"/>
<ellipse cx="1202" cy="697.5" rx="11" ry="3.4" fill="#eeeeee"/>
<text x="1226.8" y="701.4" font-size="14" fill="#111" font-weight="bold" text-anchor="start" textLength="76.2" lengthAdjust="spacingAndGlyphs" stroke="#111" stroke-width="0.35">TRANSIENT</text>
<rect x="1069" y="718.5" width="240" height="348.5" fill="none" stroke="#4a804a" stroke-width="1.7"/>
<path d="M1086 740 L1079.4 740 L1079.4 1016.2 L1297 1016.2 L1297 740 L1247.5 740" stroke="#4a804a" stroke-width="1.7" fill="none"/>
<rect x="1086" y="726.2" width="161.5" height="26.1" fill="#b5b5b5"/>
<path d="M1086.5 752.3 L1086.5 726.7 L1247 726.7" stroke="#d4d4d4" stroke-width="1.2" fill="none"/>
<path d="M1086 752 L1247 752 L1247 726.2" stroke="#3a7a3a" stroke-width="1.6" fill="none"/>
<text x="1094" y="745" font-size="19.8" fill="#1a9a2a" font-weight="normal" text-anchor="start" textLength="142.4" lengthAdjust="spacingAndGlyphs" stroke="#1a9a2a" stroke-width="0.3">Control Signals</text>
<rect x="1089.3" y="757.7" width="198.5" height="183.4" fill="none" stroke="#4a804a" stroke-width="1.7"/>
<text x="1106.1" y="778.8" font-size="14.2" fill="#111" font-weight="bold" text-anchor="start" textLength="73.1" lengthAdjust="spacingAndGlyphs" stroke="#111" stroke-width="0.35">Waveform</text>
<path d="M1102.6999999999998 786.6 C1112.1 793.5 1112.1 807.9 1102.6999999999998 816.8 Z" fill="#8e8e8e" opacity="0.8"/>
<path d="M1101.1999999999998 785.6 C1091.8 792.71 1091.8 808.6899999999999 1101.1999999999998 815.8 C1110.6 808.6899999999999 1110.6 792.71 1101.1999999999998 785.6 Z" fill="#ececec" stroke="#b8b8b8" stroke-width="0.8"/>
<line x1="1094.3" y1="800.7" x2="1108.1" y2="800.7" stroke="#b0b0b0" stroke-width="1"/>
<line x1="1099.6999999999998" y1="796.7" x2="1102.6999999999998" y2="791.7" stroke="#555" stroke-width="1.2"/>
<line x1="1098.6999999999998" y1="804.7" x2="1103.6999999999998" y2="804.7" stroke="#555" stroke-width="1.1"/>
<line x1="1100.1999999999998" y1="804.7" x2="1101.6999999999998" y2="808.7" stroke="#555" stroke-width="1.1"/>
<rect x="1108.8" y="787.9" width="80.5" height="27.899999999999977" fill="#a8a8a8"/>
<path d="M1108.8 815.8 L1189.3 815.8 L1189.3 787.9" stroke="#c6c6c6" stroke-width="2" fill="none"/>
<rect x="1111.8" y="790.9" width="74.5" height="21.899999999999977" fill="#ffffff"/>
<text x="1113.3" y="806.7099999999999" font-size="13.5" fill="#111" font-weight="normal" text-anchor="start">Step</text>
<text x="1205.6" y="783.4" font-size="13.8" fill="#8c8c8c" font-weight="bold" text-anchor="start" textLength="70.9" lengthAdjust="spacingAndGlyphs" stroke="#8c8c8c" stroke-width="0.35">frequency</text>
<line x1="1223.6507575950825" y1="844.9492424049175" x2="1217.99390334559" y2="850.60609665441" stroke="#8a8a8a" stroke-width="1.4"/>
<line x1="1217.5767566415066" y1="836.8983738762489" x2="1213.772530576326" y2="838.1344418537486" stroke="#8a8a8a" stroke-width="1.4"/>
<line x1="1216.770856506907" y1="826.6584417691149" x2="1212.8201031445265" y2="826.032703908954" stroke="#8a8a8a" stroke-width="1.4"/>
<line x1="1220.701626123751" y1="817.1687244495656" x2="1217.4655581462514" y2="814.8175834403958" stroke="#8a8a8a" stroke-width="1.4"/>
<line x1="1228.51220900573" y1="810.497856467856" x2="1226.6962470067717" y2="806.9338303711024" stroke="#8a8a8a" stroke-width="1.4"/>
<line x1="1238.5" y1="809.1" x2="1238.5" y2="801.1" stroke="#8a8a8a" stroke-width="1.4"/>
<line x1="1248.48779099427" y1="810.497856467856" x2="1250.3037529932283" y2="806.9338303711024" stroke="#8a8a8a" stroke-width="1.4"/>
<line x1="1256.298373876249" y1="817.1687244495656" x2="1259.5344418537486" y2="814.8175834403958" stroke="#8a8a8a" stroke-width="1.4"/>
<line x1="1260.229143493093" y1="826.6584417691149" x2="1264.1798968554735" y2="826.032703908954" stroke="#8a8a8a" stroke-width="1.4"/>
<line x1="1259.4232433584934" y1="836.8983738762489" x2="1263.227469423674" y2="838.1344418537486" stroke="#8a8a8a" stroke-width="1.4"/>
<line x1="1253.3492424049175" y1="844.9492424049175" x2="1259.00609665441" y2="850.6060966544098" stroke="#8a8a8a" stroke-width="1.4"/>
<circle cx="1239.5" cy="832.1" r="17.5" fill="#a8a8a8"/>
<circle cx="1238.5" cy="830.1" r="16.6" fill="url(#gKnob)"/>
<text x="1234.3" y="799.2" font-size="13.5" fill="#8c8c8c" font-weight="normal" text-anchor="start" textLength="8.2" lengthAdjust="spacingAndGlyphs">2</text>
<text x="1210" y="863.3" font-size="13.5" fill="#8c8c8c" font-weight="normal" text-anchor="start" textLength="5" lengthAdjust="spacingAndGlyphs">1</text>
<text x="1262" y="863.3" font-size="13.5" fill="#8c8c8c" font-weight="normal" text-anchor="start" textLength="7.5" lengthAdjust="spacingAndGlyphs">3</text>
<text x="1107.3" y="833.9" font-size="14.2" fill="#111" font-weight="bold" text-anchor="start" textLength="24.7" lengthAdjust="spacingAndGlyphs" stroke="#111" stroke-width="0.35">Vpp</text>
<path d="M1102.3 838 C1110.8 844.0 1110.8 859.0 1102.3 867 Z" fill="#8e8e8e" opacity="0.8"/>
<path d="M1100.8 837 C1092.3 843.3 1092.3 859.7 1100.8 866 C1109.3 859.7 1109.3 843.3 1100.8 837 Z" fill="#ececec" stroke="#b8b8b8" stroke-width="0.8"/>
<line x1="1094.8" y1="851.5" x2="1106.8" y2="851.5" stroke="#b0b0b0" stroke-width="1"/>
<line x1="1099.3" y1="847.5" x2="1102.3" y2="842.5" stroke="#555" stroke-width="1.2"/>
<line x1="1098.3" y1="855.5" x2="1103.3" y2="855.5" stroke="#555" stroke-width="1.1"/>
<line x1="1099.8" y1="855.5" x2="1101.3" y2="859.5" stroke="#555" stroke-width="1.1"/>
<rect x="1108.8" y="839.2" width="55.299999999999955" height="24.09999999999991" fill="#a8a8a8"/>
<path d="M1108.8 863.3 L1164.1 863.3 L1164.1 839.2" stroke="#c6c6c6" stroke-width="2" fill="none"/>
<rect x="1111.8" y="842.2" width="49.299999999999955" height="18.09999999999991" fill="#ffffff"/>
<text x="1113.3" y="856.29" font-size="14" fill="#111" font-weight="normal" text-anchor="start">5,00</text>
<text x="1164.9" y="854.2" font-size="14.2" fill="#111" font-weight="bold" text-anchor="start" textLength="33.9" lengthAdjust="spacingAndGlyphs" stroke="#111" stroke-width="0.35">Volts</text>
<path d="M1208.65 865 C1217.7 871.5500000000001 1217.7 885.15 1208.65 893.7 Z" fill="#8e8e8e" opacity="0.8"/>
<path d="M1207.15 864 C1198.1 870.7950000000001 1198.1 885.905 1207.15 892.7 C1216.2 885.905 1216.2 870.7950000000001 1207.15 864 Z" fill="#dcdcdc" stroke="#b8b8b8" stroke-width="0.8"/>
<line x1="1200.6" y1="878.35" x2="1213.7" y2="878.35" stroke="#b0b0b0" stroke-width="1"/>
<line x1="1205.65" y1="874.35" x2="1208.65" y2="869.35" stroke="#a0a0a0" stroke-width="1.2"/>
<line x1="1204.65" y1="882.35" x2="1209.65" y2="882.35" stroke="#a0a0a0" stroke-width="1.1"/>
<line x1="1206.15" y1="882.35" x2="1207.65" y2="886.35" stroke="#a0a0a0" stroke-width="1.1"/>
<rect x="1214.4" y="867.8" width="55.299999999999955" height="24.100000000000023" fill="#a8a8a8"/>
<path d="M1214.4 891.9 L1269.7 891.9 L1269.7 867.8" stroke="#c6c6c6" stroke-width="2" fill="none"/>
<rect x="1217.4" y="870.8" width="49.299999999999955" height="18.100000000000023" fill="#c8c8c8"/>
<text x="1218.9" y="884.7099999999999" font-size="13.5" fill="#989898" font-weight="normal" text-anchor="start">3</text>
<text x="1272" y="885" font-size="13.5" fill="#111" font-weight="bold" text-anchor="start" textLength="14.3" lengthAdjust="spacingAndGlyphs" stroke="#111" stroke-width="0.35">%</text>
<text x="1107.6" y="882.9" font-size="13.8" fill="#111" font-weight="bold" text-anchor="start" textLength="49.4" lengthAdjust="spacingAndGlyphs" stroke="#111" stroke-width="0.35">Trigger</text>
<path d="M1102.3 887.4 C1110.8 893.4 1110.8 908.2 1102.3 916.2 Z" fill="#8e8e8e" opacity="0.8"/>
<path d="M1100.8 886.4 C1092.3 892.6999999999999 1092.3 908.9000000000001 1100.8 915.2 C1109.3 908.9000000000001 1109.3 892.6999999999999 1100.8 886.4 Z" fill="#ececec" stroke="#b8b8b8" stroke-width="0.8"/>
<line x1="1094.8" y1="900.8" x2="1106.8" y2="900.8" stroke="#b0b0b0" stroke-width="1"/>
<line x1="1099.3" y1="896.8" x2="1102.3" y2="891.8" stroke="#555" stroke-width="1.2"/>
<line x1="1098.3" y1="904.8" x2="1103.3" y2="904.8" stroke="#555" stroke-width="1.1"/>
<line x1="1099.8" y1="904.8" x2="1101.3" y2="908.8" stroke="#555" stroke-width="1.1"/>
<rect x="1108.8" y="889" width="55.299999999999955" height="25.600000000000023" fill="#a8a8a8"/>
<path d="M1108.8 914.6 L1164.1 914.6 L1164.1 889" stroke="#c6c6c6" stroke-width="2" fill="none"/>
<rect x="1111.8" y="892" width="49.299999999999955" height="19.600000000000023" fill="#ffffff"/>
<text x="1113.3" y="906.8399999999999" font-size="14" fill="#111" font-weight="normal" text-anchor="start">0,2</text>
<text x="1167" y="905" font-size="14.2" fill="#111" font-weight="bold" text-anchor="start" textLength="23.5" lengthAdjust="spacingAndGlyphs" stroke="#111" stroke-width="0.35">sec</text>
<text x="1086.6" y="957.6" font-size="14" fill="#111" font-weight="bold" text-anchor="start" textLength="118.3" lengthAdjust="spacingAndGlyphs" stroke="#111" stroke-width="0.35">TURBINE_MOTOR</text>
<ellipse cx="1148" cy="972" rx="7" ry="6" fill="#8e8e8e" opacity="0.7"/>
<ellipse cx="1138" cy="977" rx="7" ry="3" fill="#a0a0a0" opacity="0.8"/>
<rect x="1131.5" y="959.5" width="11.5" height="17.5" rx="4" fill="#3e3e3e"/>
<ellipse cx="1137" cy="961.5" rx="5.2" ry="3.6" fill="#d8d8d8"/>
<ellipse cx="1136" cy="961" rx="2.5" ry="1.6" fill="#f4f4f4"/>
<text x="1100.3" y="1009" font-size="14" fill="#111" font-weight="bold" text-anchor="start" textLength="95.9" lengthAdjust="spacingAndGlyphs" stroke="#111" stroke-width="0.35">GATE  MOTOR</text>
<text x="1109.9" y="1031.8" font-size="14" fill="#111" font-weight="bold" text-anchor="start" textLength="34.3" lengthAdjust="spacingAndGlyphs" stroke="#111" stroke-width="0.35">Time</text>
<path d="M1102.3 1033.7 C1110.8 1039.7 1110.8 1054.5 1102.3 1062.5 Z" fill="#8e8e8e" opacity="0.8"/>
<path d="M1100.8 1032.7 C1092.3 1039.0 1092.3 1055.2 1100.8 1061.5 C1109.3 1055.2 1109.3 1039.0 1100.8 1032.7 Z" fill="#ececec" stroke="#b8b8b8" stroke-width="0.8"/>
<line x1="1094.8" y1="1047.1" x2="1106.8" y2="1047.1" stroke="#b0b0b0" stroke-width="1"/>
<line x1="1099.3" y1="1043.1" x2="1102.3" y2="1038.1" stroke="#555" stroke-width="1.2"/>
<line x1="1098.3" y1="1051.1" x2="1103.3" y2="1051.1" stroke="#555" stroke-width="1.1"/>
<line x1="1099.8" y1="1051.1" x2="1101.3" y2="1055.1" stroke="#555" stroke-width="1.1"/>
<rect x="1108.8" y="1034.5" width="51.600000000000136" height="25.90000000000009" fill="#a8a8a8"/>
<path d="M1108.8 1060.4 L1160.4 1060.4 L1160.4 1034.5" stroke="#c6c6c6" stroke-width="2" fill="none"/>
<rect x="1111.8" y="1037.5" width="45.600000000000136" height="19.90000000000009" fill="#ffffff"/>
<text x="1113.3" y="1052.49" font-size="14" fill="#111" font-weight="normal" text-anchor="start">1</text>
<text x="1163.4" y="1051.5" font-size="14.2" fill="#111" font-weight="bold" text-anchor="start" textLength="23.2" lengthAdjust="spacingAndGlyphs" stroke="#111" stroke-width="0.35">sec</text>
<rect x="1198" y="1024.3" width="99.7" height="35.5" fill="url(#gBtn)"/>
<rect x="1198.75" y="1025.05" width="98.2" height="34" fill="none" stroke="#4a4a44" stroke-width="1.5"/>
<path d="M1201 1057 L1295.5 1057 L1295.5 1027" stroke="#b0b0a8" stroke-width="1.5" fill="none"/>
<text x="1223.3" y="1048.3" font-size="15.7" fill="#2a9a1a" font-weight="bold" text-anchor="start" textLength="45.7" lengthAdjust="spacingAndGlyphs" stroke="#2a9a1a" stroke-width="0.35">START</text>
</svg></body></html>
